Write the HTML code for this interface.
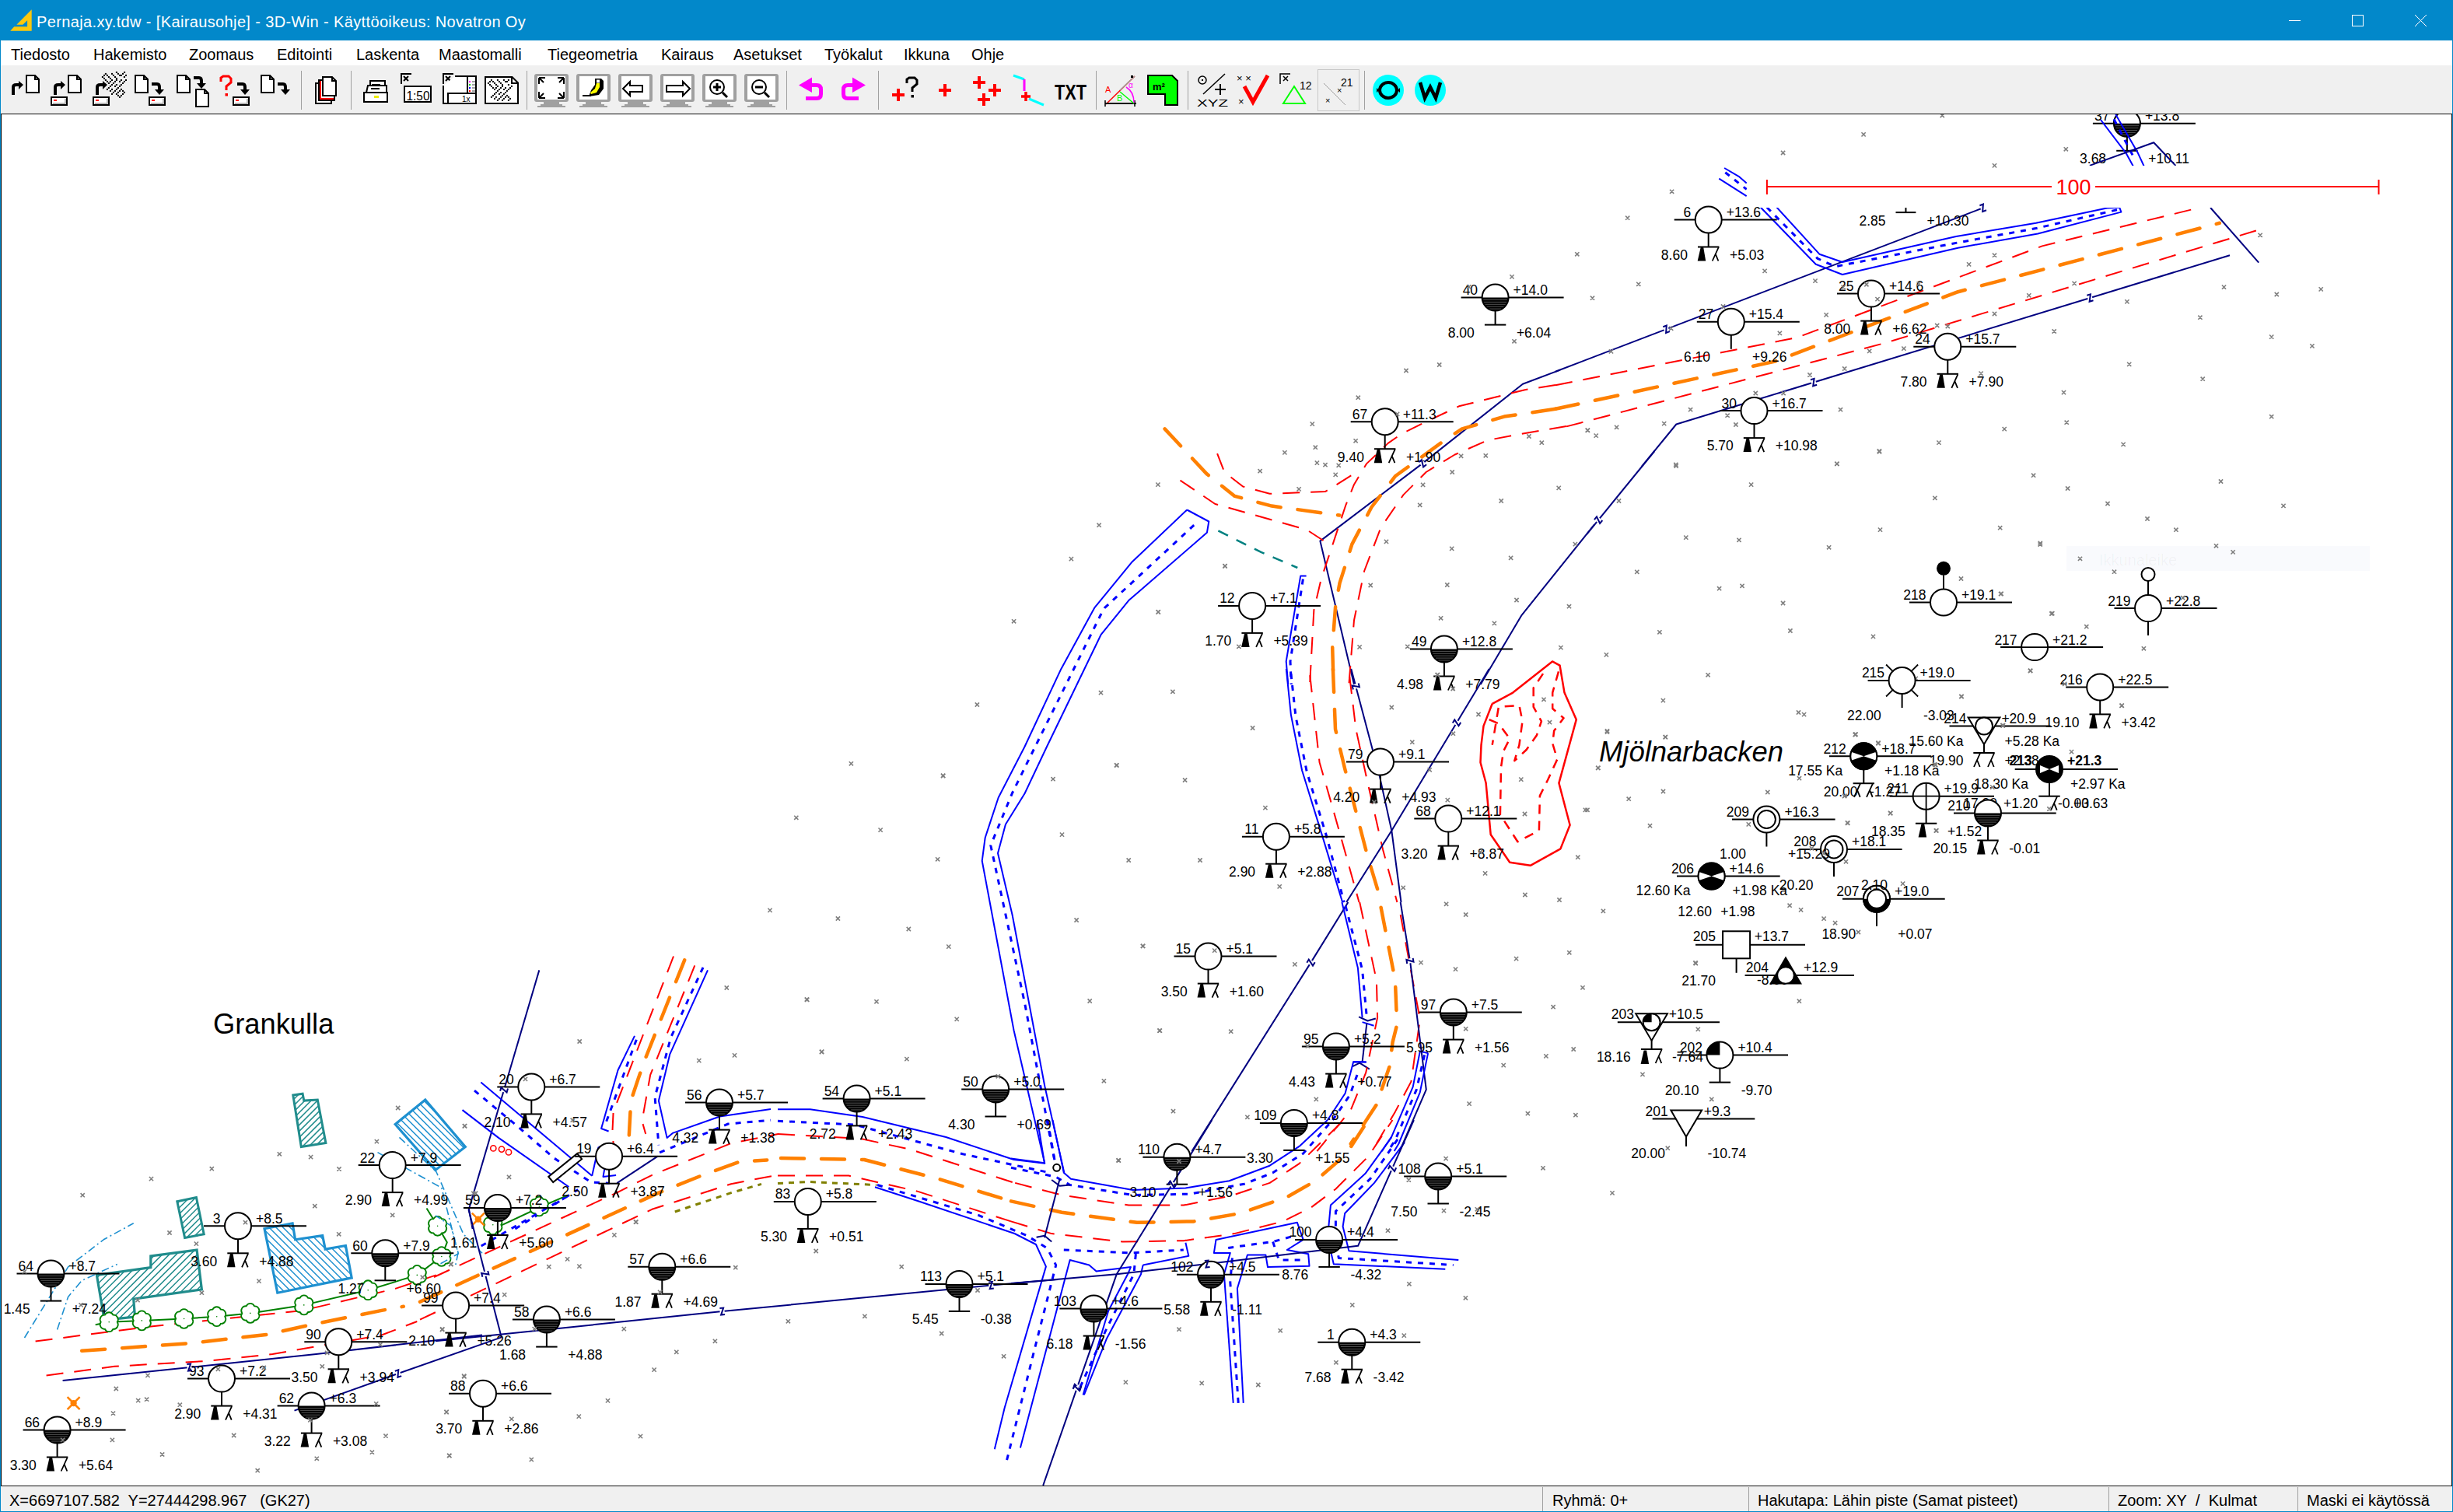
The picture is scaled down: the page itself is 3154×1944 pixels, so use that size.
<!DOCTYPE html><html><head><meta charset="utf-8"><style>
html,body{margin:0;padding:0;width:3154px;height:1944px;overflow:hidden;background:#fff;}
.t{position:absolute;white-space:nowrap;font-family:"Liberation Sans",sans-serif;line-height:1;}
svg text{font-family:"Liberation Sans",sans-serif;}
</style></head><body>
<div style="position:absolute;left:0;top:0;width:3154px;height:52px;background:#0288ca"></div>
<svg style="position:absolute;left:0;top:0" width="60" height="52"><path d="M13.2,39.7 L18.2,34.2 H35.1 V26.3 L29.4,31.8 H21.3 L40.7,12.2 V39.7 Z" fill="#fcc80c"/></svg>
<div class="t" style="left:47px;top:18px;font-size:20px;color:#fff;letter-spacing:0.37px;">Pernaja.xy.tdw - [Kairausohje] - 3D-Win - Käyttöoikeus: Novatron Oy</div>
<svg style="position:absolute;left:2900px;top:0" width="254" height="52"><line x1="43" y1="26.5" x2="58" y2="26.5" stroke="#fff" stroke-width="1"/><rect x="124.5" y="19.5" width="14" height="14" fill="none" stroke="#fff" stroke-width="1"/><line x1="205" y1="19" x2="220" y2="34" stroke="#fff" stroke-width="1"/><line x1="220" y1="19" x2="205" y2="34" stroke="#fff" stroke-width="1"/></svg>
<div style="position:absolute;left:0;top:52px;width:3154px;height:32px;background:#fff"></div>
<div class="t" style="left:14px;top:60px;font-size:20px;color:#000;">Tiedosto</div>
<div class="t" style="left:120px;top:60px;font-size:20px;color:#000;">Hakemisto</div>
<div class="t" style="left:243px;top:60px;font-size:20px;color:#000;">Zoomaus</div>
<div class="t" style="left:356px;top:60px;font-size:20px;color:#000;">Editointi</div>
<div class="t" style="left:458px;top:60px;font-size:20px;color:#000;">Laskenta</div>
<div class="t" style="left:564px;top:60px;font-size:20px;color:#000;">Maastomalli</div>
<div class="t" style="left:704px;top:60px;font-size:20px;color:#000;">Tiegeometria</div>
<div class="t" style="left:850px;top:60px;font-size:20px;color:#000;">Kairaus</div>
<div class="t" style="left:943px;top:60px;font-size:20px;color:#000;">Asetukset</div>
<div class="t" style="left:1060px;top:60px;font-size:20px;color:#000;">Työkalut</div>
<div class="t" style="left:1162px;top:60px;font-size:20px;color:#000;">Ikkuna</div>
<div class="t" style="left:1249px;top:60px;font-size:20px;color:#000;">Ohje</div>
<div style="position:absolute;left:0;top:84px;width:3154px;height:61px;background:#f0f0f0"></div>
<svg style="position:absolute;left:0;top:0" width="1900" height="146"><defs><clipPath id="tbclip"><rect x="0" y="84" width="1900" height="61"/></clipPath></defs><g clip-path="url(#tbclip)"><path d="M17,122 V112 Q17,109 21,109 H24" fill="none" stroke="#000" stroke-width="4"/><path d="M24,104 L30,109 L24,115 Z" fill="#000"/><path d="M34,97 H45 L50,102 V119 H34 Z" fill="#fff" stroke="#000" stroke-width="2"/><path d="M45,97 V102 H50" fill="none" stroke="#000" stroke-width="2"/><path d="M71,122 V112 Q71,109 75,109 H78" fill="none" stroke="#000" stroke-width="4"/><path d="M78,104 L84,109 L78,115 Z" fill="#000"/><path d="M88,97 H99 L104,102 V119 H88 Z" fill="#fff" stroke="#000" stroke-width="2"/><path d="M99,97 V102 H104" fill="none" stroke="#000" stroke-width="2"/><rect x="66" y="125" width="20" height="10" fill="#fff" stroke="#000" stroke-width="2"/><rect x="69" y="128" width="4" height="2" fill="#f00"/><path d="M68,133 H84 V127" fill="none" stroke="#a0a0a0" stroke-width="1.5"/><rect x="148.9" y="92.0" width="2" height="2" fill="#000"/><rect x="159.1" y="92.0" width="2" height="2" fill="#000"/><rect x="134.9" y="93.9" width="2" height="2" fill="#000"/><rect x="143.0" y="93.9" width="2" height="2" fill="#000"/><rect x="150.9" y="93.9" width="2" height="2" fill="#000"/><rect x="157.0" y="93.9" width="2" height="2" fill="#000"/><rect x="133.0" y="95.9" width="2" height="2" fill="#000"/><rect x="136.9" y="95.9" width="2" height="2" fill="#000"/><rect x="144.9" y="95.9" width="2" height="2" fill="#000"/><rect x="153.0" y="95.9" width="2" height="2" fill="#000"/><rect x="154.9" y="95.9" width="2" height="2" fill="#000"/><rect x="161.0" y="95.9" width="2" height="2" fill="#000"/><rect x="130.9" y="98.0" width="2" height="2" fill="#000"/><rect x="138.9" y="98.0" width="2" height="2" fill="#000"/><rect x="147.0" y="98.0" width="2" height="2" fill="#000"/><rect x="158.9" y="98.0" width="2" height="2" fill="#000"/><rect x="133.0" y="99.9" width="2" height="2" fill="#000"/><rect x="140.9" y="99.9" width="2" height="2" fill="#000"/><rect x="148.9" y="99.9" width="2" height="2" fill="#000"/><rect x="134.9" y="102.0" width="2" height="2" fill="#000"/><rect x="143.0" y="102.0" width="2" height="2" fill="#000"/><rect x="148.9" y="102.0" width="2" height="2" fill="#000"/><rect x="154.9" y="102.0" width="2" height="2" fill="#000"/><rect x="161.0" y="102.0" width="2" height="2" fill="#000"/><rect x="136.9" y="103.9" width="2" height="2" fill="#000"/><rect x="140.9" y="103.9" width="2" height="2" fill="#000"/><rect x="147.0" y="103.9" width="2" height="2" fill="#000"/><rect x="153.0" y="103.9" width="2" height="2" fill="#000"/><rect x="158.9" y="103.9" width="2" height="2" fill="#000"/><rect x="138.9" y="106.0" width="2" height="2" fill="#000"/><rect x="144.9" y="106.0" width="2" height="2" fill="#000"/><rect x="157.0" y="106.0" width="2" height="2" fill="#000"/><rect x="143.0" y="108.0" width="2" height="2" fill="#000"/><rect x="148.9" y="108.0" width="2" height="2" fill="#000"/><rect x="154.9" y="108.0" width="2" height="2" fill="#000"/><rect x="140.9" y="109.9" width="2" height="2" fill="#000"/><rect x="147.0" y="109.9" width="2" height="2" fill="#000"/><rect x="153.0" y="109.9" width="2" height="2" fill="#000"/><rect x="138.9" y="112.0" width="2" height="2" fill="#000"/><rect x="150.9" y="112.0" width="2" height="2" fill="#000"/><rect x="136.9" y="113.9" width="2" height="2" fill="#000"/><rect x="143.0" y="113.9" width="2" height="2" fill="#000"/><rect x="148.9" y="113.9" width="2" height="2" fill="#000"/><rect x="154.9" y="113.9" width="2" height="2" fill="#000"/><rect x="140.9" y="115.9" width="2" height="2" fill="#000"/><rect x="147.0" y="115.9" width="2" height="2" fill="#000"/><rect x="153.0" y="115.9" width="2" height="2" fill="#000"/><rect x="157.0" y="115.9" width="2" height="2" fill="#000"/><rect x="144.9" y="117.8" width="2" height="2" fill="#000"/><rect x="150.9" y="117.8" width="2" height="2" fill="#000"/><rect x="158.9" y="117.8" width="2" height="2" fill="#000"/><rect x="143.0" y="119.9" width="2" height="2" fill="#000"/><rect x="148.9" y="119.9" width="2" height="2" fill="#000"/><rect x="157.0" y="119.9" width="2" height="2" fill="#000"/><rect x="150.9" y="121.9" width="2" height="2" fill="#000"/><rect x="154.9" y="121.9" width="2" height="2" fill="#000"/><rect x="153.0" y="123.9" width="2" height="2" fill="#000"/><path d="M125,122 V112 Q125,109 129,109 H132" fill="none" stroke="#000" stroke-width="4"/><path d="M132,104 L138,109 L132,115 Z" fill="#000"/><rect x="120" y="125" width="20" height="10" fill="#fff" stroke="#000" stroke-width="2"/><rect x="123" y="128" width="4" height="2" fill="#f00"/><path d="M122,133 H138 V127" fill="none" stroke="#a0a0a0" stroke-width="1.5"/><path d="M174,97 H185 L190,102 V119 H174 Z" fill="#fff" stroke="#000" stroke-width="2"/><path d="M185,97 V102 H190" fill="none" stroke="#000" stroke-width="2"/><path d="M195,108 H202 Q205,108 205,112 V116" fill="none" stroke="#000" stroke-width="4"/><path d="M199,115 H211 L205,122 Z" fill="#000"/><rect x="192" y="125" width="20" height="10" fill="#fff" stroke="#000" stroke-width="2"/><rect x="195" y="128" width="4" height="2" fill="#f00"/><path d="M194,133 H210 V127" fill="none" stroke="#a0a0a0" stroke-width="1.5"/><path d="M228,97 H239 L244,102 V119 H228 Z" fill="#fff" stroke="#000" stroke-width="2"/><path d="M239,97 V102 H244" fill="none" stroke="#000" stroke-width="2"/><path d="M249,100 H256 Q259,100 259,104 V108" fill="none" stroke="#000" stroke-width="4"/><path d="M253,107 H265 L259,114 Z" fill="#000"/><path d="M252,115 H263 L268,120 V137 H252 Z" fill="#fff" stroke="#000" stroke-width="2"/><path d="M263,115 V120 H268" fill="none" stroke="#000" stroke-width="2"/><path d="M284,105 V100 L287,98 H294 L297,101 V106 L291,111 V116" fill="none" stroke="#f00" stroke-width="3"/><rect x="289.5" y="120" width="3.5" height="3.5" fill="#f00"/><path d="M305,108 H312 Q315,108 315,112 V116" fill="none" stroke="#000" stroke-width="4"/><path d="M309,115 H321 L315,122 Z" fill="#000"/><rect x="300" y="125" width="20" height="10" fill="#fff" stroke="#000" stroke-width="2"/><rect x="303" y="128" width="4" height="2" fill="#f00"/><path d="M302,133 H318 V127" fill="none" stroke="#a0a0a0" stroke-width="1.5"/><path d="M336,97 H347 L352,102 V119 H336 Z" fill="#fff" stroke="#000" stroke-width="2"/><path d="M347,97 V102 H352" fill="none" stroke="#000" stroke-width="2"/><path d="M357,108 H364 Q367,108 367,112 V116" fill="none" stroke="#000" stroke-width="4"/><path d="M361,115 H373 L367,122 Z" fill="#000"/><rect x="387" y="91" width="1" height="50" fill="#a0a0a0"/><rect x="406" y="107" width="20" height="26" fill="#fff" stroke="#000" stroke-width="2"/><rect x="410" y="103" width="20" height="26" fill="#fff" stroke="#000" stroke-width="2"/><path d="M412,104 V127 H429" fill="none" stroke="#f00" stroke-width="2"/><path d="M415,99 H427 L432,104 V123 H415 Z" fill="#fff" stroke="#000" stroke-width="2"/><path d="M427,99 V104 H432" fill="none" stroke="#000" stroke-width="2"/><rect x="451" y="91" width="1" height="50" fill="#a0a0a0"/><path d="M476,104 H495 V110 H476 Z" fill="#fff" stroke="#000" stroke-width="2"/><path d="M468,119 H498 V131 H468 Z" fill="#fff" stroke="#000" stroke-width="2"/><path d="M473,110 H497 V119 H471 Z" fill="#fff" stroke="#000" stroke-width="2"/><rect x="481" y="123" width="6" height="3" fill="#ee0"/><rect x="478" y="108" width="11" height="2" fill="#000"/><rect x="477" y="113" width="11" height="2" fill="#000"/><path d="M516,108 V95 H529" fill="none" stroke="#000" stroke-width="2"/><path d="M519,98 L525,104 M525,98 L519,104" stroke="#000" stroke-width="2"/><rect x="520" y="111" width="34" height="20" fill="#fff" stroke="#000" stroke-width="2"/><text x="522.5" y="128.5" font-size="17" fill="#000" style="font-family:'Liberation Sans'" textLength="30" lengthAdjust="spacingAndGlyphs">1:50</text><path d="M570,108 V95 H583" fill="none" stroke="#000" stroke-width="2"/><path d="M573,98 L579,104 M579,98 L573,104" stroke="#000" stroke-width="2"/><path d="M585,98 H612 V133 H570 V110" fill="#fff" stroke="#000" stroke-width="2"/><path d="M601,98 V120 M576,133 V120 H612" fill="none" stroke="#000" stroke-width="2"/><rect x="603" y="104" width="2" height="2" fill="#f0f"/><rect x="603" y="108" width="2" height="2" fill="#0c0"/><rect x="603" y="112" width="2" height="2" fill="#00f"/><rect x="603" y="116" width="2" height="2" fill="#f00"/><path d="M607,105 H611 M607,109 H611 M607,113 H611 M607,117 H611" stroke="#a0a0a0" stroke-width="2"/><text x="594" y="131" font-size="10" fill="#000" style="font-family:'Liberation Sans'">1x</text><path d="M624,99 H658.5 L666,106.5 V133 H624 Z" fill="#fff" stroke="#000" stroke-width="2"/><path d="M658,99 V107 H666" fill="none" stroke="#000" stroke-width="2"/><rect x="630.9" y="101.9" width="2" height="2" fill="#000"/><rect x="638.9" y="101.9" width="2" height="2" fill="#000"/><rect x="646.9" y="101.9" width="2" height="2" fill="#000"/><rect x="652.9" y="101.9" width="2" height="2" fill="#000"/><rect x="629.0" y="104.0" width="2" height="2" fill="#000"/><rect x="632.9" y="104.0" width="2" height="2" fill="#000"/><rect x="640.9" y="104.0" width="2" height="2" fill="#000"/><rect x="649.0" y="104.0" width="2" height="2" fill="#000"/><rect x="650.9" y="104.0" width="2" height="2" fill="#000"/><rect x="626.9" y="105.9" width="2" height="2" fill="#000"/><rect x="635.0" y="105.9" width="2" height="2" fill="#000"/><rect x="642.9" y="105.9" width="2" height="2" fill="#000"/><rect x="629.0" y="108.0" width="2" height="2" fill="#000"/><rect x="636.9" y="108.0" width="2" height="2" fill="#000"/><rect x="645.0" y="108.0" width="2" height="2" fill="#000"/><rect x="652.9" y="108.0" width="2" height="2" fill="#000"/><rect x="630.9" y="109.9" width="2" height="2" fill="#000"/><rect x="638.9" y="109.9" width="2" height="2" fill="#000"/><rect x="645.0" y="109.9" width="2" height="2" fill="#000"/><rect x="656.9" y="109.9" width="2" height="2" fill="#000"/><rect x="632.9" y="112.0" width="2" height="2" fill="#000"/><rect x="636.9" y="112.0" width="2" height="2" fill="#000"/><rect x="642.9" y="112.0" width="2" height="2" fill="#000"/><rect x="649.0" y="112.0" width="2" height="2" fill="#000"/><rect x="655.0" y="112.0" width="2" height="2" fill="#000"/><rect x="635.0" y="114.0" width="2" height="2" fill="#000"/><rect x="640.9" y="114.0" width="2" height="2" fill="#000"/><rect x="646.9" y="114.0" width="2" height="2" fill="#000"/><rect x="652.9" y="114.0" width="2" height="2" fill="#000"/><rect x="638.9" y="115.9" width="2" height="2" fill="#000"/><rect x="650.9" y="115.9" width="2" height="2" fill="#000"/><rect x="636.9" y="118.0" width="2" height="2" fill="#000"/><rect x="642.9" y="118.0" width="2" height="2" fill="#000"/><rect x="649.0" y="118.0" width="2" height="2" fill="#000"/><rect x="635.0" y="119.9" width="2" height="2" fill="#000"/><rect x="640.9" y="119.9" width="2" height="2" fill="#000"/><rect x="646.9" y="119.9" width="2" height="2" fill="#000"/><rect x="632.9" y="121.9" width="2" height="2" fill="#000"/><rect x="645.0" y="121.9" width="2" height="2" fill="#000"/><rect x="650.9" y="121.9" width="2" height="2" fill="#000"/><rect x="630.9" y="123.8" width="2" height="2" fill="#000"/><rect x="636.9" y="123.8" width="2" height="2" fill="#000"/><rect x="642.9" y="123.8" width="2" height="2" fill="#000"/><rect x="649.0" y="123.8" width="2" height="2" fill="#000"/><rect x="652.9" y="123.8" width="2" height="2" fill="#000"/><rect x="635.0" y="125.9" width="2" height="2" fill="#000"/><rect x="640.9" y="125.9" width="2" height="2" fill="#000"/><rect x="646.9" y="125.9" width="2" height="2" fill="#000"/><rect x="655.0" y="125.9" width="2" height="2" fill="#000"/><rect x="638.9" y="127.9" width="2" height="2" fill="#000"/><rect x="645.0" y="127.9" width="2" height="2" fill="#000"/><rect x="652.9" y="127.9" width="2" height="2" fill="#000"/><rect x="677" y="91" width="1" height="50" fill="#a0a0a0"/><g transform="translate(687,94)"><rect x="0" y="1" width="44" height="36" rx="3" fill="#a0a0a0"/><rect x="4" y="4" width="36" height="30" fill="#fff"/><rect x="12" y="37" width="20" height="3" fill="#a0a0a0"/><rect x="8" y="40" width="28" height="2" fill="#a0a0a0"/><rect x="4" y="42" width="36" height="2" fill="#a0a0a0"/><path d="M6,6 h8 M6,6 v8 M6,6 l6,6 M38,6 h-8 M38,6 v8 M38,6 l-6,6 M6,32 h8 M6,32 v-8 M6,32 l6,-6 M38,32 h-8 M38,32 v-8 M38,32 l-6,-6" stroke="#000" stroke-width="2" fill="none"/></g><g transform="translate(741,94)"><rect x="0" y="1" width="44" height="36" rx="3" fill="#a0a0a0"/><rect x="4" y="4" width="36" height="30" fill="#fff"/><rect x="12" y="37" width="20" height="3" fill="#a0a0a0"/><rect x="8" y="40" width="28" height="2" fill="#a0a0a0"/><rect x="4" y="42" width="36" height="2" fill="#a0a0a0"/><path d="M8,29 H19" stroke="#000" stroke-width="2"/><path d="M16,30 L29,28 L35,20 V10 L32,7 H24 V15 L19,22 Z" fill="#000"/><path d="M19,27 L26,25 L30,18 V13 H26 L24,20 L18,25 Z" fill="#ff0"/><rect x="26" y="8.5" width="4" height="4" fill="#fff"/></g><g transform="translate(795,94)"><rect x="0" y="1" width="44" height="36" rx="3" fill="#a0a0a0"/><rect x="4" y="4" width="36" height="30" fill="#fff"/><rect x="12" y="37" width="20" height="3" fill="#a0a0a0"/><rect x="8" y="40" width="28" height="2" fill="#a0a0a0"/><rect x="4" y="42" width="36" height="2" fill="#a0a0a0"/><path d="M6,20 L15,11 V16 H31 V24 H15 V29 Z" fill="#fff" stroke="#000" stroke-width="2"/></g><g transform="translate(849,94)"><rect x="0" y="1" width="44" height="36" rx="3" fill="#a0a0a0"/><rect x="4" y="4" width="36" height="30" fill="#fff"/><rect x="12" y="37" width="20" height="3" fill="#a0a0a0"/><rect x="8" y="40" width="28" height="2" fill="#a0a0a0"/><rect x="4" y="42" width="36" height="2" fill="#a0a0a0"/><path d="M38,20 L29,11 V16 H8 V24 H29 V29 Z" fill="#fff" stroke="#000" stroke-width="2"/></g><g transform="translate(903,94)"><rect x="0" y="1" width="44" height="36" rx="3" fill="#a0a0a0"/><rect x="4" y="4" width="36" height="30" fill="#fff"/><rect x="12" y="37" width="20" height="3" fill="#a0a0a0"/><rect x="8" y="40" width="28" height="2" fill="#a0a0a0"/><rect x="4" y="42" width="36" height="2" fill="#a0a0a0"/><circle cx="19" cy="18" r="9" fill="#fff" stroke="#000" stroke-width="2"/><path d="M14,18 H24 M19,13 V23" stroke="#000" stroke-width="3"/><path d="M26,25 L32,31" stroke="#000" stroke-width="3"/></g><g transform="translate(957,94)"><rect x="0" y="1" width="44" height="36" rx="3" fill="#a0a0a0"/><rect x="4" y="4" width="36" height="30" fill="#fff"/><rect x="12" y="37" width="20" height="3" fill="#a0a0a0"/><rect x="8" y="40" width="28" height="2" fill="#a0a0a0"/><rect x="4" y="42" width="36" height="2" fill="#a0a0a0"/><circle cx="19" cy="18" r="9" fill="#fff" stroke="#000" stroke-width="2"/><path d="M14,18 H24" stroke="#000" stroke-width="3"/><path d="M26,25 L32,31" stroke="#000" stroke-width="3"/></g><rect x="1011" y="91" width="1" height="50" fill="#a0a0a0"/><path d="M1043,109.5 H1050 Q1055.5,109.5 1055.5,115 V121 Q1055.5,126.5 1050,126.5 H1036" fill="none" stroke="#f0f" stroke-width="5"/><path d="M1027,109.5 L1044,99.5 V119 Z" fill="#f0f"/><path d="M1097,109.5 H1090 Q1084.5,109.5 1084.5,115 V121 Q1084.5,126.5 1090,126.5 H1104" fill="none" stroke="#f0f" stroke-width="5"/><path d="M1113,109.5 L1096,99.5 V119 Z" fill="#f0f"/><rect x="1129" y="91" width="1" height="50" fill="#a0a0a0"/><path d="M1147,122 H1163 M1155,114 V130" stroke="#f00" stroke-width="4" fill="none"/><path d="M1166,107 V102 L1169,100 H1176 L1179,103 V108 L1173,113 V118" fill="none" stroke="#000" stroke-width="3"/><rect x="1171.5" y="122" width="3.5" height="3.5" fill="#000"/><path d="M1207,116 H1223 M1215,108 V124" stroke="#f00" stroke-width="4" fill="none"/><path d="M1251,106 H1267 M1259,98 V114" stroke="#f00" stroke-width="4" fill="none"/><path d="M1271,116 H1287 M1279,108 V124" stroke="#f00" stroke-width="4" fill="none"/><path d="M1257,128 H1273 M1265,120 V136" stroke="#f00" stroke-width="4" fill="none"/><path d="M1303,97 L1317,102" stroke="#0ff" stroke-width="3"/><path d="M1317,102 V117" stroke="#f0f" stroke-width="3"/><path d="M1323,127 L1342,135" stroke="#0ff" stroke-width="3"/><path d="M1313,124 H1325 M1319,118 V130" stroke="#f00" stroke-width="3.5" fill="none"/><text x="1356" y="128" font-size="28" font-weight="bold" fill="#000" style="font-family:'Liberation Sans'" textLength="41" lengthAdjust="spacingAndGlyphs">TXT</text><rect x="1409" y="91" width="1" height="50" fill="#a0a0a0"/><path d="M1422,134 L1459,98" stroke="#f00" stroke-width="1.5"/><path d="M1440,116 L1459,98" stroke="#a0a0a0" stroke-width="1.5"/><path d="M1421,133 H1461" stroke="#000" stroke-width="2"/><path d="M1421,129 V137 M1459,129 V137" stroke="#000" stroke-width="1.5"/><path d="M1440,118 L1458,133" stroke="#0f0" stroke-width="1.5"/><path d="M1448,112 Q1458,118 1458,132" stroke="#f0f" stroke-width="1.5" fill="none"/><rect x="1454" y="97" width="3" height="3" fill="#000"/><text x="1421" y="119" font-size="11" fill="#f00" style="font-family:'Liberation Sans'">A</text><text x="1436" y="130" font-size="11" fill="#0f0" style="font-family:'Liberation Sans'">B</text><text x="1451" y="113" font-size="10" fill="#f0f" style="font-family:'Liberation Sans'">α</text><path d="M1476,97 H1507 L1514,104 V135 H1498 V121 H1476 Z" fill="#0f0" stroke="#000" stroke-width="2"/><text x="1482" y="116" font-size="13" font-weight="bold" fill="#000" style="font-family:'Liberation Sans'">m²</text><rect x="1527" y="91" width="1" height="50" fill="#a0a0a0"/><circle cx="1546" cy="103" r="5" fill="none" stroke="#000" stroke-width="1.5"/><rect x="1545" y="102" width="2" height="2" fill="#000"/><path d="M1547,121 L1575,95" stroke="#000" stroke-width="1.5"/><path d="M1562,115 H1576 M1569,108 V122" stroke="#000" stroke-width="2"/><text x="1539" y="137" font-size="13" fill="#000" style="font-family:'Liberation Sans'" textLength="40" lengthAdjust="spacingAndGlyphs">XYZ</text><text x="1590" y="105" font-size="13" fill="#000" style="font-family:'Liberation Sans'">× ×</text><text x="1592" y="135" font-size="13" fill="#000" style="font-family:'Liberation Sans'">×</text><path d="M1600,111 L1611,131 L1630,97" stroke="#f00" stroke-width="5" fill="none"/><path d="M1646,108 V95 H1659" fill="none" stroke="#000" stroke-width="1.5"/><path d="M1650,98 L1656,104 M1656,98 L1650,104" stroke="#000" stroke-width="1.5"/><path d="M1650,133 L1664,111 L1678,133 Z" fill="none" stroke="#0f0" stroke-width="2"/><text x="1671" y="115" font-size="14" fill="#000" style="font-family:'Liberation Sans'">12</text><rect x="1694.5" y="89.5" width="53" height="53" fill="#f0f0f0" stroke="#c8c8c8" stroke-width="1"/><path d="M1702,107 L1730,135" stroke="#a0a0a0" stroke-width="1"/><text x="1704" y="133" font-size="11" fill="#000" style="font-family:'Liberation Sans'">×</text><text x="1719" y="120" font-size="11" fill="#000" style="font-family:'Liberation Sans'">×</text><text x="1724" y="111" font-size="14" fill="#000" style="font-family:'Liberation Sans'">21</text><rect x="1754" y="91" width="1" height="50" fill="#a0a0a0"/><circle cx="1785" cy="116" r="20" fill="#0ff"/><ellipse cx="1785" cy="116" rx="11" ry="10" fill="none" stroke="#000" stroke-width="4"/><path d="M1773,116 l-3,-3 v6 z M1797,116 l3,-3 v6z" fill="#000"/><circle cx="1839" cy="116" r="20" fill="#0ff"/><path d="M1826,106 L1832,126 L1839,112 L1846,126 L1852,106" fill="none" stroke="#000" stroke-width="4.5"/></g></svg>
<div style="position:absolute;left:1px;top:146px;width:3152px;height:1765px;border:1px solid #000;box-sizing:border-box;background:#fff"></div>
<div style="position:absolute;left:0;top:145px;width:3154px;height:1px;background:#fff"></div>
<svg style="position:absolute;left:0;top:0" width="3154" height="1944"><defs><clipPath id="dc"><rect x="2" y="147" width="3150" height="1763"/></clipPath></defs><g clip-path="url(#dc)">
<polyline points="2000.0,477.8 2550.4,267.0" fill="none" stroke="#000080" stroke-width="2" stroke-linecap="butt" stroke-linejoin="round"/>
<polyline points="2110.6,600.1 2155.3,545.5 2867.0,328.2" fill="none" stroke="#000080" stroke-width="2" stroke-linecap="butt" stroke-linejoin="round"/>
<polyline points="2842.1,267.0 2904.2,337.6" fill="none" stroke="#000080" stroke-width="2" stroke-linecap="butt" stroke-linejoin="round"/>
<polyline points="2263.9,266.7 2334.7,339.7 2368.9,353.0 2517.4,318.7 2620.1,300.5 2727.4,272.6 2725.1,266.7" fill="none" stroke="#0000ff" stroke-width="2" stroke-linecap="butt" stroke-linejoin="round"/>
<polyline points="2284.5,266.7 2339.3,326.7 2368.9,337.0 2515.1,303.9 2617.8,286.8 2709.1,267.4 2725.1,266.7" fill="none" stroke="#0000ff" stroke-width="2" stroke-linecap="butt" stroke-linejoin="round"/>
<polyline points="2271.9,266.7 2337.0,332.4 2359.8,342.7 2517.4,311.9 2617.8,293.6 2722.8,269.6" fill="none" stroke="#0000ff" stroke-width="3" stroke-dasharray="7 8" stroke-linecap="butt" stroke-linejoin="round"/>
<polyline points="2217.1,216.0 2236.5,227.4 2245.7,235.4" fill="none" stroke="#0000ff" stroke-width="2" stroke-linecap="butt" stroke-linejoin="round"/>
<polyline points="2210.3,229.7 2245.7,252.1" fill="none" stroke="#0000ff" stroke-width="2" stroke-linecap="butt" stroke-linejoin="round"/>
<polyline points="2218.3,221.7 2245.7,243.4" fill="none" stroke="#0000ff" stroke-width="3" stroke-dasharray="7 8" stroke-linecap="butt" stroke-linejoin="round"/>
<polyline points="2000.0,495.2 2310.5,434.0 2625.7,316.4 2828.0,267.0" fill="none" stroke="#ff0000" stroke-width="2" stroke-dasharray="22 14" stroke-linecap="butt" stroke-linejoin="round"/>
<polyline points="2000.0,525.8 2282.3,464.6 2517.5,375.2 2853.9,286.8" fill="none" stroke="#ff8000" stroke-width="4.5" stroke-dasharray="30 22" stroke-linecap="round" stroke-linejoin="round"/>
<polyline points="2014.1,548.4 2423.4,441.1 2912.7,292.9" fill="none" stroke="#ff0000" stroke-width="2" stroke-dasharray="22 14" stroke-linecap="butt" stroke-linejoin="round"/>
<line x1="2690.9" y1="158.8" x2="2822.9" y2="158.8" stroke="#000" stroke-width="2"/>
<circle cx="2734.9" cy="158.8" r="17" fill="#fff" stroke="#000" stroke-width="2"/><path d="M2717.9,158.8 A17,17 0 0 0 2751.9,158.8 Z" fill="#000"/><line x1="2719.6" y1="161.7" x2="2750.2" y2="161.7" stroke="#777" stroke-width="0.7"/><line x1="2720.4" y1="164.6" x2="2749.4" y2="164.6" stroke="#777" stroke-width="0.7"/><line x1="2721.8" y1="167.5" x2="2748.0" y2="167.5" stroke="#777" stroke-width="0.7"/><line x1="2724.0" y1="170.4" x2="2745.8" y2="170.4" stroke="#777" stroke-width="0.7"/><line x1="2727.5" y1="173.3" x2="2742.3" y2="173.3" stroke="#777" stroke-width="0.7"/>
<text x="2712.4" y="155.20000000000002" font-size="17.5" fill="#000" text-anchor="end">37</text>
<text x="2757.9" y="155.20000000000002" font-size="17.5" fill="#000" text-anchor="start">+13.8</text>
<line x1="2734.9" y1="175.8" x2="2734.9" y2="193.8" stroke="#000" stroke-width="2"/>
<line x1="2721.2000000000003" y1="193.8" x2="2748.6" y2="193.8" stroke="#000" stroke-width="2"/>
<text x="2708.1" y="210.10000000000002" font-size="17.5" fill="#000" text-anchor="end">3.68</text>
<text x="2762.2000000000003" y="210.10000000000002" font-size="17.5" fill="#000" text-anchor="start">+10.11</text>
<polyline points="2701,154 2733.4,196.6 2743,213.9" fill="none" stroke="#0000ff" stroke-width="2" stroke-linecap="butt" stroke-linejoin="round"/>
<polyline points="2720.2,147.1 2748.8,196.6 2756.8,213.9" fill="none" stroke="#0000ff" stroke-width="2" stroke-linecap="butt" stroke-linejoin="round"/>
<polyline points="2718,153.3 2744.4,204" fill="none" stroke="#0000ff" stroke-width="3" stroke-dasharray="7 8" stroke-linecap="butt" stroke-linejoin="round"/>
<polyline points="2686.9,212.9 2769.2,183.3 2797.4,212.9" fill="none" stroke="#000080" stroke-width="2" stroke-linecap="butt" stroke-linejoin="round"/>
<rect x="2246" y="213" width="908" height="54" fill="#fff"/>
<line x1="2271.9" y1="240" x2="3058.5" y2="240" stroke="#f00" stroke-width="2"/>
<line x1="2271.9" y1="231" x2="2271.9" y2="250" stroke="#f00" stroke-width="2"/><line x1="3058.5" y1="231" x2="3058.5" y2="250" stroke="#f00" stroke-width="2"/>
<rect x="2638" y="226" width="56" height="28" fill="#fff"/>
<text x="2666" y="250" font-size="27" fill="#f00" text-anchor="middle">100</text>
<line x1="2152.7" y1="282.5" x2="2284.7" y2="282.5" stroke="#000" stroke-width="2"/>
<circle cx="2196.7" cy="282.5" r="17" fill="#fff" stroke="#000" stroke-width="2"/>
<text x="2174.2" y="278.9" font-size="17.5" fill="#000" text-anchor="end">6</text>
<text x="2219.7" y="278.9" font-size="17.5" fill="#000" text-anchor="start">+13.6</text>
<line x1="2196.7" y1="299.5" x2="2196.7" y2="317.5" stroke="#000" stroke-width="2"/>
<line x1="2183.0" y1="317.5" x2="2210.3999999999996" y2="317.5" stroke="#000" stroke-width="2"/>
<path d="M2182.7,335.5 H2193.2 L2190.2,318.0 H2186.7 Z" fill="#000"/><path d="M2209.7,318.0 L2201.7,335.5 M2205.8999999999996,327.0 L2209.3999999999996,335.5" stroke="#000" stroke-width="1.8" fill="none"/>
<text x="2169.8999999999996" y="333.8" font-size="17.5" fill="#000" text-anchor="end">8.60</text>
<text x="2224.0" y="333.8" font-size="17.5" fill="#000" text-anchor="start">+5.03</text>
<line x1="2362.0" y1="377.6" x2="2494.0" y2="377.6" stroke="#000" stroke-width="2"/>
<circle cx="2406.0" cy="377.6" r="17" fill="#fff" stroke="#000" stroke-width="2"/>
<text x="2383.5" y="374.0" font-size="17.5" fill="#000" text-anchor="end">25</text>
<text x="2429.0" y="374.0" font-size="17.5" fill="#000" text-anchor="start">+14.6</text>
<line x1="2406.0" y1="394.6" x2="2406.0" y2="412.6" stroke="#000" stroke-width="2"/>
<line x1="2392.3" y1="412.6" x2="2419.7" y2="412.6" stroke="#000" stroke-width="2"/>
<path d="M2392.0,430.6 H2402.5 L2399.5,413.1 H2396.0 Z" fill="#000"/><path d="M2419.0,413.1 L2411.0,430.6 M2415.2,422.1 L2418.7,430.6" stroke="#000" stroke-width="1.8" fill="none"/>
<text x="2379.2" y="428.90000000000003" font-size="17.5" fill="#000" text-anchor="end">8.00</text>
<text x="2433.3" y="428.90000000000003" font-size="17.5" fill="#000" text-anchor="start">+6.62</text>
<line x1="2181.8" y1="413.8" x2="2313.8" y2="413.8" stroke="#000" stroke-width="2"/>
<circle cx="2225.8" cy="413.8" r="17" fill="#fff" stroke="#000" stroke-width="2"/>
<text x="2203.3" y="410.2" font-size="17.5" fill="#000" text-anchor="end">27</text>
<text x="2248.8" y="410.2" font-size="17.5" fill="#000" text-anchor="start">+15.4</text>
<line x1="2225.8" y1="430.8" x2="2225.8" y2="448.8" stroke="#000" stroke-width="2"/>
<text x="2199.0" y="465.1" font-size="17.5" fill="#000" text-anchor="end">6.10</text>
<text x="2253.1000000000004" y="465.1" font-size="17.5" fill="#000" text-anchor="start">+9.26</text>
<line x1="2460.3" y1="445.8" x2="2592.3" y2="445.8" stroke="#000" stroke-width="2"/>
<circle cx="2504.3" cy="445.8" r="17" fill="#fff" stroke="#000" stroke-width="2"/>
<text x="2481.8" y="442.2" font-size="17.5" fill="#000" text-anchor="end">24</text>
<text x="2527.3" y="442.2" font-size="17.5" fill="#000" text-anchor="start">+15.7</text>
<line x1="2504.3" y1="462.8" x2="2504.3" y2="480.8" stroke="#000" stroke-width="2"/>
<line x1="2490.6000000000004" y1="480.8" x2="2518.0" y2="480.8" stroke="#000" stroke-width="2"/>
<path d="M2490.3,498.8 H2500.8 L2497.8,481.3 H2494.3 Z" fill="#000"/><path d="M2517.3,481.3 L2509.3,498.8 M2513.5,490.3 L2517.0,498.8" stroke="#000" stroke-width="1.8" fill="none"/>
<text x="2477.5" y="497.1" font-size="17.5" fill="#000" text-anchor="end">7.80</text>
<text x="2531.6000000000004" y="497.1" font-size="17.5" fill="#000" text-anchor="start">+7.90</text>
<line x1="2211.5" y1="528.1" x2="2343.5" y2="528.1" stroke="#000" stroke-width="2"/>
<circle cx="2255.5" cy="528.1" r="17" fill="#fff" stroke="#000" stroke-width="2"/>
<text x="2233.0" y="524.5" font-size="17.5" fill="#000" text-anchor="end">30</text>
<text x="2278.5" y="524.5" font-size="17.5" fill="#000" text-anchor="start">+16.7</text>
<line x1="2255.5" y1="545.1" x2="2255.5" y2="563.1" stroke="#000" stroke-width="2"/>
<line x1="2241.8" y1="563.1" x2="2269.2" y2="563.1" stroke="#000" stroke-width="2"/>
<path d="M2241.5,581.1 H2252.0 L2249.0,563.6 H2245.5 Z" fill="#000"/><path d="M2268.5,563.6 L2260.5,581.1 M2264.7,572.6 L2268.2,581.1" stroke="#000" stroke-width="1.8" fill="none"/>
<text x="2228.7" y="579.4" font-size="17.5" fill="#000" text-anchor="end">5.70</text>
<text x="2282.8" y="579.4" font-size="17.5" fill="#000" text-anchor="start">+10.98</text>
<text x="2390.5" y="289.6" font-size="17.5" fill="#000" text-anchor="start">2.85</text>
<text x="2477.5" y="289.6" font-size="17.5" fill="#000" text-anchor="start">+10.30</text>
<line x1="2437.5" y1="273.1" x2="2463.4" y2="273.1" stroke="#000" stroke-width="2"/><line x1="2450.45" y1="267.1" x2="2450.45" y2="273.1" stroke="#000" stroke-width="2"/>
<path d="M2494.7000000000003,145.9L2499.9,151.1M2499.9,145.9L2494.7000000000003,151.1M2393.5,170.3L2398.7,175.5M2398.7,170.3L2393.5,175.5M2290.0,193.9L2295.2,199.1M2295.2,193.9L2290.0,199.1M2653.7000000000003,189.20000000000002L2658.9,194.4M2658.9,189.20000000000002L2653.7000000000003,194.4M2147.0,243.70000000000002L2152.2,248.9M2152.2,243.70000000000002L2147.0,248.9M2090.1,277.59999999999997L2095.2999999999997,282.8M2095.2999999999997,277.59999999999997L2090.1,282.8M2025.2,324.2L2030.3999999999999,329.40000000000003M2030.3999999999999,324.2L2025.2,329.40000000000003M2266.5,345.79999999999995L2271.7,351.0M2271.7,345.79999999999995L2266.5,351.0M2331.4,358.5L2336.6,363.70000000000005M2336.6,358.5L2331.4,363.70000000000005M2104.2000000000003,362.7L2109.4,367.90000000000003M2109.4,362.7L2104.2000000000003,367.90000000000003M2044.9,380.59999999999997L2050.1,385.8M2050.1,380.59999999999997L2044.9,385.8M2529.0,337.29999999999995L2534.2,342.5M2534.2,337.29999999999995L2529.0,342.5M2561.9,325.59999999999997L2567.1,330.8M2567.1,325.59999999999997L2561.9,330.8M2664.5,361.79999999999995L2669.7,367.0M2669.7,361.79999999999995L2664.5,367.0M2606.2000000000003,377.29999999999995L2611.4,382.5M2611.4,377.29999999999995L2606.2000000000003,382.5M2561.9,400.9L2567.1,406.1M2567.1,400.9L2561.9,406.1M2732.3,385.29999999999995L2737.5,390.5M2737.5,385.29999999999995L2732.3,390.5M2856.9,366.5L2862.1,371.70000000000005M2862.1,366.5L2856.9,371.70000000000005M2924.7000000000003,375.9L2929.9,381.1M2929.9,375.9L2924.7000000000003,381.1M2981.6,369.29999999999995L2986.7999999999997,374.5M2986.7999999999997,369.29999999999995L2981.6,374.5M2826.3,405.59999999999997L2831.5,410.8M2831.5,405.59999999999997L2826.3,410.8M2638.6,423.4L2643.7999999999997,428.6M2643.7999999999997,423.4L2638.6,428.6M2285.8,425.79999999999995L2291.0,431.0M2291.0,425.79999999999995L2285.8,431.0M2345.5,402.29999999999995L2350.7,407.5M2350.7,402.29999999999995L2345.5,407.5M2488.1,415.9L2493.2999999999997,421.1M2493.2999999999997,415.9L2488.1,421.1M2501.7000000000003,416.9L2506.9,422.1M2506.9,416.9L2501.7000000000003,422.1M2401.1,448.79999999999995L2406.2999999999997,454.0M2406.2999999999997,448.79999999999995L2401.1,454.0M2445.3,445.5L2450.5,450.70000000000005M2450.5,445.5L2445.3,450.70000000000005M2918.1,430.5L2923.2999999999997,435.70000000000005M2923.2999999999997,430.5L2918.1,435.70000000000005M2970.3,442.29999999999995L2975.5,447.5M2975.5,442.29999999999995L2970.3,447.5M2735.1,465.79999999999995L2740.2999999999997,471.0M2740.2999999999997,465.79999999999995L2735.1,471.0M2544.5,477.5L2549.7,482.70000000000005M2549.7,477.5L2544.5,482.70000000000005M2369.1,471.4L2374.2999999999997,476.6M2374.2999999999997,471.4L2369.1,476.6M2324.4,479.4L2329.6,484.6M2329.6,479.4L2324.4,484.6M2829.6,484.59999999999997L2834.7999999999997,489.8M2834.7999999999997,484.59999999999997L2829.6,489.8M2650.9,502.0L2656.1,507.20000000000005M2656.1,502.0L2650.9,507.20000000000005M2254.7000000000003,502.9L2259.9,508.1M2259.9,502.9L2254.7000000000003,508.1M2290.5,502.9L2295.7,508.1M2295.7,502.9L2290.5,508.1M2171.0,524.1L2176.2,529.3000000000001M2176.2,524.1L2171.0,529.3000000000001M2218.5,531.6L2223.7,536.8000000000001M2223.7,531.6L2218.5,536.8000000000001M2229.3,543.4L2234.5,548.6M2234.5,543.4L2229.3,548.6M2137.1,542.0L2142.2999999999997,547.2M2142.2999999999997,542.0L2137.1,547.2M2076.0,546.6999999999999L2081.2,551.9M2081.2,546.6999999999999L2076.0,551.9M2038.8000000000002,550.5L2044.0,555.7M2044.0,550.5L2038.8000000000002,555.7M2049.6,557.5L2054.7999999999997,562.7M2054.7999999999997,557.5L2049.6,562.7M2363.9,524.1L2369.1,529.3000000000001M2369.1,524.1L2363.9,529.3000000000001M2654.6,540.6L2659.7999999999997,545.8000000000001M2659.7999999999997,540.6L2654.6,545.8000000000001M2918.1,533.1L2923.2999999999997,538.3000000000001M2923.2999999999997,533.1L2918.1,538.3000000000001M2574.6,549.0L2579.7999999999997,554.2M2579.7999999999997,549.0L2574.6,554.2M2490.4,566.5L2495.6,571.7M2495.6,566.5L2490.4,571.7M2727.5,568.8L2732.7,574.0M2732.7,568.8L2727.5,574.0M2413.8,577.3L2419.0,582.5M2419.0,577.3L2413.8,582.5M2359.2000000000003,593.6999999999999L2364.4,598.9M2364.4,593.6999999999999L2359.2000000000003,598.9M2152.2000000000003,594.6999999999999L2157.4,599.9M2157.4,594.6999999999999L2152.2000000000003,599.9M2068.9,449.29999999999995L2074.1,454.5M2074.1,449.29999999999995L2068.9,454.5M2146.1,419.7L2151.2999999999997,424.90000000000003M2151.2999999999997,419.7L2146.1,424.90000000000003M2903.5,299.7L2908.7,304.90000000000003M2908.7,299.7L2903.5,304.90000000000003M2212.9,391.4L2218.1,396.6M2218.1,391.4L2212.9,396.6M2411.4,382.0L2416.6,387.20000000000005M2416.6,382.0L2411.4,387.20000000000005M2367.6,366.5L2372.7999999999997,371.70000000000005M2372.7999999999997,366.5L2367.6,371.70000000000005M2397.3,363.2L2402.5,368.40000000000003M2402.5,363.2L2397.3,368.40000000000003M2464.6,362.29999999999995L2469.7999999999997,367.5M2469.7999999999997,362.29999999999995L2464.6,367.5M2561.9,210.3L2567.1,215.5M2567.1,210.3L2561.9,215.5" stroke="#808080" stroke-width="1.6" fill="none"/>
<polyline points="2006,475.6 1957.9,493.8 1828.3,596.4 1697.4,695.6 1741.0,880.0" fill="none" stroke="#000080" stroke-width="2" stroke-linecap="butt" stroke-linejoin="round"/>
<polyline points="2050.0,674.4 1956.6,790.8 1903.7,880.0" fill="none" stroke="#000080" stroke-width="2" stroke-linecap="butt" stroke-linejoin="round"/>
<polyline points="2000,525.8 1934.1,535.6 1879.9,551.4 1858.7,565.2 1793.9,612.3 1763.5,652.0 1738.4,699.6 1722.5,749.8 1717.2,778.9 1713.2,831.9 1714.6,880.0" fill="none" stroke="#ff8000" stroke-width="4.5" stroke-dasharray="30 22" stroke-linecap="round" stroke-linejoin="round"/>
<polyline points="1497.6,551.4 1551.9,609.6 1587.6,637.9 1635.2,650.6 1722.5,662.5" fill="none" stroke="#ff8000" stroke-width="4.5" stroke-dasharray="30 22" stroke-linecap="round" stroke-linejoin="round"/>
<polyline points="2000,495 1960.6,501.2 1875.9,522.3 1831.0,543.5 1801.9,558.0 1784.7,569.9 1756.9,596.4 1741.0,622.9 1730.4,649.3 1714.6,696.9 1698.7,744.6 1689.4,784.2 1684.1,880.0" fill="none" stroke="#ff0000" stroke-width="2" stroke-dasharray="22 14" stroke-linecap="butt" stroke-linejoin="round"/>
<polyline points="1565.1,583.2 1574.3,607.0 1598.1,625.5 1632.5,634.8 1704.0,632.1 1742.3,608.3" fill="none" stroke="#ff0000" stroke-width="2" stroke-dasharray="22 14" stroke-linecap="butt" stroke-linejoin="round"/>
<polyline points="1517.5,617.6 1562.4,648.0 1680.2,681.1 1706.6,698.3" fill="none" stroke="#ff0000" stroke-width="2" stroke-dasharray="22 14" stroke-linecap="butt" stroke-linejoin="round"/>
<polyline points="2014,548 1947.4,559.4 1913.0,566.0 1870.6,584.5 1833.6,607.0 1804.5,636.1 1775.4,678.4 1754.2,734.0 1741.0,797.5 1734.4,880.0" fill="none" stroke="#ff0000" stroke-width="2" stroke-dasharray="22 14" stroke-linecap="butt" stroke-linejoin="round"/>
<polyline points="1566.4,682.4 1622.0,710.2 1668.3,730.0" fill="none" stroke="#008080" stroke-width="2.5" stroke-dasharray="14 12" stroke-linecap="butt" stroke-linejoin="round"/>
<polyline points="1679.6,740.6 1672.2,740.6 1653.7,850.4 1656.3,880.0" fill="none" stroke="#0000ff" stroke-width="2" stroke-linecap="butt" stroke-linejoin="round"/>
<polyline points="1675.4,744.6 1659.0,850.4 1660.3,880.0" fill="none" stroke="#0000ff" stroke-width="3" stroke-dasharray="7 8" stroke-linecap="butt" stroke-linejoin="round"/>
<line x1="1878.6" y1="382.6" x2="2010.6" y2="382.6" stroke="#000" stroke-width="2"/>
<circle cx="1922.6" cy="382.6" r="17" fill="#fff" stroke="#000" stroke-width="2"/><path d="M1905.6,382.6 A17,17 0 0 0 1939.6,382.6 Z" fill="#000"/><line x1="1907.3" y1="385.5" x2="1937.9" y2="385.5" stroke="#777" stroke-width="0.7"/><line x1="1908.1" y1="388.4" x2="1937.1" y2="388.4" stroke="#777" stroke-width="0.7"/><line x1="1909.5" y1="391.3" x2="1935.7" y2="391.3" stroke="#777" stroke-width="0.7"/><line x1="1911.7" y1="394.2" x2="1933.5" y2="394.2" stroke="#777" stroke-width="0.7"/><line x1="1915.2" y1="397.1" x2="1930.0" y2="397.1" stroke="#777" stroke-width="0.7"/>
<text x="1900.1" y="379.0" font-size="17.5" fill="#000" text-anchor="end">40</text>
<text x="1945.6" y="379.0" font-size="17.5" fill="#000" text-anchor="start">+14.0</text>
<line x1="1922.6" y1="399.6" x2="1922.6" y2="417.6" stroke="#000" stroke-width="2"/>
<line x1="1908.8999999999999" y1="417.6" x2="1936.3" y2="417.6" stroke="#000" stroke-width="2"/>
<text x="1895.8" y="433.90000000000003" font-size="17.5" fill="#000" text-anchor="end">8.00</text>
<text x="1949.8999999999999" y="433.90000000000003" font-size="17.5" fill="#000" text-anchor="start">+6.04</text>
<path d="M1941.4,353.29999999999995L1946.6,358.5M1946.6,353.29999999999995L1941.4,358.5M1944.4,436.2L1949.6,441.40000000000003M1949.6,436.2L1944.4,441.40000000000003M1805.4,473.9L1810.6,479.1M1810.6,473.9L1805.4,479.1M1848.1000000000001,466.4L1853.3,471.6M1853.3,466.4L1848.1000000000001,471.6M1886.2,366.29999999999995L1891.3999999999999,371.5M1891.3999999999999,366.29999999999995L1886.2,371.5" stroke="#808080" stroke-width="1.6" fill="none"/>
<line x1="1736.7" y1="542.2" x2="1868.7" y2="542.2" stroke="#000" stroke-width="2"/>
<circle cx="1780.7" cy="542.2" r="17" fill="#fff" stroke="#000" stroke-width="2"/>
<text x="1758.2" y="538.6" font-size="17.5" fill="#000" text-anchor="end">67</text>
<text x="1803.7" y="538.6" font-size="17.5" fill="#000" text-anchor="start">+11.3</text>
<line x1="1780.7" y1="559.2" x2="1780.7" y2="577.2" stroke="#000" stroke-width="2"/>
<line x1="1767.0" y1="577.2" x2="1794.4" y2="577.2" stroke="#000" stroke-width="2"/>
<path d="M1766.7,595.2 H1777.2 L1774.2,577.7 H1770.7 Z" fill="#000"/><path d="M1793.7,577.7 L1785.7,595.2 M1789.9,586.7 L1793.4,595.2" stroke="#000" stroke-width="1.8" fill="none"/>
<text x="1753.9" y="593.5" font-size="17.5" fill="#000" text-anchor="end">9.40</text>
<text x="1808.0" y="593.5" font-size="17.5" fill="#000" text-anchor="start">+1.90</text>
<line x1="1566.1" y1="778.9" x2="1698.1" y2="778.9" stroke="#000" stroke-width="2"/>
<circle cx="1610.1" cy="778.9" r="17" fill="#fff" stroke="#000" stroke-width="2"/>
<text x="1587.6" y="775.3" font-size="17.5" fill="#000" text-anchor="end">12</text>
<text x="1633.1" y="775.3" font-size="17.5" fill="#000" text-anchor="start">+7.1</text>
<line x1="1610.1" y1="795.9" x2="1610.1" y2="813.9" stroke="#000" stroke-width="2"/>
<line x1="1596.3999999999999" y1="813.9" x2="1623.8" y2="813.9" stroke="#000" stroke-width="2"/>
<path d="M1596.1,831.9 H1606.6 L1603.6,814.4 H1600.1 Z" fill="#000"/><path d="M1623.1,814.4 L1615.1,831.9 M1619.3,823.4 L1622.8,831.9" stroke="#000" stroke-width="1.8" fill="none"/>
<text x="1583.3" y="830.1999999999999" font-size="17.5" fill="#000" text-anchor="end">1.70</text>
<text x="1637.3999999999999" y="830.1999999999999" font-size="17.5" fill="#000" text-anchor="start">+5.39</text>
<line x1="1812.9" y1="834.5" x2="1944.9" y2="834.5" stroke="#000" stroke-width="2"/>
<circle cx="1856.9" cy="834.5" r="17" fill="#fff" stroke="#000" stroke-width="2"/><path d="M1839.9,834.5 A17,17 0 0 0 1873.9,834.5 Z" fill="#000"/><line x1="1841.6" y1="837.4" x2="1872.2" y2="837.4" stroke="#777" stroke-width="0.7"/><line x1="1842.4" y1="840.3" x2="1871.4" y2="840.3" stroke="#777" stroke-width="0.7"/><line x1="1843.8" y1="843.2" x2="1870.0" y2="843.2" stroke="#777" stroke-width="0.7"/><line x1="1846.0" y1="846.1" x2="1867.8" y2="846.1" stroke="#777" stroke-width="0.7"/><line x1="1849.5" y1="849.0" x2="1864.3" y2="849.0" stroke="#777" stroke-width="0.7"/>
<text x="1834.4" y="830.9" font-size="17.5" fill="#000" text-anchor="end">49</text>
<text x="1879.9" y="830.9" font-size="17.5" fill="#000" text-anchor="start">+12.8</text>
<line x1="1856.9" y1="851.5" x2="1856.9" y2="869.5" stroke="#000" stroke-width="2"/>
<line x1="1843.2" y1="869.5" x2="1870.6000000000001" y2="869.5" stroke="#000" stroke-width="2"/>
<path d="M1842.9,887.5 H1853.4 L1850.4,870.0 H1846.9 Z" fill="#000"/><path d="M1869.9,870.0 L1861.9,887.5 M1866.1000000000001,879.0 L1869.6000000000001,887.5" stroke="#000" stroke-width="1.8" fill="none"/>
<text x="1830.1000000000001" y="885.8" font-size="17.5" fill="#000" text-anchor="end">4.98</text>
<text x="1884.2" y="885.8" font-size="17.5" fill="#000" text-anchor="start">+7.79</text>
<path d="M1743.7,508.59999999999997L1748.8999999999999,513.8M1748.8999999999999,508.59999999999997L1743.7,513.8M1684.7,542.5L1689.8999999999999,547.7M1689.8999999999999,542.5L1684.7,547.7M1794.0,529.8L1799.1999999999998,535.0M1799.1999999999998,529.8L1794.0,535.0M1740.5,564.1999999999999L1745.6999999999998,569.4M1745.6999999999998,564.1999999999999L1740.5,569.4M1688.7,572.6L1693.8999999999999,577.8000000000001M1693.8999999999999,572.6L1688.7,577.8000000000001M1649.3000000000002,579.3L1654.5,584.5M1654.5,579.3L1649.3000000000002,584.5M1690.8000000000002,592.5L1696.0,597.7M1696.0,592.5L1690.8000000000002,597.7M1701.4,595.1L1706.6,600.3000000000001M1706.6,595.1L1701.4,600.3000000000001M1718.6000000000001,595.6999999999999L1723.8,600.9M1723.8,595.6999999999999L1718.6000000000001,600.9M1714.6000000000001,607.8L1719.8,613.0M1719.8,607.8L1714.6000000000001,613.0M1617.5,603.1L1622.6999999999998,608.3000000000001M1622.6999999999998,603.1L1617.5,608.3000000000001M1486.3000000000002,620.5L1491.5,625.7M1491.5,620.5L1486.3000000000002,625.7M1667.5,626.3L1672.6999999999998,631.5M1672.6999999999998,626.3L1667.5,631.5M1963.3000000000002,558.4L1968.5,563.6M1968.5,558.4L1963.3000000000002,563.6M1979.7,566.6L1984.8999999999999,571.8000000000001M1984.8999999999999,566.6L1979.7,571.8000000000001M2038.7,550.6999999999999L2043.8999999999999,555.9M2043.8999999999999,550.6999999999999L2038.7,555.9M1876.0,583.6999999999999L1881.1999999999998,588.9M1881.1999999999998,583.6999999999999L1876.0,588.9M1907.7,583.1999999999999L1912.8999999999999,588.4M1912.8999999999999,583.1999999999999L1907.7,588.4M1864.6000000000001,604.4L1869.8,609.6M1869.8,604.4L1864.6000000000001,609.6M1827.0,620.8L1832.1999999999998,626.0M1832.1999999999998,620.8L1827.0,626.0M2001.6000000000001,624.8L2006.8,630.0M2006.8,624.8L2001.6000000000001,630.0M1927.6000000000001,641.4L1932.8,646.6M1932.8,641.4L1927.6000000000001,646.6M1823.1000000000001,646.6999999999999L1828.3,651.9M1828.3,646.6999999999999L1823.1000000000001,651.9M1779.9,693.8L1785.1,699.0M1785.1,693.8L1779.9,699.0M1864.1000000000001,702.8L1869.3,708.0M1869.3,702.8L1864.1000000000001,708.0M2022.8000000000002,697.0L2028.0,702.2M2028.0,697.0L2022.8000000000002,702.2M1940.0,714.6999999999999L1945.1999999999998,719.9M1945.1999999999998,714.6999999999999L1940.0,719.9M1572.5,725.3L1577.6999999999998,730.5M1577.6999999999998,725.3L1572.5,730.5M1759.6000000000001,749.9L1764.8,755.1M1764.8,749.9L1759.6000000000001,755.1M1858.2,749.4L1863.3999999999999,754.6M1863.3999999999999,749.4L1858.2,754.6M1947.4,768.9L1952.6,774.1M1952.6,768.9L1947.4,774.1M2014.9,777.1L2020.1,782.3000000000001M2020.1,777.1L2014.9,782.3000000000001M1486.6000000000001,784.3L1491.8,789.5M1491.8,784.3L1486.6000000000001,789.5M1850.0,792.1999999999999L1855.1999999999998,797.4M1855.1999999999998,792.1999999999999L1850.0,797.4M1918.8000000000002,798.8L1924.0,804.0M1924.0,798.8L1918.8000000000002,804.0M1745.5,829.3L1750.6999999999998,834.5M1750.6999999999998,829.3L1745.5,834.5M1807.2,828.6999999999999L1812.3999999999999,833.9M1812.3999999999999,828.6999999999999L1807.2,833.9M1590.3000000000002,828.6999999999999L1595.5,833.9M1595.5,828.6999999999999L1590.3000000000002,833.9M2004.3000000000002,830.0L2009.5,835.2M2009.5,830.0L2004.3000000000002,835.2M1845.5,865.0L1850.6999999999998,870.2M1850.6999999999998,865.0L1845.5,870.2" stroke="#808080" stroke-width="1.6" fill="none"/>
<polyline points="2127.3,580.0 2040.0,687.1" fill="none" stroke="#000080" stroke-width="2" stroke-linecap="butt" stroke-linejoin="round"/>
<path d="M2152.5,596.4L2157.7,601.6M2157.7,596.4L2152.5,601.6M2359.4,593.8L2364.6,599.0M2364.6,593.8L2359.4,599.0M2413.9,578.1999999999999L2419.1,583.4M2419.1,578.1999999999999L2413.9,583.4M2612.0,608.6L2617.2,613.8000000000001M2617.2,608.6L2612.0,613.8000000000001M2249.0,620.5L2254.2,625.7M2254.2,620.5L2249.0,625.7M2485.3,637.6999999999999L2490.5,642.9M2490.5,637.6999999999999L2485.3,642.9M2078.9,641.4L2084.1,646.6M2084.1,641.4L2078.9,646.6M2414.9,678.5L2420.1,683.7M2420.1,678.5L2414.9,683.7M2569.1,676.1L2574.2999999999997,681.3000000000001M2574.2999999999997,676.1L2569.1,681.3000000000001M2620.7000000000003,695.9L2625.9,701.1M2625.9,695.9L2620.7000000000003,701.1M2165.2000000000003,688.5L2170.4,693.7M2170.4,688.5L2165.2000000000003,693.7M2233.4,691.6999999999999L2238.6,696.9M2238.6,691.6999999999999L2233.4,696.9M2349.0,701.1999999999999L2354.2,706.4M2354.2,701.1999999999999L2349.0,706.4M2102.2000000000003,732.6999999999999L2107.4,737.9M2107.4,732.6999999999999L2102.2000000000003,737.9M2208.0,754.1L2213.2,759.3000000000001M2213.2,754.1L2208.0,759.3000000000001M2237.4,750.6999999999999L2242.6,755.9M2242.6,750.6999999999999L2237.4,755.9M2518.9,741.4L2524.1,746.6M2524.1,741.4L2518.9,746.6M2569.9,761.0L2575.1,766.2M2575.1,761.0L2569.9,766.2M2290.0,772.9L2295.2,778.1M2295.2,772.9L2290.0,778.1M2635.3,786.4L2640.5,791.6M2640.5,786.4L2635.3,791.6M2131.3,810.1999999999999L2136.5,815.4M2136.5,810.1999999999999L2131.3,815.4M2299.3,808.4L2304.5,813.6M2304.5,808.4L2299.3,813.6M2405.9,815.8L2411.1,821.0M2411.1,815.8L2405.9,821.0M2062.8,839.3L2068.0,844.5M2068.0,839.3L2062.8,844.5M2193.5,865.1999999999999L2198.7,870.4M2198.7,865.1999999999999L2193.5,870.4M2608.0,859.9L2613.2,865.1M2613.2,859.9L2608.0,865.1M2460.7000000000003,869.6999999999999L2465.9,874.9M2465.9,869.6999999999999L2460.7000000000003,874.9M2519.4,892.6999999999999L2524.6,897.9M2524.6,892.6999999999999L2519.4,897.9M2135.8,898.0L2141.0,903.2M2141.0,898.0L2135.8,903.2M2309.9,913.4L2315.1,918.6M2315.1,913.4L2309.9,918.6M2317.0,916.0L2322.2,921.2M2322.2,916.0L2317.0,921.2M2382.6,942.0L2387.7999999999997,947.2M2387.7999999999997,942.0L2382.6,947.2M2412.3,953.1L2417.5,958.3000000000001M2417.5,953.1L2412.3,958.3000000000001M2063.9,937.1999999999999L2069.1,942.4M2069.1,937.1999999999999L2063.9,942.4M2138.7000000000003,945.1L2143.9,950.3000000000001M2143.9,945.1L2138.7000000000003,950.3000000000001M2572.3,930.0L2577.5,935.2M2577.5,930.0L2572.3,935.2" stroke="#808080" stroke-width="1.6" fill="none"/>
<text x="2056" y="978.7" font-size="36.5" fill="#000" text-anchor="start" font-style="italic" textLength="237" lengthAdjust="spacingAndGlyphs">Mjölnarbacken</text>
<rect x="2657" y="702" width="390" height="32" fill="#f9fafd"/>
<text x="2699" y="727" font-size="20" fill="#000" text-anchor="start" fill-opacity="0.04">Ikkunaleike</text>
<line x1="2455" y1="774.4" x2="2587" y2="774.4" stroke="#000" stroke-width="2"/>
<circle cx="2499" cy="774.4" r="17" fill="#fff" stroke="#000" stroke-width="2"/><line x1="2499" y1="757.4" x2="2499" y2="739.4" stroke="#000" stroke-width="2"/><circle cx="2499" cy="730.8" r="9" fill="#000"/>
<text x="2476.5" y="770.8" font-size="17.5" fill="#000" text-anchor="end">218</text>
<text x="2522" y="770.8" font-size="17.5" fill="#000" text-anchor="start">+19.1</text>
<line x1="2718.5" y1="782.1" x2="2850.5" y2="782.1" stroke="#000" stroke-width="2"/>
<circle cx="2762" cy="782.1" r="17" fill="#fff" stroke="#000" stroke-width="2"/><line x1="2762" y1="765.1" x2="2762" y2="747.1" stroke="#000" stroke-width="2"/><circle cx="2762" cy="738.5" r="8.5" fill="#fff" stroke="#000" stroke-width="2"/>
<text x="2739.5" y="778.5" font-size="17.5" fill="#000" text-anchor="end">219</text>
<text x="2785" y="778.5" font-size="17.5" fill="#000" text-anchor="start">+22.8</text>
<line x1="2762" y1="799.1" x2="2762" y2="817.1" stroke="#000" stroke-width="2"/>
<line x1="2572.1" y1="832.1" x2="2704.1" y2="832.1" stroke="#000" stroke-width="2"/>
<circle cx="2616.1" cy="832.1" r="17" fill="#fff" stroke="#000" stroke-width="2"/><path d="M2599.1,832.1 H2633.1" stroke="#000" stroke-width="1.8"/>
<text x="2593.6" y="828.5" font-size="17.5" fill="#000" text-anchor="end">217</text>
<text x="2639.1" y="828.5" font-size="17.5" fill="#000" text-anchor="start">+21.2</text>
<line x1="2656.2" y1="883.4" x2="2788.2" y2="883.4" stroke="#000" stroke-width="2"/>
<circle cx="2700.2" cy="883.4" r="17" fill="#fff" stroke="#000" stroke-width="2"/>
<text x="2677.7" y="879.8" font-size="17.5" fill="#000" text-anchor="end">216</text>
<text x="2723.2" y="879.8" font-size="17.5" fill="#000" text-anchor="start">+22.5</text>
<line x1="2700.2" y1="900.4" x2="2700.2" y2="918.4" stroke="#000" stroke-width="2"/>
<line x1="2686.5" y1="918.4" x2="2713.8999999999996" y2="918.4" stroke="#000" stroke-width="2"/>
<path d="M2686.2,936.4 H2696.7 L2693.7,918.9 H2690.2 Z" fill="#000"/><path d="M2713.2,918.9 L2705.2,936.4 M2709.3999999999996,927.9 L2712.8999999999996,936.4" stroke="#000" stroke-width="1.8" fill="none"/>
<text x="2673.3999999999996" y="934.6999999999999" font-size="17.5" fill="#000" text-anchor="end">19.10</text>
<text x="2727.5" y="934.6999999999999" font-size="17.5" fill="#000" text-anchor="start">+3.42</text>
<line x1="2401.6" y1="875" x2="2533.6" y2="875" stroke="#000" stroke-width="2"/>
<circle cx="2445.6" cy="875" r="17" fill="#fff" stroke="#000" stroke-width="2"/><line x1="2456.9137084989848" y1="886.3137084989847" x2="2466.1060966544096" y2="895.5060966544099" stroke="#000" stroke-width="1.8"/><line x1="2434.286291501015" y1="886.3137084989847" x2="2425.09390334559" y2="895.5060966544099" stroke="#000" stroke-width="1.8"/><line x1="2434.286291501015" y1="863.6862915010153" x2="2425.09390334559" y2="854.4939033455901" stroke="#000" stroke-width="1.8"/><line x1="2456.9137084989848" y1="863.6862915010153" x2="2466.1060966544096" y2="854.4939033455901" stroke="#000" stroke-width="1.8"/>
<text x="2423.1" y="871.4" font-size="17.5" fill="#000" text-anchor="end">215</text>
<text x="2468.6" y="871.4" font-size="17.5" fill="#000" text-anchor="start">+19.0</text>
<line x1="2445.6" y1="892" x2="2445.6" y2="910" stroke="#000" stroke-width="2"/>
<text x="2418.7999999999997" y="926.3" font-size="17.5" fill="#000" text-anchor="end">22.00</text>
<text x="2472.9" y="926.3" font-size="17.5" fill="#000" text-anchor="start">-3.03</text>
<line x1="2506.5" y1="933.4" x2="2636.6" y2="933.4" stroke="#000" stroke-width="2"/>
<path d="M2530.6,922.4 H2571.4 L2551,957.0 Z" fill="#fff" stroke="#000" stroke-width="2"/><circle cx="2551" cy="933.4" r="11" fill="#fff" stroke="#000" stroke-width="2"/>
<text x="2528.5" y="930" font-size="17.5" fill="#000" text-anchor="end">214</text>
<text x="2573.4" y="930" font-size="17.5" fill="#000" text-anchor="start">+20.9</text>
<line x1="2551" y1="957" x2="2551" y2="968" stroke="#000" stroke-width="2"/>
<line x1="2537.3" y1="968" x2="2564.7" y2="968" stroke="#000" stroke-width="2"/>
<path d="M2546,968.5 L2538,986 M2542.2,977.5 L2545.7,986" stroke="#000" stroke-width="1.8" fill="none"/>
<path d="M2564,968.5 L2556,986 M2560.2,977.5 L2563.7,986" stroke="#000" stroke-width="1.8" fill="none"/>
<text x="2524.5" y="958.5" font-size="17.5" fill="#000" text-anchor="end">15.60 Ka</text>
<text x="2577.5" y="958.5" font-size="17.5" fill="#000" text-anchor="start">+5.28 Ka</text>
<text x="2524.5" y="984" font-size="17.5" fill="#000" text-anchor="end">19.90</text>
<line x1="2351.9" y1="972.2" x2="2483.3" y2="972.2" stroke="#000" stroke-width="2"/>
<circle cx="2396.3" cy="972.2" r="17" fill="#fff" stroke="#000" stroke-width="2"/><circle cx="2396.3" cy="972.2" r="17" fill="#000"/><path d="M2396.3,972.2 L2380.2,966.7 A17,17 0 0 0 2380.2,977.7 Z M2396.3,972.2 L2412.4,966.7 A17,17 0 0 1 2412.4,977.7 Z" fill="#fff"/><circle cx="2396.3" cy="972.2" r="17" fill="none" stroke="#000" stroke-width="2"/>
<text x="2373.8" y="968.6" font-size="17.5" fill="#000" text-anchor="end">212</text>
<text x="2419.3" y="968.6" font-size="17.5" fill="#000" text-anchor="start">+18.7</text>
<line x1="2396.3" y1="989.2" x2="2396.3" y2="1007.2" stroke="#000" stroke-width="2"/>
<line x1="2382.6000000000004" y1="1007.2" x2="2410.0" y2="1007.2" stroke="#000" stroke-width="2"/>
<text x="2369.2" y="997" font-size="17.5" fill="#000" text-anchor="end">17.55 Ka</text>
<text x="2423" y="997" font-size="17.5" fill="#000" text-anchor="start">+1.18 Ka</text>
<path d="M2392,1007.3 L2384,1024.8 M2388.2,1016.3 L2391.7,1024.8" stroke="#000" stroke-width="1.8" fill="none"/>
<path d="M2408,1007.3 L2400,1024.8 M2404.2,1016.3 L2407.7,1024.8" stroke="#000" stroke-width="1.8" fill="none"/>
<text x="2388.6" y="1023.6" font-size="17.5" fill="#000" text-anchor="end">20.00</text>
<text x="2404" y="1023.6" font-size="17.5" fill="#000" text-anchor="start">-1.27</text>
<line x1="2429.6" y1="1023.7" x2="2564.0" y2="1023.7" stroke="#000" stroke-width="2"/>
<circle cx="2476.6" cy="1023.7" r="17" fill="#fff" stroke="#000" stroke-width="2"/><path d="M2459.6,1023.7 H2493.6 M2476.6,1006.7 V1040.7" stroke="#000" stroke-width="1.8"/>
<text x="2454.1" y="1020.1" font-size="17.5" fill="#000" text-anchor="end">211</text>
<text x="2499.6" y="1020.1" font-size="17.5" fill="#000" text-anchor="start">+19.9</text>
<line x1="2476.6" y1="1040.7" x2="2476.6" y2="1058.7" stroke="#000" stroke-width="2"/>
<line x1="2462.9" y1="1058.7" x2="2490.2999999999997" y2="1058.7" stroke="#000" stroke-width="2"/>
<text x="2449.7999999999997" y="1075.0" font-size="17.5" fill="#000" text-anchor="end">18.35</text>
<text x="2503.9" y="1075.0" font-size="17.5" fill="#000" text-anchor="start">+1.52</text>
<path d="M2466.6,1076.4 H2477.1 L2474.1,1058.9 H2470.6 Z" fill="#000"/>
<line x1="2590.7" y1="989" x2="2723" y2="989" stroke="#000" stroke-width="2"/>
<circle cx="2635" cy="989" r="17" fill="#000" stroke="#000" stroke-width="2"/>
<path d="M2623,984 L2635,989 L2623,994 Z M2647,984 L2635,989 L2647,994 Z" fill="#fff"/>
<text x="2583.6" y="984" font-size="17.5" fill="#000" text-anchor="start" font-weight="bold">213</text>
<text x="2577.5" y="984" font-size="17.5" fill="#000" text-anchor="start">+2.38</text>
<text x="2658" y="984" font-size="17.5" fill="#000" text-anchor="start" font-weight="bold">+21.3</text>
<line x1="2635" y1="1006" x2="2635" y2="1023.7" stroke="#000" stroke-width="2"/>
<line x1="2621.3" y1="1023.7" x2="2648.7" y2="1023.7" stroke="#000" stroke-width="2"/>
<path d="M2645,1024.2 L2637,1041.7 M2641.2,1033.2 L2644.7,1041.7" stroke="#000" stroke-width="1.8" fill="none"/>
<text x="2608" y="1013.5" font-size="17.5" fill="#000" text-anchor="end">18.30 Ka</text>
<text x="2662" y="1013.5" font-size="17.5" fill="#000" text-anchor="start">+2.97 Ka</text>
<text x="2568" y="1039" font-size="17.5" fill="#000" text-anchor="end">17.30</text>
<text x="2576" y="1039" font-size="17.5" fill="#000" text-anchor="start">+1.20</text>
<text x="2646" y="1039" font-size="17.5" fill="#000" text-anchor="start">-0.03</text>
<text x="2666" y="1039" font-size="17.5" fill="#000" text-anchor="start">+0.63</text>
<line x1="2512" y1="1045.5" x2="2643.7" y2="1045.5" stroke="#000" stroke-width="2"/>
<circle cx="2556" cy="1045.5" r="17" fill="#fff" stroke="#000" stroke-width="2"/><path d="M2539,1045.5 A17,17 0 0 0 2573,1045.5 Z" fill="#000"/><line x1="2540.7" y1="1048.4" x2="2571.3" y2="1048.4" stroke="#777" stroke-width="0.7"/><line x1="2541.5" y1="1051.3" x2="2570.5" y2="1051.3" stroke="#777" stroke-width="0.7"/><line x1="2542.9" y1="1054.2" x2="2569.1" y2="1054.2" stroke="#777" stroke-width="0.7"/><line x1="2545.1" y1="1057.1" x2="2566.9" y2="1057.1" stroke="#777" stroke-width="0.7"/><line x1="2548.6" y1="1060.0" x2="2563.4" y2="1060.0" stroke="#777" stroke-width="0.7"/>
<text x="2533.5" y="1041.9" font-size="17.5" fill="#000" text-anchor="end">210</text>
<line x1="2556" y1="1062.5" x2="2556" y2="1080.5" stroke="#000" stroke-width="2"/>
<line x1="2542.3" y1="1080.5" x2="2569.7" y2="1080.5" stroke="#000" stroke-width="2"/>
<path d="M2542,1098.5 H2552.5 L2549.5,1081.0 H2546 Z" fill="#000"/><path d="M2569,1081.0 L2561,1098.5 M2565.2,1090.0 L2568.7,1098.5" stroke="#000" stroke-width="1.8" fill="none"/>
<text x="2529.2" y="1096.8" font-size="17.5" fill="#000" text-anchor="end">20.15</text>
<text x="2583.3" y="1096.8" font-size="17.5" fill="#000" text-anchor="start">-0.01</text>
<line x1="2227.0" y1="1053.5" x2="2359.6" y2="1053.5" stroke="#000" stroke-width="2"/>
<circle cx="2271.4" cy="1053.5" r="17" fill="#fff" stroke="#000" stroke-width="2"/><circle cx="2271.4" cy="1053.5" r="11.5" fill="#fff" stroke="#000" stroke-width="2"/>
<text x="2248.9" y="1049.9" font-size="17.5" fill="#000" text-anchor="end">209</text>
<text x="2294.4" y="1049.9" font-size="17.5" fill="#000" text-anchor="start">+16.3</text>
<line x1="2271.4" y1="1070.5" x2="2271.4" y2="1088.5" stroke="#000" stroke-width="2"/>
<text x="2245" y="1104" font-size="17.5" fill="#000" text-anchor="end">1.00</text>
<line x1="2313" y1="1091.9" x2="2445.6" y2="1091.9" stroke="#000" stroke-width="2"/>
<circle cx="2358" cy="1091.9" r="17" fill="#fff" stroke="#000" stroke-width="2"/><circle cx="2358" cy="1091.9" r="11.5" fill="#fff" stroke="#000" stroke-width="2"/>
<text x="2335.5" y="1088.3000000000002" font-size="17.5" fill="#000" text-anchor="end">208</text>
<text x="2381" y="1088.3000000000002" font-size="17.5" fill="#000" text-anchor="start">+18.1</text>
<line x1="2358" y1="1108.9" x2="2358" y2="1126.9" stroke="#000" stroke-width="2"/>
<text x="2298.9" y="1104" font-size="17.5" fill="#000" text-anchor="start">+15.29</text>
<text x="2331.5" y="1143.8" font-size="17.5" fill="#000" text-anchor="end">20.20</text>
<line x1="2156.0" y1="1126.5" x2="2288.7" y2="1126.5" stroke="#000" stroke-width="2"/>
<circle cx="2200.6" cy="1126.5" r="17" fill="#fff" stroke="#000" stroke-width="2"/><circle cx="2200.6" cy="1126.5" r="17" fill="#000"/><path d="M2200.6,1126.5 L2184.5,1121.0 A17,17 0 0 0 2184.5,1132.0 Z M2200.6,1126.5 L2216.7,1121.0 A17,17 0 0 1 2216.7,1132.0 Z" fill="#fff"/><circle cx="2200.6" cy="1126.5" r="17" fill="none" stroke="#000" stroke-width="2"/>
<text x="2178.1" y="1122.9" font-size="17.5" fill="#000" text-anchor="end">206</text>
<text x="2223.6" y="1122.9" font-size="17.5" fill="#000" text-anchor="start">+14.6</text>
<text x="2173.5" y="1151" font-size="17.5" fill="#000" text-anchor="end">12.60 Ka</text>
<text x="2227.5" y="1151" font-size="17.5" fill="#000" text-anchor="start">+1.98 Ka</text>
<text x="2201" y="1177.5" font-size="17.5" fill="#000" text-anchor="end">12.60</text>
<text x="2212.2" y="1177.5" font-size="17.5" fill="#000" text-anchor="start">+1.98</text>
<line x1="2369" y1="1155.7" x2="2500.7" y2="1155.7" stroke="#000" stroke-width="2"/>
<circle cx="2413" cy="1155.7" r="17" fill="#000" stroke="#000" stroke-width="2"/><path d="M2396,1155.7 A17,17 0 0 1 2430,1155.7 Z" fill="#fff"/><circle cx="2413" cy="1155.7" r="17" fill="none" stroke="#000" stroke-width="2"/><circle cx="2413" cy="1155.7" r="12" fill="#fff" stroke="#000" stroke-width="2"/>
<text x="2390.5" y="1152.1000000000001" font-size="17.5" fill="#000" text-anchor="end">207</text>
<text x="2436" y="1152.1000000000001" font-size="17.5" fill="#000" text-anchor="start">+19.0</text>
<line x1="2413" y1="1172.7" x2="2413" y2="1190.7" stroke="#000" stroke-width="2"/>
<text x="2386.2" y="1207.0" font-size="17.5" fill="#000" text-anchor="end">18.90</text>
<text x="2440.3" y="1207.0" font-size="17.5" fill="#000" text-anchor="start">+0.07</text>
<text x="2410" y="1143.8" font-size="17.5" fill="#000" text-anchor="middle">2.10</text>
<line x1="2180" y1="1214.8" x2="2321" y2="1214.8" stroke="#000" stroke-width="2"/>
<rect x="2215.1" y="1197.3" width="35.0" height="35.0" fill="#fff" stroke="#000" stroke-width="2"/>
<text x="2206" y="1210" font-size="17.5" fill="#000" text-anchor="end">205</text>
<text x="2255.7" y="1210" font-size="17.5" fill="#000" text-anchor="start">+13.7</text>
<line x1="2232.6" y1="1232.3" x2="2232.6" y2="1250.8" stroke="#000" stroke-width="2"/>
<text x="2206" y="1266.7" font-size="17.5" fill="#000" text-anchor="end">21.70</text>
<line x1="2243.6" y1="1254" x2="2384" y2="1254" stroke="#000" stroke-width="2"/>
<text x="2259" y="1265.6" font-size="17.5" fill="#000" text-anchor="start">-8.00</text>
<path d="M2275,1265.6 L2296,1229.6 L2317,1265.6 Z" fill="#000"/><circle cx="2296" cy="1254" r="10.6" fill="#fff" stroke="#000" stroke-width="1.5"/>
<text x="2273.9" y="1249.7" font-size="17.5" fill="#000" text-anchor="end">204</text>
<text x="2319" y="1249.7" font-size="17.5" fill="#000" text-anchor="start">+12.9</text>
<line x1="2079.8" y1="1314.3" x2="2211" y2="1314.3" stroke="#000" stroke-width="2"/>
<path d="M2103.2,1303.3 H2144.0 L2123.6,1337.8999999999999 Z" fill="#fff" stroke="#000" stroke-width="2"/><circle cx="2123.6" cy="1314.3" r="11" fill="#fff" stroke="#000" stroke-width="2"/><path d="M2123.6,1314.3 L2123.6,1303.3 A11,11 0 0 0 2112.6,1314.3 Z" fill="#000"/>
<text x="2101" y="1309.6" font-size="17.5" fill="#000" text-anchor="end">203</text>
<text x="2145.8" y="1309.6" font-size="17.5" fill="#000" text-anchor="start">+10.5</text>
<line x1="2123.6" y1="1336.5" x2="2123.6" y2="1349" stroke="#000" stroke-width="2"/>
<line x1="2109.9" y1="1349" x2="2137.2999999999997" y2="1349" stroke="#000" stroke-width="2"/>
<path d="M2109.6,1368 H2120.1 L2117.1,1350.5 H2113.6 Z" fill="#000"/>
<path d="M2136.6,1349.5 L2128.6,1367 M2132.7999999999997,1358.5 L2136.2999999999997,1367" stroke="#000" stroke-width="1.8" fill="none"/>
<text x="2096.7" y="1364.7" font-size="17.5" fill="#000" text-anchor="end">18.16</text>
<text x="2150" y="1364.7" font-size="17.5" fill="#000" text-anchor="start">-7.64</text>
<line x1="2156.4" y1="1356.6" x2="2299.0" y2="1356.6" stroke="#000" stroke-width="2"/>
<circle cx="2211.4" cy="1356.6" r="17" fill="#fff" stroke="#000" stroke-width="2"/><path d="M2211.4,1356.6 L2211.4,1339.6 A17,17 0 0 0 2194.4,1356.6 Z" fill="#000"/>
<text x="2188.9" y="1353.0" font-size="17.5" fill="#000" text-anchor="end">202</text>
<text x="2234.4" y="1353.0" font-size="17.5" fill="#000" text-anchor="start">+10.4</text>
<line x1="2211.4" y1="1373.6" x2="2211.4" y2="1391.6" stroke="#000" stroke-width="2"/>
<line x1="2197.7000000000003" y1="1391.6" x2="2225.1" y2="1391.6" stroke="#000" stroke-width="2"/>
<text x="2184.6" y="1407.8999999999999" font-size="17.5" fill="#000" text-anchor="end">20.10</text>
<text x="2238.7000000000003" y="1407.8999999999999" font-size="17.5" fill="#000" text-anchor="start">-9.70</text>
<line x1="2124.7" y1="1438.5" x2="2256.3" y2="1438.5" stroke="#000" stroke-width="2"/>
<path d="M2148.4,1427.5 H2188.1 L2168,1461.4 Z" fill="#fff" stroke="#000" stroke-width="2"/>
<text x="2144.8" y="1434.5" font-size="17.5" fill="#000" text-anchor="end">201</text>
<text x="2190.7" y="1434.5" font-size="17.5" fill="#000" text-anchor="start">+9.3</text>
<line x1="2168" y1="1461.4" x2="2168" y2="1474" stroke="#000" stroke-width="2"/>
<text x="2141" y="1489" font-size="17.5" fill="#000" text-anchor="end">20.00</text>
<text x="2195.6" y="1489" font-size="17.5" fill="#000" text-anchor="start">-10.74</text>
<path d="M2063.9,938.4L2069.1,943.6M2069.1,938.4L2063.9,943.6M2138.7000000000003,945.1L2143.9,950.3000000000001M2143.9,945.1L2138.7000000000003,950.3000000000001M2052.3,984.6999999999999L2057.5,989.9M2057.5,984.6999999999999L2052.3,989.9M2135.9,1014.9L2141.1,1020.1M2141.1,1014.9L2135.9,1020.1M2091.6,1024.6000000000001L2096.7999999999997,1029.8M2096.7999999999997,1024.6000000000001L2091.6,1029.8M2270.2000000000003,1015.9L2275.4,1021.1M2275.4,1015.9L2270.2000000000003,1021.1M2118.9,1059.1000000000001L2124.1,1064.3M2124.1,1059.1000000000001L2118.9,1064.3M2245.7000000000003,1057.3000000000002L2250.9,1062.5M2250.9,1057.3000000000002L2245.7000000000003,1062.5M2310.9,998.1L2316.1,1003.3000000000001M2316.1,998.1L2310.9,1003.3000000000001M2383.3,941.5L2388.5,946.7M2388.5,941.5L2383.3,946.7M2412.5,952.6999999999999L2417.7,957.9M2417.7,952.6999999999999L2412.5,957.9M2369.2000000000003,1020.6L2374.4,1025.8M2374.4,1020.6L2369.2000000000003,1025.8M2428.1,1043.0L2433.2999999999997,1048.1999999999998M2433.2999999999997,1043.0L2428.1,1048.1999999999998M2372.9,1055.2L2378.1,1060.3999999999999M2378.1,1055.2L2372.9,1060.3999999999999M2326.8,1088.2L2332.0,1093.3999999999999M2332.0,1088.2L2326.8,1093.3999999999999M2342.5,1094.4L2347.7,1099.6M2347.7,1094.4L2342.5,1099.6M2370.9,1105.2L2376.1,1110.3999999999999M2376.1,1105.2L2370.9,1110.3999999999999M2444.0,1133.5L2449.2,1138.6999999999998M2449.2,1133.5L2444.0,1138.6999999999998M2298.5,1161.6000000000001L2303.7,1166.8M2303.7,1161.6000000000001L2298.5,1166.8M2313.0,1167.3000000000002L2318.2,1172.5M2318.2,1167.3000000000002L2313.0,1172.5M2342.5,1178.5L2347.7,1183.6999999999998M2347.7,1178.5L2342.5,1183.6999999999998M2357.0,1184.0L2362.2,1189.1999999999998M2362.2,1184.0L2357.0,1189.1999999999998M2386.8,1195.9L2392.0,1201.1M2392.0,1195.9L2386.8,1201.1M2058.8,1168.7L2064.0,1173.8999999999999M2064.0,1168.7L2058.8,1173.8999999999999M2486.8,1065.4L2492.0,1070.6M2492.0,1065.4L2486.8,1070.6M2484.8,980.1999999999999L2490.0,985.4M2490.0,980.1999999999999L2484.8,985.4M2038.4,1038.7L2043.6,1043.8999999999999M2043.6,1038.7L2038.4,1043.8999999999999M2177.4,1235.4L2182.6,1240.6M2182.6,1235.4L2177.4,1240.6" stroke="#808080" stroke-width="1.6" fill="none"/>
<path d="M2177.7000000000003,1236.1000000000001L2182.9,1241.3M2182.9,1236.1000000000001L2177.7000000000003,1241.3M2310.8,1284.6000000000001L2316.0,1289.8M2316.0,1284.6000000000001L2310.8,1289.8M2180.7000000000003,1320.8000000000002L2185.9,1326.0M2185.9,1320.8000000000002L2180.7000000000003,1326.0M2109.4,1378.8000000000002L2114.6,1384.0M2114.6,1378.8000000000002L2109.4,1384.0M2198.2000000000003,1410.7L2203.4,1415.8999999999999M2203.4,1410.7L2198.2000000000003,1415.8999999999999M2141.7000000000003,1473.6000000000001L2146.9,1478.8M2146.9,1473.6000000000001L2141.7000000000003,1478.8" stroke="#808080" stroke-width="1.6" fill="none"/>
<path d="M2620.6,697.4L2625.7999999999997,702.6M2625.7999999999997,697.4L2620.6,702.6M2846.9,699.1999999999999L2852.1,704.4M2852.1,699.1999999999999L2846.9,704.4M2868.5,707.3L2873.7,712.5M2873.7,707.3L2868.5,712.5M2671.9,715.6999999999999L2677.1,720.9M2677.1,715.6999999999999L2671.9,720.9M2715.9,732.6L2721.1,737.8000000000001M2721.1,732.6L2715.9,737.8000000000001M2570.6,760.8L2575.7999999999997,766.0M2575.7999999999997,760.8L2570.6,766.0M2636.2000000000003,786.1L2641.4,791.3000000000001M2641.4,786.1L2636.2000000000003,791.3000000000001M2680.2000000000003,803.1L2685.4,808.3000000000001M2685.4,803.1L2680.2000000000003,808.3000000000001M2753.8,831.1999999999999L2759.0,836.4M2759.0,831.1999999999999L2753.8,836.4M2608.0,859.6L2613.2,864.8000000000001M2613.2,859.6L2608.0,864.8000000000001M2652.1,876.8L2657.2999999999997,882.0M2657.2999999999997,876.8L2652.1,882.0M2725.4,904.8L2730.6,910.0M2730.6,904.8L2725.4,910.0M2572.8,930.3L2578.0,935.5M2578.0,930.3L2572.8,935.5M2804.0,766.1L2809.2,771.3000000000001M2809.2,766.1L2804.0,771.3000000000001" stroke="#808080" stroke-width="1.6" fill="none"/>
<path d="M2015.2,1222.2L2020.3999999999999,1227.3999999999999M2020.3999999999999,1222.2L2015.2,1227.3999999999999M2032.4,1267.2L2037.6,1272.3999999999999M2037.6,1267.2L2032.4,1272.3999999999999M2020.6000000000001,1346.4L2025.8,1351.6M2025.8,1346.4L2020.6000000000001,1351.6M2023.3000000000002,1431.1000000000001L2028.5,1436.3M2028.5,1431.1000000000001L2023.3000000000002,1436.3M1981.4,1499.2L1986.6,1504.3999999999999M1986.6,1499.2L1981.4,1504.3999999999999M2070.4,1531.3000000000002L2075.6,1536.5M2075.6,1531.3000000000002L2070.4,1536.5M2852.9,616.4L2858.1,621.6M2858.1,616.4L2852.9,621.6M2656.0,625.4L2661.2,630.6M2661.2,625.4L2656.0,630.6M2707.4,644.9L2712.6,650.1M2712.6,644.9L2707.4,650.1M2758.4,664.4L2763.6,669.6M2763.6,664.4L2758.4,669.6M2795.3,678.6L2800.5,683.8000000000001M2800.5,678.6L2795.3,683.8000000000001M2933.4,647.8L2938.6,653.0M2938.6,647.8L2933.4,653.0" stroke="#808080" stroke-width="1.6" fill="none"/>
<path d="M2519.4,893.1L2524.6,898.3000000000001M2524.6,893.1L2519.4,898.3000000000001M2725.7000000000003,904.5L2730.9,909.7M2730.9,904.5L2725.7000000000003,909.7M2383.3,941.6L2388.5,946.8000000000001M2388.5,941.6L2383.3,946.8000000000001M2412.4,952.8L2417.6,958.0M2417.6,952.8L2412.4,958.0M2572.8,930.0L2578.0,935.2M2578.0,930.0L2572.8,935.2M2660.9,964.0L2666.1,969.2M2666.1,964.0L2660.9,969.2M2486.2000000000003,980.9L2491.4,986.1M2491.4,980.9L2486.2000000000003,986.1M2559.2000000000003,1009.5L2564.4,1014.7M2564.4,1009.5L2559.2000000000003,1014.7M2369.0,1021.1L2374.2,1026.3M2374.2,1021.1L2369.0,1026.3M2428.1,1042.9L2433.2999999999997,1048.1M2433.2999999999997,1042.9L2428.1,1048.1M2373.1,1055.8000000000002L2378.2999999999997,1061.0M2378.2999999999997,1055.8000000000002L2373.1,1061.0M2487.2000000000003,1065.3000000000002L2492.4,1070.5M2492.4,1065.3000000000002L2487.2000000000003,1070.5M2632.3,1037.4L2637.5,1042.6M2637.5,1037.4L2632.3,1042.6" stroke="#808080" stroke-width="1.6" fill="none"/>
<polyline points="1653.8,860.0 1659.9,919.1 1674.1,990.5 1700.6,1076.1 1726.1,1160.0" fill="none" stroke="#0000ff" stroke-width="2" stroke-linecap="butt" stroke-linejoin="round"/>
<polyline points="1659.9,866.1 1666.0,921.1 1680.3,992.5 1704.7,1072.0 1728.2,1160.0" fill="none" stroke="#0000ff" stroke-width="3" stroke-dasharray="7 8" stroke-linecap="butt" stroke-linejoin="round"/>
<polyline points="1684.3,868.2 1696.6,980.3 1710.8,1029.2 1729.2,1094.4 1747.5,1160.0" fill="none" stroke="#ff0000" stroke-width="2" stroke-dasharray="22 14" stroke-linecap="butt" stroke-linejoin="round"/>
<polyline points="1713.9,860.0 1717.0,937.5 1729.2,988.4 1757.7,1098.5 1773.0,1149.4" fill="none" stroke="#ff8000" stroke-width="4.5" stroke-dasharray="30 22" stroke-linecap="round" stroke-linejoin="round"/>
<polyline points="1735.3,870.2 1743.4,937.5 1757.7,1002.7 1778.1,1092.4 1796.4,1160.0" fill="none" stroke="#ff0000" stroke-width="2" stroke-dasharray="22 14" stroke-linecap="butt" stroke-linejoin="round"/>
<polyline points="1737.3,860.0 1774.0,998.6 1789.3,1067.9 1801.5,1160.0" fill="none" stroke="#000080" stroke-width="2" stroke-linecap="butt" stroke-linejoin="round"/>
<polyline points="1914.7,860.0 1789.3,1067.9 1731.2,1160.0" fill="none" stroke="#000080" stroke-width="2" stroke-linecap="butt" stroke-linejoin="round"/>
<polyline points="1918.7,904.8 1945.2,890.6 1996,850.4 2005.6,855.7 2011.5,890.6 2026.8,925.2 2004.4,1006.8 2018.6,1060.8 2006.4,1091.4 1967.7,1112.8 1941.2,1108.7 1916.7,1073 1910.6,1006.8 1903.5,980.3 1904.5,957.8 1907.5,933.4 1918.7,904.8" fill="none" stroke="#ff0000" stroke-width="2.5" stroke-linecap="butt" stroke-linejoin="round"/>
<polyline points="1914.7,925.2 1926.9,930.3 1935.1,941.5 1941.2,949.7 1933.0,966.0 1930.0,986.4 1928.9,1047.5 1951.4,1082.2 1978.9,1067.9 1979.9,1023.1 1990.1,1002.7 2002.3,976.2 1996.2,955.8 1998.2,939.5 2010.5,923.2 1996.2,911.0 1996.2,890.6 2004.4,862.0" fill="none" stroke="#ff0000" stroke-width="2.5" stroke-dasharray="12 9" stroke-linecap="butt" stroke-linejoin="round"/>
<polyline points="1984.0,866.1 1971.7,884.5 1971.7,908.9 1981.9,927.3 1975.8,945.6 1962.6,964.0 1947.3,978.2 1953.4,957.8 1957.5,927.3 1953.4,906.9 1926.9,908.9 1918.7,957.8" fill="none" stroke="#ff0000" stroke-width="2.5" stroke-dasharray="12 9" stroke-linecap="butt" stroke-linejoin="round"/>
<line x1="1731.0" y1="979.6" x2="1863.0" y2="979.6" stroke="#000" stroke-width="2"/>
<circle cx="1775.0" cy="979.6" r="17" fill="#fff" stroke="#000" stroke-width="2"/>
<text x="1752.5" y="976.0" font-size="17.5" fill="#000" text-anchor="end">79</text>
<text x="1798.0" y="976.0" font-size="17.5" fill="#000" text-anchor="start">+9.1</text>
<line x1="1775.0" y1="996.6" x2="1775.0" y2="1014.6" stroke="#000" stroke-width="2"/>
<line x1="1761.3" y1="1014.6" x2="1788.7" y2="1014.6" stroke="#000" stroke-width="2"/>
<path d="M1761.0,1032.6 H1771.5 L1768.5,1015.1 H1765.0 Z" fill="#000"/><path d="M1788.0,1015.1 L1780.0,1032.6 M1784.2,1024.1 L1787.7,1032.6" stroke="#000" stroke-width="1.8" fill="none"/>
<text x="1748.2" y="1030.9" font-size="17.5" fill="#000" text-anchor="end">4.20</text>
<text x="1802.3" y="1030.9" font-size="17.5" fill="#000" text-anchor="start">+4.93</text>
<line x1="1818.3" y1="1052.6" x2="1950.3" y2="1052.6" stroke="#000" stroke-width="2"/>
<circle cx="1862.3" cy="1052.6" r="17" fill="#fff" stroke="#000" stroke-width="2"/>
<text x="1839.8" y="1049.0" font-size="17.5" fill="#000" text-anchor="end">68</text>
<text x="1885.3" y="1049.0" font-size="17.5" fill="#000" text-anchor="start">+12.1</text>
<line x1="1862.3" y1="1069.6" x2="1862.3" y2="1087.6" stroke="#000" stroke-width="2"/>
<line x1="1848.6" y1="1087.6" x2="1876.0" y2="1087.6" stroke="#000" stroke-width="2"/>
<path d="M1848.3,1105.6 H1858.8 L1855.8,1088.1 H1852.3 Z" fill="#000"/><path d="M1875.3,1088.1 L1867.3,1105.6 M1871.5,1097.1 L1875.0,1105.6" stroke="#000" stroke-width="1.8" fill="none"/>
<text x="1835.5" y="1103.8999999999999" font-size="17.5" fill="#000" text-anchor="end">3.20</text>
<text x="1889.6" y="1103.8999999999999" font-size="17.5" fill="#000" text-anchor="start">+8.87</text>
<line x1="1596.9" y1="1075.7" x2="1728.9" y2="1075.7" stroke="#000" stroke-width="2"/>
<circle cx="1640.9" cy="1075.7" r="17" fill="#fff" stroke="#000" stroke-width="2"/>
<text x="1618.4" y="1072.1000000000001" font-size="17.5" fill="#000" text-anchor="end">11</text>
<text x="1663.9" y="1072.1000000000001" font-size="17.5" fill="#000" text-anchor="start">+5.8</text>
<line x1="1640.9" y1="1092.7" x2="1640.9" y2="1110.7" stroke="#000" stroke-width="2"/>
<line x1="1627.2" y1="1110.7" x2="1654.6000000000001" y2="1110.7" stroke="#000" stroke-width="2"/>
<path d="M1626.9,1128.7 H1637.4 L1634.4,1111.2 H1630.9 Z" fill="#000"/><path d="M1653.9,1111.2 L1645.9,1128.7 M1650.1000000000001,1120.2 L1653.6000000000001,1128.7" stroke="#000" stroke-width="1.8" fill="none"/>
<text x="1614.1000000000001" y="1127.0" font-size="17.5" fill="#000" text-anchor="end">2.90</text>
<text x="1668.2" y="1127.0" font-size="17.5" fill="#000" text-anchor="start">+2.88</text>
<path d="M1786.7,906.9L1791.8999999999999,912.1M1791.8999999999999,906.9L1786.7,912.1M1608.0,933.4L1613.1999999999998,938.6M1613.1999999999998,933.4L1608.0,938.6M1898.4,915.9L1903.6,921.1M1903.6,915.9L1898.4,921.1M1865.8000000000002,940.6L1871.0,945.8000000000001M1871.0,940.6L1865.8000000000002,945.8000000000001M1813.2,951.6L1818.3999999999999,956.8000000000001M1818.3999999999999,951.6L1813.2,956.8000000000001M1982.4,896.6999999999999L1987.6,901.9M1987.6,896.6999999999999L1982.4,901.9M1989.9,926.1L1995.1,931.3000000000001M1995.1,926.1L1989.9,931.3000000000001M1835.6000000000001,987.1999999999999L1840.8,992.4M1840.8,987.1999999999999L1835.6000000000001,992.4M1953.2,999.5L1958.3999999999999,1004.7M1958.3999999999999,999.5L1953.2,1004.7M2052.1,984.8L2057.2999999999997,990.0M2057.2999999999997,984.8L2052.1,990.0M1858.7,1026.0L1863.8999999999999,1031.1999999999998M1863.8999999999999,1026.0L1858.7,1031.1999999999998M1624.3000000000002,1036.0L1629.5,1041.1999999999998M1629.5,1036.0L1624.3000000000002,1041.1999999999998M1957.9,1043.9L1963.1,1049.1M1963.1,1043.9L1957.9,1049.1M2035.8000000000002,1038.8000000000002L2041.0,1044.0M2041.0,1038.8000000000002L2035.8000000000002,1044.0M1907.0,1120.3000000000002L1912.1999999999998,1125.5M1912.1999999999998,1120.3000000000002L1907.0,1125.5M2026.2,1099.6000000000001L2031.3999999999999,1104.8M2031.3999999999999,1099.6000000000001L2026.2,1104.8M1642.6000000000001,1137.3000000000002L1647.8,1142.5M1647.8,1137.3000000000002L1642.6000000000001,1142.5M1801.6000000000001,1138.7L1806.8,1143.8999999999999M1806.8,1138.7L1801.6000000000001,1143.8999999999999M1958.3000000000002,1147.9L1963.5,1153.1M1963.5,1147.9L1958.3000000000002,1153.1M2002.4,1154.4L2007.6,1159.6M2007.6,1154.4L2002.4,1159.6M1845.8000000000002,865.1L1851.0,870.3000000000001M1851.0,865.1L1845.8000000000002,870.3000000000001M1865.6000000000001,882.9L1870.8,888.1M1870.8,882.9L1865.6000000000001,888.1M1764.3000000000002,1028.6000000000001L1769.5,1033.8M1769.5,1028.6000000000001L1764.3000000000002,1033.8M1900.9,1092.8000000000002L1906.1,1098.0M1906.1,1092.8000000000002L1900.9,1098.0" stroke="#808080" stroke-width="1.6" fill="none"/>
<polyline points="1733.4,1160.0 1685.4,1237.6 1532.5,1480.1" fill="none" stroke="#000080" stroke-width="2" stroke-linecap="butt" stroke-linejoin="round"/>
<polyline points="1725.4,1160.0 1745.9,1244.5 1751.6,1308.4" fill="none" stroke="#0000ff" stroke-width="2" stroke-linecap="butt" stroke-linejoin="round"/>
<polyline points="1747.1,1307.3 1758.5,1312.5 1768.8,1309.5" fill="none" stroke="#000080" stroke-width="2" stroke-linecap="butt" stroke-linejoin="round"/>
<polyline points="1751.6,1314.1 1766.5,1318.7" fill="none" stroke="#0000ff" stroke-width="2" stroke-linecap="butt" stroke-linejoin="round"/>
<polyline points="1757.4,1315.3 1751.6,1365.5" fill="none" stroke="#000080" stroke-width="2" stroke-linecap="butt" stroke-linejoin="round"/>
<polyline points="1740.2,1365.5 1756.2,1365.5" fill="none" stroke="#0000ff" stroke-width="2" stroke-linecap="butt" stroke-linejoin="round"/>
<polyline points="1739.1,1371.2 1748.2,1366.6 1760.8,1374.6" fill="none" stroke="#000080" stroke-width="2" stroke-linecap="butt" stroke-linejoin="round"/>
<polyline points="1757,1365.5 1740.2,1365 1729.6,1405.7 1707,1440" fill="none" stroke="#0000ff" stroke-width="2" stroke-linecap="butt" stroke-linejoin="round"/>
<polyline points="1745,1382 1735.4,1408.4 1713.5,1440" fill="none" stroke="#0000ff" stroke-width="3" stroke-dasharray="7 8" stroke-linecap="butt" stroke-linejoin="round"/>
<polyline points="1730.0,1164.6 1751.6,1246.8 1757.4,1308.4" fill="none" stroke="#0000ff" stroke-width="3" stroke-dasharray="7 8" stroke-linecap="butt" stroke-linejoin="round"/>
<polyline points="1748.2,1160.0 1769.9,1260.5 1771.1,1308.4 1756.2,1379.2 1736.8,1427.1 1693.4,1480.1" fill="none" stroke="#ff0000" stroke-width="2" stroke-dasharray="22 14" stroke-linecap="butt" stroke-linejoin="round"/>
<polyline points="1775.6,1166.8 1793.9,1260.5 1796.2,1317.5 1790.5,1340.4 1787.0,1370.0 1769.9,1420.3 1736.8,1470.5" fill="none" stroke="#ff8000" stroke-width="4.5" stroke-dasharray="30 22" stroke-linecap="round" stroke-linejoin="round"/>
<polyline points="1800.7,1176.0 1825.8,1310.7 1814.4,1390.6 1793.9,1429.4 1769.9,1470.5" fill="none" stroke="#ff0000" stroke-width="2" stroke-dasharray="22 14" stroke-linecap="butt" stroke-linejoin="round"/>
<polyline points="1800.7,1160.0 1813.3,1237.6 1833.8,1400.9 1799.6,1480.1" fill="none" stroke="#000080" stroke-width="2" stroke-linecap="butt" stroke-linejoin="round"/>
<polyline points="1825.8,1351.8 1836.1,1354.1" fill="none" stroke="#0000ff" stroke-width="2" stroke-linecap="butt" stroke-linejoin="round"/>
<polyline points="1825.8,1351.8 1816.7,1397.4 1789.3,1461.4 1776.8,1480.1" fill="none" stroke="#0000ff" stroke-width="2" stroke-linecap="butt" stroke-linejoin="round"/>
<polyline points="1836.1,1354.1 1825.8,1404.3 1798.4,1470.5 1792.7,1480.1" fill="none" stroke="#0000ff" stroke-width="2" stroke-linecap="butt" stroke-linejoin="round"/>
<polyline points="1831.6,1356.3 1821.3,1400.9 1793.9,1465.9 1784.7,1480.1" fill="none" stroke="#0000ff" stroke-width="3" stroke-dasharray="7 8" stroke-linecap="butt" stroke-linejoin="round"/>
<line x1="1509.5" y1="1229.6" x2="1641.5" y2="1229.6" stroke="#000" stroke-width="2"/>
<circle cx="1553.5" cy="1229.6" r="17" fill="#fff" stroke="#000" stroke-width="2"/>
<text x="1531.0" y="1226.0" font-size="17.5" fill="#000" text-anchor="end">15</text>
<text x="1576.5" y="1226.0" font-size="17.5" fill="#000" text-anchor="start">+5.1</text>
<line x1="1553.5" y1="1246.6" x2="1553.5" y2="1264.6" stroke="#000" stroke-width="2"/>
<line x1="1539.8" y1="1264.6" x2="1567.2" y2="1264.6" stroke="#000" stroke-width="2"/>
<path d="M1539.5,1282.6 H1550.0 L1547.0,1265.1 H1543.5 Z" fill="#000"/><path d="M1566.5,1265.1 L1558.5,1282.6 M1562.7,1274.1 L1566.2,1282.6" stroke="#000" stroke-width="1.8" fill="none"/>
<text x="1526.7" y="1280.8999999999999" font-size="17.5" fill="#000" text-anchor="end">3.50</text>
<text x="1580.8" y="1280.8999999999999" font-size="17.5" fill="#000" text-anchor="start">+1.60</text>
<line x1="1824.8" y1="1301.6" x2="1956.8" y2="1301.6" stroke="#000" stroke-width="2"/>
<circle cx="1868.8" cy="1301.6" r="17" fill="#fff" stroke="#000" stroke-width="2"/><path d="M1851.8,1301.6 A17,17 0 0 0 1885.8,1301.6 Z" fill="#000"/><line x1="1853.5" y1="1304.5" x2="1884.1" y2="1304.5" stroke="#777" stroke-width="0.7"/><line x1="1854.3" y1="1307.4" x2="1883.3" y2="1307.4" stroke="#777" stroke-width="0.7"/><line x1="1855.7" y1="1310.3" x2="1881.9" y2="1310.3" stroke="#777" stroke-width="0.7"/><line x1="1857.9" y1="1313.2" x2="1879.7" y2="1313.2" stroke="#777" stroke-width="0.7"/><line x1="1861.4" y1="1316.1" x2="1876.2" y2="1316.1" stroke="#777" stroke-width="0.7"/>
<text x="1846.3" y="1298.0" font-size="17.5" fill="#000" text-anchor="end">97</text>
<text x="1891.8" y="1298.0" font-size="17.5" fill="#000" text-anchor="start">+7.5</text>
<line x1="1868.8" y1="1318.6" x2="1868.8" y2="1336.6" stroke="#000" stroke-width="2"/>
<line x1="1855.1" y1="1336.6" x2="1882.5" y2="1336.6" stroke="#000" stroke-width="2"/>
<path d="M1854.8,1354.6 H1865.3 L1862.3,1337.1 H1858.8 Z" fill="#000"/><path d="M1881.8,1337.1 L1873.8,1354.6 M1878.0,1346.1 L1881.5,1354.6" stroke="#000" stroke-width="1.8" fill="none"/>
<text x="1842.0" y="1352.8999999999999" font-size="17.5" fill="#000" text-anchor="end">5.95</text>
<text x="1896.1" y="1352.8999999999999" font-size="17.5" fill="#000" text-anchor="start">+1.56</text>
<line x1="1673.9" y1="1345.6" x2="1805.9" y2="1345.6" stroke="#000" stroke-width="2"/>
<circle cx="1717.9" cy="1345.6" r="17" fill="#fff" stroke="#000" stroke-width="2"/><path d="M1700.9,1345.6 A17,17 0 0 0 1734.9,1345.6 Z" fill="#000"/><line x1="1702.6" y1="1348.5" x2="1733.2" y2="1348.5" stroke="#777" stroke-width="0.7"/><line x1="1703.4" y1="1351.4" x2="1732.4" y2="1351.4" stroke="#777" stroke-width="0.7"/><line x1="1704.8" y1="1354.3" x2="1731.0" y2="1354.3" stroke="#777" stroke-width="0.7"/><line x1="1707.0" y1="1357.2" x2="1728.8" y2="1357.2" stroke="#777" stroke-width="0.7"/><line x1="1710.5" y1="1360.1" x2="1725.3" y2="1360.1" stroke="#777" stroke-width="0.7"/>
<text x="1695.4" y="1342.0" font-size="17.5" fill="#000" text-anchor="end">95</text>
<text x="1740.9" y="1342.0" font-size="17.5" fill="#000" text-anchor="start">+5.2</text>
<line x1="1717.9" y1="1362.6" x2="1717.9" y2="1380.6" stroke="#000" stroke-width="2"/>
<line x1="1704.2" y1="1380.6" x2="1731.6000000000001" y2="1380.6" stroke="#000" stroke-width="2"/>
<path d="M1703.9,1398.6 H1714.4 L1711.4,1381.1 H1707.9 Z" fill="#000"/><path d="M1730.9,1381.1 L1722.9,1398.6 M1727.1000000000001,1390.1 L1730.6000000000001,1398.6" stroke="#000" stroke-width="1.8" fill="none"/>
<text x="1691.1000000000001" y="1396.8999999999999" font-size="17.5" fill="#000" text-anchor="end">4.43</text>
<text x="1745.2" y="1396.8999999999999" font-size="17.5" fill="#000" text-anchor="start">+0.77</text>
<path d="M1857.0,1159.7L1862.1999999999998,1164.8999999999999M1862.1999999999998,1159.7L1857.0,1164.8999999999999M1882.1000000000001,1173.4L1887.3,1178.6M1887.3,1173.4L1882.1000000000001,1178.6M1467.1000000000001,1213.8000000000002L1472.3,1219.0M1472.3,1213.8000000000002L1467.1000000000001,1219.0M1559.1000000000001,1219.5L1564.3,1224.6999999999998M1564.3,1219.5L1559.1000000000001,1224.6999999999998M1662.3000000000002,1237.3000000000002L1667.5,1242.5M1667.5,1237.3000000000002L1662.3000000000002,1242.5M1824.4,1235.0L1829.6,1240.1999999999998M1829.6,1235.0L1824.4,1240.1999999999998M1868.9,1243.5L1874.1,1248.6999999999998M1874.1,1243.5L1868.9,1248.6999999999998M1947.0,1230.0L1952.1999999999998,1235.1999999999998M1952.1999999999998,1230.0L1947.0,1235.1999999999998M1488.8000000000002,1322.5L1494.0,1327.6999999999998M1494.0,1322.5L1488.8000000000002,1327.6999999999998M1580.1000000000001,1323.6000000000001L1585.3,1328.8M1585.3,1323.6000000000001L1580.1000000000001,1328.8M1882.1000000000001,1320.2L1887.3,1325.3999999999999M1887.3,1320.2L1882.1000000000001,1325.3999999999999M1994.5,1292.1000000000001L1999.6999999999998,1297.3M1999.6999999999998,1292.1000000000001L1994.5,1297.3M1678.7,1342.3000000000002L1683.8999999999999,1347.5M1683.8999999999999,1342.3000000000002L1678.7,1347.5M1985.3000000000002,1355.3000000000002L1990.5,1360.5M1990.5,1355.3000000000002L1985.3000000000002,1360.5M1930.6000000000001,1367.0L1935.8,1372.1999999999998M1935.8,1367.0L1930.6000000000001,1372.1999999999998M1689.7,1410.8000000000002L1694.8999999999999,1416.0M1694.8999999999999,1410.8000000000002L1689.7,1416.0M1886.5,1416.5L1891.6999999999998,1421.6999999999998M1891.6999999999998,1416.5L1886.5,1421.6999999999998M1961.8000000000002,1429.1000000000001L1967.0,1434.3M1967.0,1429.1000000000001L1961.8000000000002,1434.3M1505.9,1426.1000000000001L1511.1,1431.3M1511.1,1426.1000000000001L1505.9,1431.3M1601.3000000000002,1433.7L1606.5,1438.8999999999999M1606.5,1433.7L1601.3000000000002,1438.8999999999999" stroke="#808080" stroke-width="1.6" fill="none"/>
<polyline points="1333.9,1440.0 1343.0,1495.3 1300.0,1489.6" fill="none" stroke="#0000ff" stroke-width="2" stroke-linecap="butt" stroke-linejoin="round"/>
<polyline points="1353.5,1440.0 1367.8,1507.8 1377.0,1515.7 1456.5,1530.0 1524.4,1527.4 1580.5,1518.3 1632.6,1498.7 1670.5,1473.9 1707.0,1440.0" fill="none" stroke="#0000ff" stroke-width="2" stroke-linecap="butt" stroke-linejoin="round"/>
<polyline points="1347.0,1440.0 1356.1,1492.2" fill="none" stroke="#0000ff" stroke-width="3" stroke-dasharray="7 8" stroke-linecap="butt" stroke-linejoin="round"/>
<polyline points="1300.0,1501.3 1357.4,1513.0 1375.7,1523.5 1456.5,1536.5 1529.6,1535.2 1600.0,1522.2 1636.6,1507.8 1675.7,1483.0 1713.5,1440.0" fill="none" stroke="#0000ff" stroke-width="3" stroke-dasharray="7 8" stroke-linecap="butt" stroke-linejoin="round"/>
<polyline points="1305.2,1520.9 1365.2,1536.5 1451.3,1549.6 1521.8,1549.6 1581.8,1537.8 1632.6,1520.9 1670.5,1496.1 1727.9,1440.0" fill="none" stroke="#ff0000" stroke-width="2" stroke-dasharray="22 14" stroke-linecap="butt" stroke-linejoin="round"/>
<polyline points="1300.0,1544.4 1365.2,1558.7 1461.8,1571.8 1534.8,1570.4 1594.8,1560.0 1654.8,1539.1 1691.3,1518.3 1730.5,1484.4 1759.2,1440.0" fill="none" stroke="#ff8000" stroke-width="4.5" stroke-dasharray="30 22" stroke-linecap="round" stroke-linejoin="round"/>
<polyline points="1300.0,1570.4 1352.2,1586.1 1443.5,1596.5 1521.8,1595.2 1587.0,1586.1 1649.6,1570.4 1686.1,1552.2 1717.4,1528.7 1759.2,1487.0 1790.5,1440.0" fill="none" stroke="#ff0000" stroke-width="2" stroke-dasharray="22 14" stroke-linecap="butt" stroke-linejoin="round"/>
<polyline points="1367.8,1607.0 1453.9,1610.9 1521.8,1607.0" fill="none" stroke="#0000ff" stroke-width="3" stroke-dasharray="7 8" stroke-linecap="butt" stroke-linejoin="round"/>
<polyline points="1125,1526.3 1179.8,1544 1304.5,1586 1332,1600 1344.9,1628.4 1291.7,1810 1278.8,1863.2" fill="none" stroke="#0000ff" stroke-width="2" stroke-linecap="butt" stroke-linejoin="round"/>
<polyline points="1311.9,1861.4 1375.7,1620.0 1400.4,1626.5 1409.6,1634.4 1453.9,1629.1 1450.0,1638.3 1425.2,1685.2 1392.6,1793.5" fill="none" stroke="#0000ff" stroke-width="2" stroke-linecap="butt" stroke-linejoin="round"/>
<polyline points="1128,1523.5 1258.6,1562.6 1320.5,1588.7 1346.6,1605 1357.7,1626.6 1330.2,1734.8 1293.5,1881.6" fill="none" stroke="#0000ff" stroke-width="3" stroke-dasharray="7 8" stroke-linecap="butt" stroke-linejoin="round"/>
<polyline points="1469.6,1626.5 1528.3,1614.8 1524.4,1597.8" fill="none" stroke="#0000ff" stroke-width="2" stroke-linecap="butt" stroke-linejoin="round"/>
<polyline points="1469.6,1626.5 1467.0,1638.3 1422.6,1721.8 1393.9,1793.5" fill="none" stroke="#0000ff" stroke-width="2" stroke-linecap="butt" stroke-linejoin="round"/>
<polyline points="1460.4,1612.2 1457.8,1638.3 1422.6,1708.7 1386.1,1789.6" fill="none" stroke="#0000ff" stroke-width="3" stroke-dasharray="7 8" stroke-linecap="butt" stroke-linejoin="round"/>
<polyline points="1558.3,1440.0 1435.7,1638.3 1341.2,1909.8" fill="none" stroke="#000080" stroke-width="2" stroke-linecap="butt" stroke-linejoin="round"/>
<polyline points="1573.9,1638.3 1581.8,1610.9 1560.9,1610.9 1563.5,1593.9 1667.9,1571.8 1675.7,1593.9 1654.8,1607.0 1682.2,1612.2 1683.5,1627.8 1630.0,1629.1 1627.4,1613.5 1603.9,1613.5 1590.9,1656.5 1598.7,1803.9" fill="none" stroke="#0000ff" stroke-width="2" stroke-linecap="butt" stroke-linejoin="round"/>
<polyline points="1573.9,1638.3 1585.7,1803.9" fill="none" stroke="#0000ff" stroke-width="2" stroke-linecap="butt" stroke-linejoin="round"/>
<polyline points="1579.2,1604.4 1636.6,1596.5 1665.2,1588.7" fill="none" stroke="#0000ff" stroke-width="3" stroke-dasharray="7 8" stroke-linecap="butt" stroke-linejoin="round"/>
<polyline points="1636.6,1596.5 1644.4,1620.0 1675.7,1620.0" fill="none" stroke="#0000ff" stroke-width="3" stroke-dasharray="7 8" stroke-linecap="butt" stroke-linejoin="round"/>
<polyline points="1584.4,1617.4 1581.8,1648.7 1592.2,1803.9" fill="none" stroke="#0000ff" stroke-width="3" stroke-dasharray="7 8" stroke-linecap="butt" stroke-linejoin="round"/>
<polyline points="1789.2,1462.2 1755.3,1509.1 1710.9,1549.6 1707.0,1591.3 1714.8,1625.2 1858.3,1631.8" fill="none" stroke="#0000ff" stroke-width="2" stroke-linecap="butt" stroke-linejoin="round"/>
<polyline points="1806.1,1468.7 1767.0,1520.9 1729.2,1560.0 1726.6,1577.0 1734.4,1608.3 1875.3,1620.0" fill="none" stroke="#0000ff" stroke-width="2" stroke-linecap="butt" stroke-linejoin="round"/>
<polyline points="1797.0,1464.8 1761.8,1515.7 1717.4,1557.4 1717.4,1596.5 1721.3,1617.4 1868.7,1626.5" fill="none" stroke="#0000ff" stroke-width="3" stroke-dasharray="7 8" stroke-linecap="butt" stroke-linejoin="round"/>
<polyline points="1300.0,1650.0 1435.7,1638.3 1573.9,1622.6 1746.1,1601.8 1790.5,1501.3 1817.9,1440.0" fill="none" stroke="#000080" stroke-width="2" stroke-linecap="butt" stroke-linejoin="round"/>
<polyline points="1362.6,1515.7 1343.0,1591.3" fill="none" stroke="#000080" stroke-width="2" stroke-linecap="butt" stroke-linejoin="round"/>
<polyline points="1352.2,1517.0 1362.6,1524.8 1375.7,1523.5" fill="none" stroke="#000080" stroke-width="2" stroke-linecap="butt" stroke-linejoin="round"/>
<polyline points="1332.6,1590.8 1343.0,1588.7 1352.2,1596.5" fill="none" stroke="#000080" stroke-width="2" stroke-linecap="butt" stroke-linejoin="round"/>
<circle cx="1358.7" cy="1501.3" r="4.5" fill="none" stroke="#000" stroke-width="2"/>
<line x1="1469.4" y1="1487.7" x2="1601.4" y2="1487.7" stroke="#000" stroke-width="2"/>
<circle cx="1513.4" cy="1487.7" r="17" fill="#fff" stroke="#000" stroke-width="2"/><path d="M1496.4,1487.7 A17,17 0 0 0 1530.4,1487.7 Z" fill="#000"/><line x1="1498.1" y1="1490.6" x2="1528.7" y2="1490.6" stroke="#777" stroke-width="0.7"/><line x1="1498.9" y1="1493.5" x2="1527.9" y2="1493.5" stroke="#777" stroke-width="0.7"/><line x1="1500.3" y1="1496.4" x2="1526.5" y2="1496.4" stroke="#777" stroke-width="0.7"/><line x1="1502.5" y1="1499.3" x2="1524.3" y2="1499.3" stroke="#777" stroke-width="0.7"/><line x1="1506.0" y1="1502.2" x2="1520.8" y2="1502.2" stroke="#777" stroke-width="0.7"/>
<text x="1490.9" y="1484.1000000000001" font-size="17.5" fill="#000" text-anchor="end">110</text>
<text x="1536.4" y="1484.1000000000001" font-size="17.5" fill="#000" text-anchor="start">+4.7</text>
<line x1="1513.4" y1="1504.7" x2="1513.4" y2="1522.7" stroke="#000" stroke-width="2"/>
<line x1="1499.7" y1="1522.7" x2="1527.1000000000001" y2="1522.7" stroke="#000" stroke-width="2"/>
<text x="1486.6000000000001" y="1539.0" font-size="17.5" fill="#000" text-anchor="end">3.10</text>
<text x="1540.7" y="1539.0" font-size="17.5" fill="#000" text-anchor="start">+1.56</text>
<line x1="1619.9" y1="1443.9" x2="1751.9" y2="1443.9" stroke="#000" stroke-width="2"/>
<circle cx="1663.9" cy="1443.9" r="17" fill="#fff" stroke="#000" stroke-width="2"/><path d="M1646.9,1443.9 A17,17 0 0 0 1680.9,1443.9 Z" fill="#000"/><line x1="1648.6" y1="1446.8" x2="1679.2" y2="1446.8" stroke="#777" stroke-width="0.7"/><line x1="1649.4" y1="1449.7" x2="1678.4" y2="1449.7" stroke="#777" stroke-width="0.7"/><line x1="1650.8" y1="1452.6" x2="1677.0" y2="1452.6" stroke="#777" stroke-width="0.7"/><line x1="1653.0" y1="1455.5" x2="1674.8" y2="1455.5" stroke="#777" stroke-width="0.7"/><line x1="1656.5" y1="1458.4" x2="1671.3" y2="1458.4" stroke="#777" stroke-width="0.7"/>
<text x="1641.4" y="1440.3000000000002" font-size="17.5" fill="#000" text-anchor="end">109</text>
<text x="1686.9" y="1440.3000000000002" font-size="17.5" fill="#000" text-anchor="start">+4.8</text>
<line x1="1663.9" y1="1460.9" x2="1663.9" y2="1478.9" stroke="#000" stroke-width="2"/>
<line x1="1650.2" y1="1478.9" x2="1677.6000000000001" y2="1478.9" stroke="#000" stroke-width="2"/>
<text x="1637.1000000000001" y="1495.2" font-size="17.5" fill="#000" text-anchor="end">3.30</text>
<text x="1691.2" y="1495.2" font-size="17.5" fill="#000" text-anchor="start">+1.55</text>
<line x1="1805.2" y1="1512.5" x2="1937.2" y2="1512.5" stroke="#000" stroke-width="2"/>
<circle cx="1849.2" cy="1512.5" r="17" fill="#fff" stroke="#000" stroke-width="2"/><path d="M1832.2,1512.5 A17,17 0 0 0 1866.2,1512.5 Z" fill="#000"/><line x1="1833.9" y1="1515.4" x2="1864.5" y2="1515.4" stroke="#777" stroke-width="0.7"/><line x1="1834.7" y1="1518.3" x2="1863.7" y2="1518.3" stroke="#777" stroke-width="0.7"/><line x1="1836.1" y1="1521.2" x2="1862.3" y2="1521.2" stroke="#777" stroke-width="0.7"/><line x1="1838.3" y1="1524.1" x2="1860.1" y2="1524.1" stroke="#777" stroke-width="0.7"/><line x1="1841.8" y1="1527.0" x2="1856.6" y2="1527.0" stroke="#777" stroke-width="0.7"/>
<text x="1826.7" y="1508.9" font-size="17.5" fill="#000" text-anchor="end">108</text>
<text x="1872.2" y="1508.9" font-size="17.5" fill="#000" text-anchor="start">+5.1</text>
<line x1="1849.2" y1="1529.5" x2="1849.2" y2="1547.5" stroke="#000" stroke-width="2"/>
<line x1="1835.5" y1="1547.5" x2="1862.9" y2="1547.5" stroke="#000" stroke-width="2"/>
<text x="1822.4" y="1563.8" font-size="17.5" fill="#000" text-anchor="end">7.50</text>
<text x="1876.5" y="1563.8" font-size="17.5" fill="#000" text-anchor="start">-2.45</text>
<line x1="1665.1" y1="1593.9" x2="1797.1" y2="1593.9" stroke="#000" stroke-width="2"/>
<circle cx="1709.1" cy="1593.9" r="17" fill="#fff" stroke="#000" stroke-width="2"/><path d="M1692.1,1593.9 A17,17 0 0 0 1726.1,1593.9 Z" fill="#000"/><line x1="1693.8" y1="1596.8" x2="1724.4" y2="1596.8" stroke="#777" stroke-width="0.7"/><line x1="1694.6" y1="1599.7" x2="1723.6" y2="1599.7" stroke="#777" stroke-width="0.7"/><line x1="1696.0" y1="1602.6" x2="1722.2" y2="1602.6" stroke="#777" stroke-width="0.7"/><line x1="1698.2" y1="1605.5" x2="1720.0" y2="1605.5" stroke="#777" stroke-width="0.7"/><line x1="1701.7" y1="1608.4" x2="1716.5" y2="1608.4" stroke="#777" stroke-width="0.7"/>
<text x="1686.6" y="1590.3000000000002" font-size="17.5" fill="#000" text-anchor="end">100</text>
<text x="1732.1" y="1590.3000000000002" font-size="17.5" fill="#000" text-anchor="start">+4.4</text>
<line x1="1709.1" y1="1610.9" x2="1709.1" y2="1628.9" stroke="#000" stroke-width="2"/>
<line x1="1695.3999999999999" y1="1628.9" x2="1722.8" y2="1628.9" stroke="#000" stroke-width="2"/>
<text x="1682.3" y="1645.2" font-size="17.5" fill="#000" text-anchor="end">8.76</text>
<text x="1736.3999999999999" y="1645.2" font-size="17.5" fill="#000" text-anchor="start">-4.32</text>
<line x1="1513.0" y1="1638.8" x2="1645.0" y2="1638.8" stroke="#000" stroke-width="2"/>
<circle cx="1557.0" cy="1638.8" r="17" fill="#fff" stroke="#000" stroke-width="2"/><path d="M1540.0,1638.8 A17,17 0 0 0 1574.0,1638.8 Z" fill="#000"/><line x1="1541.7" y1="1641.7" x2="1572.3" y2="1641.7" stroke="#777" stroke-width="0.7"/><line x1="1542.5" y1="1644.6" x2="1571.5" y2="1644.6" stroke="#777" stroke-width="0.7"/><line x1="1543.9" y1="1647.5" x2="1570.1" y2="1647.5" stroke="#777" stroke-width="0.7"/><line x1="1546.1" y1="1650.4" x2="1567.9" y2="1650.4" stroke="#777" stroke-width="0.7"/><line x1="1549.6" y1="1653.3" x2="1564.4" y2="1653.3" stroke="#777" stroke-width="0.7"/>
<text x="1534.5" y="1635.2" font-size="17.5" fill="#000" text-anchor="end">102</text>
<text x="1580.0" y="1635.2" font-size="17.5" fill="#000" text-anchor="start">+4.5</text>
<line x1="1557.0" y1="1655.8" x2="1557.0" y2="1673.8" stroke="#000" stroke-width="2"/>
<line x1="1543.3" y1="1673.8" x2="1570.7" y2="1673.8" stroke="#000" stroke-width="2"/>
<path d="M1543.0,1691.8 H1553.5 L1550.5,1674.3 H1547.0 Z" fill="#000"/><path d="M1570.0,1674.3 L1562.0,1691.8 M1566.2,1683.3 L1569.7,1691.8" stroke="#000" stroke-width="1.8" fill="none"/>
<text x="1530.2" y="1690.1" font-size="17.5" fill="#000" text-anchor="end">5.58</text>
<text x="1584.3" y="1690.1" font-size="17.5" fill="#000" text-anchor="start">-1.11</text>
<line x1="1362.4" y1="1682.6" x2="1494.4" y2="1682.6" stroke="#000" stroke-width="2"/>
<circle cx="1406.4" cy="1682.6" r="17" fill="#fff" stroke="#000" stroke-width="2"/><path d="M1389.4,1682.6 A17,17 0 0 0 1423.4,1682.6 Z" fill="#000"/><line x1="1391.1" y1="1685.5" x2="1421.7" y2="1685.5" stroke="#777" stroke-width="0.7"/><line x1="1391.9" y1="1688.4" x2="1420.9" y2="1688.4" stroke="#777" stroke-width="0.7"/><line x1="1393.3" y1="1691.3" x2="1419.5" y2="1691.3" stroke="#777" stroke-width="0.7"/><line x1="1395.5" y1="1694.2" x2="1417.3" y2="1694.2" stroke="#777" stroke-width="0.7"/><line x1="1399.0" y1="1697.1" x2="1413.8" y2="1697.1" stroke="#777" stroke-width="0.7"/>
<text x="1383.9" y="1679.0" font-size="17.5" fill="#000" text-anchor="end">103</text>
<text x="1429.4" y="1679.0" font-size="17.5" fill="#000" text-anchor="start">+4.6</text>
<line x1="1406.4" y1="1699.6" x2="1406.4" y2="1717.6" stroke="#000" stroke-width="2"/>
<line x1="1392.7" y1="1717.6" x2="1420.1000000000001" y2="1717.6" stroke="#000" stroke-width="2"/>
<path d="M1392.4,1735.6 H1402.9 L1399.9,1718.1 H1396.4 Z" fill="#000"/><path d="M1419.4,1718.1 L1411.4,1735.6 M1415.6000000000001,1727.1 L1419.1000000000001,1735.6" stroke="#000" stroke-width="1.8" fill="none"/>
<text x="1379.6000000000001" y="1733.8999999999999" font-size="17.5" fill="#000" text-anchor="end">6.18</text>
<text x="1433.7" y="1733.8999999999999" font-size="17.5" fill="#000" text-anchor="start">-1.56</text>
<line x1="1694.3" y1="1725.7" x2="1826.3" y2="1725.7" stroke="#000" stroke-width="2"/>
<circle cx="1738.3" cy="1725.7" r="17" fill="#fff" stroke="#000" stroke-width="2"/><path d="M1721.3,1725.7 A17,17 0 0 0 1755.3,1725.7 Z" fill="#000"/><line x1="1723.0" y1="1728.6" x2="1753.6" y2="1728.6" stroke="#777" stroke-width="0.7"/><line x1="1723.8" y1="1731.5" x2="1752.8" y2="1731.5" stroke="#777" stroke-width="0.7"/><line x1="1725.2" y1="1734.4" x2="1751.4" y2="1734.4" stroke="#777" stroke-width="0.7"/><line x1="1727.4" y1="1737.3" x2="1749.2" y2="1737.3" stroke="#777" stroke-width="0.7"/><line x1="1730.9" y1="1740.2" x2="1745.7" y2="1740.2" stroke="#777" stroke-width="0.7"/>
<text x="1715.8" y="1722.1000000000001" font-size="17.5" fill="#000" text-anchor="end">1</text>
<text x="1761.3" y="1722.1000000000001" font-size="17.5" fill="#000" text-anchor="start">+4.3</text>
<line x1="1738.3" y1="1742.7" x2="1738.3" y2="1760.7" stroke="#000" stroke-width="2"/>
<line x1="1724.6" y1="1760.7" x2="1752.0" y2="1760.7" stroke="#000" stroke-width="2"/>
<path d="M1724.3,1778.7 H1734.8 L1731.8,1761.2 H1728.3 Z" fill="#000"/><path d="M1751.3,1761.2 L1743.3,1778.7 M1747.5,1770.2 L1751.0,1778.7" stroke="#000" stroke-width="1.8" fill="none"/>
<text x="1711.5" y="1777.0" font-size="17.5" fill="#000" text-anchor="end">7.68</text>
<text x="1765.6" y="1777.0" font-size="17.5" fill="#000" text-anchor="start">-3.42</text>
<path d="M1435.7,1489.6000000000001L1440.8999999999999,1494.8M1440.8999999999999,1489.6000000000001L1435.7,1494.8M1513.4,1490.4L1518.6,1495.6M1518.6,1490.4L1513.4,1495.6M1856.5,1487.0L1861.6999999999998,1492.1999999999998M1861.6999999999998,1487.0L1856.5,1492.1999999999998M1808.7,1514.4L1813.8999999999999,1519.6M1813.8999999999999,1514.4L1808.7,1519.6M1853.9,1554.0L1859.1,1559.1999999999998M1859.1,1554.0L1853.9,1559.1999999999998M1896.7,1552.2L1901.8999999999999,1557.3999999999999M1901.8999999999999,1552.2L1896.7,1557.3999999999999M1781.9,1579.6000000000001L1787.1,1584.8M1787.1,1579.6000000000001L1781.9,1584.8M1809.3000000000002,1648.2L1814.5,1653.3999999999999M1814.5,1648.2L1809.3000000000002,1653.3999999999999M1881.8000000000002,1666.2L1887.0,1671.3999999999999M1887.0,1666.2L1881.8000000000002,1671.3999999999999M1736.2,1675.3000000000002L1741.3999999999999,1680.5M1741.3999999999999,1675.3000000000002L1736.2,1680.5M1513.4,1706.6000000000001L1518.6,1711.8M1518.6,1706.6000000000001L1513.4,1711.8M1643.6000000000001,1708.2L1648.8,1713.3999999999999M1648.8,1708.2L1643.6000000000001,1713.3999999999999M1802.7,1714.5L1807.8999999999999,1719.6999999999998M1807.8999999999999,1714.5L1802.7,1719.6999999999998M1715.3000000000002,1749.2L1720.5,1754.3999999999999M1720.5,1749.2L1715.3000000000002,1754.3999999999999M1444.8000000000002,1774.5L1450.0,1779.6999999999998M1450.0,1774.5L1444.8000000000002,1779.6999999999998M1542.6000000000001,1775.8000000000002L1547.8,1781.0M1547.8,1775.8000000000002L1542.6000000000001,1781.0M1615.2,1777.9L1620.3999999999999,1783.1M1620.3999999999999,1777.9L1615.2,1783.1" stroke="#808080" stroke-width="1.6" fill="none"/>
<polyline points="1526.2,655.5 1454.8,723.3 1407.1,781.7 1364.3,860.2 1317.5,960 1283.7,1025.5 1266.7,1077 1262.7,1106.8 1303.6,1325 1343.3,1495.7 1303.6,1491 1216.3,1462 1109,1436 1041.7,1426.3 1000,1426.3" fill="none" stroke="#0000ff" stroke-width="2" stroke-linecap="butt" stroke-linejoin="round"/>
<polyline points="1526.2,655.5 1554.3,670.5 1551.9,684.8 1451.2,772.1 1415.5,816.2 1346,960 1317.5,1020.3 1292.9,1060 1283,1097 1301.6,1176.3 1343.3,1396.5 1368.3,1507.6" fill="none" stroke="#0000ff" stroke-width="2" stroke-linecap="butt" stroke-linejoin="round"/>
<polyline points="1535.2,675.2 1420.2,781.7 1415.5,790 1331,960 1301.6,1019.5 1273.8,1087 1317.5,1289.4 1357,1497.7" fill="none" stroke="#0000ff" stroke-width="3" stroke-dasharray="7 8" stroke-linecap="butt" stroke-linejoin="round"/>
<polyline points="1000,1441.3 1099,1446 1238,1483.8 1349,1507.6" fill="none" stroke="#0000ff" stroke-width="3" stroke-dasharray="7 8" stroke-linecap="butt" stroke-linejoin="round"/>
<polyline points="1000.0,1458.0 1107.1,1464.0 1170.6,1477.9 1305,1521" fill="none" stroke="#ff0000" stroke-width="2" stroke-dasharray="22 14" stroke-linecap="butt" stroke-linejoin="round"/>
<polyline points="1004.0,1489.0 1111.1,1491.0 1206.3,1515.6 1300,1544.4" fill="none" stroke="#ff8000" stroke-width="4.5" stroke-dasharray="30 22" stroke-linecap="round" stroke-linejoin="round"/>
<polyline points="1000.0,1511.6 1091.3,1511.6 1178.6,1531.4 1300,1570.4" fill="none" stroke="#ff0000" stroke-width="2" stroke-dasharray="22 14" stroke-linecap="butt" stroke-linejoin="round"/>
<polyline points="1000.0,1521.5 1039.7,1519.5 1127.0,1523.5" fill="none" stroke="#808000" stroke-width="3" stroke-dasharray="7 7" stroke-linecap="butt" stroke-linejoin="round"/>
<line x1="1057.6" y1="1412.4" x2="1189.6" y2="1412.4" stroke="#000" stroke-width="2"/>
<circle cx="1101.6" cy="1412.4" r="17" fill="#fff" stroke="#000" stroke-width="2"/><path d="M1084.6,1412.4 A17,17 0 0 0 1118.6,1412.4 Z" fill="#000"/><line x1="1086.3" y1="1415.3" x2="1116.9" y2="1415.3" stroke="#777" stroke-width="0.7"/><line x1="1087.1" y1="1418.2" x2="1116.1" y2="1418.2" stroke="#777" stroke-width="0.7"/><line x1="1088.5" y1="1421.1" x2="1114.7" y2="1421.1" stroke="#777" stroke-width="0.7"/><line x1="1090.7" y1="1424.0" x2="1112.5" y2="1424.0" stroke="#777" stroke-width="0.7"/><line x1="1094.2" y1="1426.9" x2="1109.0" y2="1426.9" stroke="#777" stroke-width="0.7"/>
<text x="1079.1" y="1408.8000000000002" font-size="17.5" fill="#000" text-anchor="end">54</text>
<text x="1124.6" y="1408.8000000000002" font-size="17.5" fill="#000" text-anchor="start">+5.1</text>
<line x1="1101.6" y1="1429.4" x2="1101.6" y2="1447.4" stroke="#000" stroke-width="2"/>
<line x1="1087.8999999999999" y1="1447.4" x2="1115.3" y2="1447.4" stroke="#000" stroke-width="2"/>
<path d="M1087.6,1465.4 H1098.1 L1095.1,1447.9 H1091.6 Z" fill="#000"/><path d="M1114.6,1447.9 L1106.6,1465.4 M1110.8,1456.9 L1114.3,1465.4" stroke="#000" stroke-width="1.8" fill="none"/>
<text x="1074.8" y="1463.7" font-size="17.5" fill="#000" text-anchor="end">2.72</text>
<text x="1128.8999999999999" y="1463.7" font-size="17.5" fill="#000" text-anchor="start">+2.43</text>
<line x1="1236.2" y1="1400.5" x2="1368.2" y2="1400.5" stroke="#000" stroke-width="2"/>
<circle cx="1280.2" cy="1400.5" r="17" fill="#fff" stroke="#000" stroke-width="2"/><path d="M1263.2,1400.5 A17,17 0 0 0 1297.2,1400.5 Z" fill="#000"/><line x1="1264.9" y1="1403.4" x2="1295.5" y2="1403.4" stroke="#777" stroke-width="0.7"/><line x1="1265.7" y1="1406.3" x2="1294.7" y2="1406.3" stroke="#777" stroke-width="0.7"/><line x1="1267.1" y1="1409.2" x2="1293.3" y2="1409.2" stroke="#777" stroke-width="0.7"/><line x1="1269.3" y1="1412.1" x2="1291.1" y2="1412.1" stroke="#777" stroke-width="0.7"/><line x1="1272.8" y1="1415.0" x2="1287.6" y2="1415.0" stroke="#777" stroke-width="0.7"/>
<text x="1257.7" y="1396.9" font-size="17.5" fill="#000" text-anchor="end">50</text>
<text x="1303.2" y="1396.9" font-size="17.5" fill="#000" text-anchor="start">+5.0</text>
<line x1="1280.2" y1="1417.5" x2="1280.2" y2="1435.5" stroke="#000" stroke-width="2"/>
<line x1="1266.5" y1="1435.5" x2="1293.9" y2="1435.5" stroke="#000" stroke-width="2"/>
<text x="1253.4" y="1451.8" font-size="17.5" fill="#000" text-anchor="end">4.30</text>
<text x="1307.5" y="1451.8" font-size="17.5" fill="#000" text-anchor="start">+0.69</text>
<path d="M1091.8000000000002,979.1999999999999L1097.0,984.4M1097.0,979.1999999999999L1091.8000000000002,984.4M1210.1000000000001,995.1L1215.3,1000.3000000000001M1215.3,995.1L1210.1000000000001,1000.3000000000001M1433.1000000000001,981.1999999999999L1438.3,986.4M1438.3,981.1999999999999L1433.1000000000001,986.4M1351.4,999.1L1356.6,1004.3000000000001M1356.6,999.1L1351.4,1004.3000000000001M1021.1999999999999,1048.7L1026.3999999999999,1053.8999999999999M1026.3999999999999,1048.7L1021.1999999999999,1053.8999999999999M1129.5,1064.5L1134.6999999999998,1069.6999999999998M1134.6999999999998,1064.5L1129.5,1069.6999999999998M1362.9,1070.5L1368.1,1075.6999999999998M1368.1,1070.5L1362.9,1075.6999999999998M1203.0,1102.2L1208.1999999999998,1107.3999999999999M1208.1999999999998,1102.2L1203.0,1107.3999999999999M1448.6000000000001,1103.4L1453.8,1108.6M1453.8,1103.4L1448.6000000000001,1108.6M1074.8000000000002,1178.4L1080.0,1183.6M1080.0,1178.4L1074.8000000000002,1183.6M1165.7,1191.9L1170.8999999999999,1197.1M1170.8999999999999,1191.9L1165.7,1197.1M1217.2,1214.5L1222.3999999999999,1219.6999999999998M1222.3999999999999,1214.5L1217.2,1219.6999999999998M1381.5,1180.4L1386.6999999999998,1185.6M1386.6999999999998,1180.4L1381.5,1185.6M1466.8000000000002,1213.7L1472.0,1218.8999999999999M1472.0,1213.7L1466.8000000000002,1218.8999999999999M1035.1000000000001,1282.8000000000002L1040.3,1288.0M1040.3,1282.8000000000002L1035.1000000000001,1288.0M1124.4,1285.2L1129.6,1290.3999999999999M1129.6,1285.2L1124.4,1290.3999999999999M1227.6000000000001,1307.8000000000002L1232.8,1313.0M1232.8,1307.8000000000002L1227.6000000000001,1313.0M1398.6000000000001,1284.4L1403.8,1289.6M1403.8,1284.4L1398.6000000000001,1289.6M1488.3000000000002,1322.5L1493.5,1327.6999999999998M1493.5,1322.5L1488.3000000000002,1327.6999999999998M1054.1000000000001,1349.5L1059.3,1354.6999999999998M1059.3,1349.5L1054.1000000000001,1354.6999999999998M1163.3000000000002,1359.0L1168.5,1364.1999999999998M1168.5,1359.0L1163.3000000000002,1364.1999999999998M1416.8000000000002,1387.2L1422.0,1392.3999999999999M1422.0,1387.2L1416.8000000000002,1392.3999999999999M1280.7,1381.2L1285.8999999999999,1386.3999999999999M1285.8999999999999,1381.2L1280.7,1386.3999999999999M1435.5,1489.1000000000001L1440.6999999999998,1494.3M1440.6999999999998,1489.1000000000001L1435.5,1494.3" stroke="#808080" stroke-width="1.6" fill="none"/>
<path d="M1410.5,672.6L1415.6999999999998,677.8000000000001M1415.6999999999998,672.6L1410.5,677.8000000000001M1374.8000000000002,716.0L1380.0,721.2M1380.0,716.0L1374.8000000000002,721.2M1572.4,725.0L1577.6,730.2M1577.6,725.0L1572.4,730.2M1301.0,796.1999999999999L1306.1999999999998,801.4M1306.1999999999998,796.1999999999999L1301.0,801.4M1486.7,784.3L1491.8999999999999,789.5M1491.8999999999999,784.3L1486.7,789.5M1253.8000000000002,903.4L1259.0,908.6M1259.0,903.4L1253.8000000000002,908.6M1412.9,888.1L1418.1,893.3000000000001M1418.1,888.1L1412.9,893.3000000000001M1505.3000000000002,886.6999999999999L1510.5,891.9M1510.5,886.6999999999999L1505.3000000000002,891.9M1433.1000000000001,981.4L1438.3,986.6M1438.3,981.4L1433.1000000000001,986.6M1210.0,994.5L1215.1999999999998,999.7M1215.1999999999998,994.5L1210.0,999.7" stroke="#808080" stroke-width="1.6" fill="none"/>
<polyline points="693.3,1247.4 602.9,1554.5 607.6,1580.0" fill="none" stroke="#000080" stroke-width="2" stroke-linecap="butt" stroke-linejoin="round"/>
<polyline points="618.3,1391.4 761.2,1511.7" fill="none" stroke="#0000ff" stroke-width="2" stroke-linecap="butt" stroke-linejoin="round"/>
<polyline points="594.5,1427.1 641.0,1462.9 731.4,1526.0" fill="none" stroke="#0000ff" stroke-width="2" stroke-linecap="butt" stroke-linejoin="round"/>
<polyline points="610.0,1402.1 638.6,1426.0 666.0,1448.6 712.4,1489.0 760.0,1520.0 783.8,1521.2" fill="none" stroke="#0000ff" stroke-width="3" stroke-dasharray="7 8" stroke-linecap="butt" stroke-linejoin="round"/>
<path d="M705.2,1512.9 L711.2,1520.0 L748.1,1490.2 L742.1,1483.1 Z" fill="#fff" stroke="#000" stroke-width="2"/>
<circle cx="634.3" cy="1476.4" r="3.6" fill="none" stroke="#f00" stroke-width="1.6"/>
<circle cx="645.0" cy="1477.6" r="3.6" fill="none" stroke="#f00" stroke-width="1.6"/>
<circle cx="654.0" cy="1481.4" r="3.6" fill="none" stroke="#f00" stroke-width="1.6"/>
<polyline points="816.0,1331.9 794.5,1376.0 773.1,1451.0 782.6,1454.5" fill="none" stroke="#0000ff" stroke-width="2" stroke-linecap="butt" stroke-linejoin="round"/>
<polyline points="818.3,1336.7 779.0,1443.8" fill="none" stroke="#0000ff" stroke-width="3" stroke-dasharray="7 8" stroke-linecap="butt" stroke-linejoin="round"/>
<polyline points="866.0,1229.5 788.6,1429.5 787.4,1455.7 789.8,1483.1" fill="none" stroke="#ff0000" stroke-width="2" stroke-dasharray="22 14" stroke-linecap="butt" stroke-linejoin="round"/>
<polyline points="880.2,1234.3 829.0,1362.9 820.7,1386.7 811.2,1415.2 808.8,1460.5" fill="none" stroke="#ff8000" stroke-width="4.5" stroke-dasharray="30 22" stroke-linecap="round" stroke-linejoin="round"/>
<polyline points="893.3,1241.4 836.2,1381.9 825.5,1441.4 830.2,1458.1" fill="none" stroke="#ff0000" stroke-width="2" stroke-dasharray="22 14" stroke-linecap="butt" stroke-linejoin="round"/>
<polyline points="904.0,1243.8 862.4,1334.3 842.1,1410.5 846.9,1472.4" fill="none" stroke="#0000ff" stroke-width="3" stroke-dasharray="7 8" stroke-linecap="butt" stroke-linejoin="round"/>
<polyline points="910.0,1247.4 861.2,1355.7 846.9,1415.2 857.6,1462.9 864.8,1456.9 925.5,1435.5 991.0,1426.0" fill="none" stroke="#0000ff" stroke-width="2" stroke-linecap="butt" stroke-linejoin="round"/>
<polyline points="848.1,1481.9 936.2,1445.0 991.0,1440.2" fill="none" stroke="#0000ff" stroke-width="3" stroke-dasharray="7 8" stroke-linecap="butt" stroke-linejoin="round"/>
<polyline points="558,1642 794.4,1532.8 838.4,1510.8 940,1470 1000.5,1458.1" fill="none" stroke="#ff0000" stroke-width="2" stroke-dasharray="22 14" stroke-linecap="butt" stroke-linejoin="round"/>
<polyline points="540,1673.8 845,1534.4 903.6,1510.8 940,1497.7 950.5,1493.8 986.2,1491.4" fill="none" stroke="#ff8000" stroke-width="4.5" stroke-dasharray="30 22" stroke-linecap="round" stroke-linejoin="round"/>
<polyline points="540,1696.7 838.4,1554.8 940,1522.2 1000.5,1510.5" fill="none" stroke="#ff0000" stroke-width="2" stroke-dasharray="22 14" stroke-linecap="butt" stroke-linejoin="round"/>
<polyline points="867.8,1558 940,1533.6 979.0,1522.4" fill="none" stroke="#808000" stroke-width="3" stroke-dasharray="7 7" stroke-linecap="butt" stroke-linejoin="round"/>
<polyline points="845.7,1486.7 793.3,1521.2" fill="none" stroke="#000080" stroke-width="2" stroke-linecap="butt" stroke-linejoin="round"/>
<polyline points="769.5,1474.8 782.6,1473.6 775.5,1512.9 792.1,1511.0" fill="none" stroke="#0000ff" stroke-width="2" stroke-linecap="butt" stroke-linejoin="round"/>
<polyline points="761.2,1511.7 769.5,1474.8" fill="none" stroke="#0000ff" stroke-width="2" stroke-linecap="butt" stroke-linejoin="round"/>
<polyline points="662.4,1580.0 743.3,1529.5" fill="none" stroke="#0000ff" stroke-width="3" stroke-dasharray="7 8" stroke-linecap="butt" stroke-linejoin="round"/>
<polyline points="641.0,1577.1 696.9,1551.0 730.2,1536.7" fill="none" stroke="#008000" stroke-width="2" stroke-linecap="butt" stroke-linejoin="round"/>
<path d="M703.8,1551.0 A5.8,5.8 0 0 1 698.5,1560.1 A5.8,5.8 0 0 1 688.0,1560.1 A5.8,5.8 0 0 1 682.8,1551.0 A5.8,5.8 0 0 1 688.0,1541.9 A5.8,5.8 0 0 1 698.5,1541.9 A5.8,5.8 0 0 1 703.8,1551.0 Z" fill="#fff" stroke="#008000" stroke-width="1.8"/><circle cx="693.3" cy="1551.0" r="0.8" fill="#008000"/>
<path d="M644.3,1574.8 A5.8,5.8 0 0 1 639.0,1583.9 A5.8,5.8 0 0 1 628.5,1583.9 A5.8,5.8 0 0 1 623.3,1574.8 A5.8,5.8 0 0 1 628.5,1565.7 A5.8,5.8 0 0 1 639.0,1565.7 A5.8,5.8 0 0 1 644.3,1574.8 Z" fill="#fff" stroke="#008000" stroke-width="1.8"/><circle cx="633.8" cy="1574.8" r="0.8" fill="#008000"/>
<path d="M606.8,1559.6 L622.8,1575.6 M622.8,1559.6 L606.8,1575.6" stroke="#ff8000" stroke-width="2.5"/><circle cx="614.8" cy="1567.6" r="4.2" fill="#ff8000"/>
<line x1="639.3" y1="1397.4" x2="771.3" y2="1397.4" stroke="#000" stroke-width="2"/>
<circle cx="683.3" cy="1397.4" r="17" fill="#fff" stroke="#000" stroke-width="2"/>
<text x="660.8" y="1393.8000000000002" font-size="17.5" fill="#000" text-anchor="end">20</text>
<text x="706.3" y="1393.8000000000002" font-size="17.5" fill="#000" text-anchor="start">+6.7</text>
<line x1="683.3" y1="1414.4" x2="683.3" y2="1432.4" stroke="#000" stroke-width="2"/>
<line x1="669.5999999999999" y1="1432.4" x2="697.0" y2="1432.4" stroke="#000" stroke-width="2"/>
<path d="M669.3,1450.4 H679.8 L676.8,1432.9 H673.3 Z" fill="#000"/><path d="M696.3,1432.9 L688.3,1450.4 M692.5,1441.9 L696.0,1450.4" stroke="#000" stroke-width="1.8" fill="none"/>
<text x="656.5" y="1448.7" font-size="17.5" fill="#000" text-anchor="end">2.10</text>
<text x="710.5999999999999" y="1448.7" font-size="17.5" fill="#000" text-anchor="start">+4.57</text>
<line x1="739.1" y1="1486.7" x2="871.1" y2="1486.7" stroke="#000" stroke-width="2"/>
<circle cx="783.1" cy="1486.7" r="17" fill="#fff" stroke="#000" stroke-width="2"/>
<text x="760.6" y="1483.1000000000001" font-size="17.5" fill="#000" text-anchor="end">19</text>
<text x="806.1" y="1483.1000000000001" font-size="17.5" fill="#000" text-anchor="start">+6.4</text>
<line x1="783.1" y1="1503.7" x2="783.1" y2="1521.7" stroke="#000" stroke-width="2"/>
<line x1="769.4" y1="1521.7" x2="796.8000000000001" y2="1521.7" stroke="#000" stroke-width="2"/>
<path d="M769.1,1539.7 H779.6 L776.6,1522.2 H773.1 Z" fill="#000"/><path d="M796.1,1522.2 L788.1,1539.7 M792.3000000000001,1531.2 L795.8000000000001,1539.7" stroke="#000" stroke-width="1.8" fill="none"/>
<text x="756.3000000000001" y="1538.0" font-size="17.5" fill="#000" text-anchor="end">2.50</text>
<text x="810.4" y="1538.0" font-size="17.5" fill="#000" text-anchor="start">+3.87</text>
<line x1="881.0" y1="1417.6" x2="1013.0" y2="1417.6" stroke="#000" stroke-width="2"/>
<circle cx="925.0" cy="1417.6" r="17" fill="#fff" stroke="#000" stroke-width="2"/><path d="M908.0,1417.6 A17,17 0 0 0 942.0,1417.6 Z" fill="#000"/><line x1="909.7" y1="1420.5" x2="940.3" y2="1420.5" stroke="#777" stroke-width="0.7"/><line x1="910.5" y1="1423.4" x2="939.5" y2="1423.4" stroke="#777" stroke-width="0.7"/><line x1="911.9" y1="1426.3" x2="938.1" y2="1426.3" stroke="#777" stroke-width="0.7"/><line x1="914.1" y1="1429.2" x2="935.9" y2="1429.2" stroke="#777" stroke-width="0.7"/><line x1="917.6" y1="1432.1" x2="932.4" y2="1432.1" stroke="#777" stroke-width="0.7"/>
<text x="902.5" y="1414.0" font-size="17.5" fill="#000" text-anchor="end">56</text>
<text x="948.0" y="1414.0" font-size="17.5" fill="#000" text-anchor="start">+5.7</text>
<line x1="925.0" y1="1434.6" x2="925.0" y2="1452.6" stroke="#000" stroke-width="2"/>
<line x1="911.3" y1="1452.6" x2="938.7" y2="1452.6" stroke="#000" stroke-width="2"/>
<path d="M911.0,1470.6 H921.5 L918.5,1453.1 H915.0 Z" fill="#000"/><path d="M938.0,1453.1 L930.0,1470.6 M934.2,1462.1 L937.7,1470.6" stroke="#000" stroke-width="1.8" fill="none"/>
<text x="898.2" y="1468.8999999999999" font-size="17.5" fill="#000" text-anchor="end">4.32</text>
<text x="952.3" y="1468.8999999999999" font-size="17.5" fill="#000" text-anchor="start">+1.38</text>
<path d="M931.6999999999999,1267.4L936.9,1272.6M936.9,1267.4L931.6999999999999,1272.6M1034.8000000000002,1282.4L1040.0,1287.6M1040.0,1282.4L1034.8000000000002,1287.6M742.6,1336.4L747.8000000000001,1341.6M747.8000000000001,1336.4L742.6,1341.6M941.9,1354.3000000000002L947.1,1359.5M947.1,1354.3000000000002L941.9,1359.5M896.1999999999999,1361.0L901.4,1366.1999999999998M901.4,1361.0L896.1999999999999,1366.1999999999998M1053.8000000000002,1350.0L1059.0,1355.1999999999998M1059.0,1350.0L1053.8000000000002,1355.1999999999998M672.9,1384.8000000000002L678.1,1390.0M678.1,1384.8000000000002L672.9,1390.0M733.6,1437.6000000000001L738.8000000000001,1442.8M738.8000000000001,1437.6000000000001L733.6,1442.8M594.8,1445.3000000000002L600.0,1450.5M600.0,1445.3000000000002L594.8,1450.5M651.9,1510.7L657.1,1515.8999999999999M657.1,1510.7L651.9,1515.8999999999999M606.1999999999999,1531.7L611.4,1536.8999999999999M611.4,1531.7L606.1999999999999,1536.8999999999999M815.0,1568.6000000000001L820.2,1573.8M820.2,1568.6000000000001L815.0,1573.8" stroke="#808080" stroke-width="1.6" fill="none"/>
<clipPath id="hb1"><path d="M376.8,1408.0 L389.1,1406.3 L390.8,1415.1 L408.3,1414.0 L418.9,1469.4 L387.3,1474.6 Z"/></clipPath><path d="M376.8,1406.3 L308.50000000000006,1474.6 M384.8,1406.3 L316.50000000000006,1474.6 M392.8,1406.3 L324.50000000000006,1474.6 M400.8,1406.3 L332.50000000000006,1474.6 M408.8,1406.3 L340.50000000000006,1474.6 M416.8,1406.3 L348.50000000000006,1474.6 M424.8,1406.3 L356.50000000000006,1474.6 M432.8,1406.3 L364.50000000000006,1474.6 M440.8,1406.3 L372.50000000000006,1474.6 M448.8,1406.3 L380.50000000000006,1474.6 M456.8,1406.3 L388.50000000000006,1474.6 M464.8,1406.3 L396.50000000000006,1474.6 M472.8,1406.3 L404.50000000000006,1474.6 M480.8,1406.3 L412.50000000000006,1474.6 M488.8,1406.3 L420.50000000000006,1474.6" stroke="#208c8c" stroke-width="1.5" clip-path="url(#hb1)"/>
<path d="M376.8,1408.0 L389.1,1406.3 L390.8,1415.1 L408.3,1414.0 L418.9,1469.4 L387.3,1474.6 Z" fill="none" stroke="#208c8c" stroke-width="3"/>
<clipPath id="hb2"><path d="M227.8,1544.7 L252.4,1539.5 L262.2,1586.8 L237.6,1591.4 Z"/></clipPath><path d="M227.8,1539.5 L175.89999999999992,1591.4 M235.8,1539.5 L183.89999999999992,1591.4 M243.8,1539.5 L191.89999999999992,1591.4 M251.8,1539.5 L199.89999999999992,1591.4 M259.8,1539.5 L207.89999999999992,1591.4 M267.8,1539.5 L215.89999999999992,1591.4 M275.8,1539.5 L223.89999999999992,1591.4 M283.8,1539.5 L231.89999999999992,1591.4 M291.8,1539.5 L239.89999999999992,1591.4 M299.8,1539.5 L247.89999999999992,1591.4 M307.8,1539.5 L255.89999999999992,1591.4 M315.8,1539.5 L263.8999999999999,1591.4" stroke="#208c8c" stroke-width="1.5" clip-path="url(#hb2)"/>
<path d="M227.8,1544.7 L252.4,1539.5 L262.2,1586.8 L237.6,1591.4 Z" fill="none" stroke="#208c8c" stroke-width="3"/>
<clipPath id="hb3"><path d="M124.4,1639.4 L193.8,1629.6 L193.8,1614.8 L253.1,1607.1 L259.4,1658.0 L171.7,1670.2 L173.5,1693.0 L134.2,1697.2 Z"/></clipPath><path d="M124.4,1607.1 L34.29999999999987,1697.2 M133.4,1607.1 L43.29999999999987,1697.2 M142.4,1607.1 L52.29999999999987,1697.2 M151.4,1607.1 L61.29999999999987,1697.2 M160.4,1607.1 L70.29999999999987,1697.2 M169.4,1607.1 L79.29999999999987,1697.2 M178.4,1607.1 L88.29999999999987,1697.2 M187.4,1607.1 L97.29999999999987,1697.2 M196.4,1607.1 L106.29999999999987,1697.2 M205.4,1607.1 L115.29999999999987,1697.2 M214.4,1607.1 L124.29999999999987,1697.2 M223.4,1607.1 L133.29999999999987,1697.2 M232.4,1607.1 L142.29999999999987,1697.2 M241.4,1607.1 L151.29999999999987,1697.2 M250.4,1607.1 L160.29999999999987,1697.2 M259.4,1607.1 L169.29999999999984,1697.2 M268.4,1607.1 L178.29999999999984,1697.2 M277.4,1607.1 L187.29999999999984,1697.2 M286.4,1607.1 L196.29999999999984,1697.2 M295.4,1607.1 L205.29999999999984,1697.2 M304.4,1607.1 L214.29999999999984,1697.2 M313.4,1607.1 L223.29999999999984,1697.2 M322.4,1607.1 L232.29999999999984,1697.2 M331.4,1607.1 L241.29999999999984,1697.2 M340.4,1607.1 L250.29999999999984,1697.2 M349.4,1607.1 L259.29999999999984,1697.2 M358.4,1607.1 L268.29999999999984,1697.2" stroke="#208c8c" stroke-width="1.5" clip-path="url(#hb3)"/>
<path d="M124.4,1639.4 L193.8,1629.6 L193.8,1614.8 L253.1,1607.1 L259.4,1658.0 L171.7,1670.2 L173.5,1693.0 L134.2,1697.2 Z" fill="none" stroke="#208c8c" stroke-width="3.2"/>
<clipPath id="hb4"><path d="M508.2,1445.5 L546.8,1414.0 L598.3,1474.6 L559.8,1504.4 Z"/></clipPath><path d="M417.7999999999999,1414.0 L508.2,1504.4 M426.79999999999995,1414.0 L517.2,1504.4 M435.79999999999995,1414.0 L526.2,1504.4 M444.79999999999995,1414.0 L535.2,1504.4 M453.79999999999995,1414.0 L544.2,1504.4 M462.79999999999995,1414.0 L553.2,1504.4 M471.79999999999995,1414.0 L562.2,1504.4 M480.79999999999995,1414.0 L571.2,1504.4 M489.79999999999995,1414.0 L580.2,1504.4 M498.79999999999995,1414.0 L589.2,1504.4 M507.79999999999995,1414.0 L598.2,1504.4 M516.8,1414.0 L607.2,1504.4 M525.8,1414.0 L616.2,1504.4 M534.8,1414.0 L625.2,1504.4 M543.8,1414.0 L634.2,1504.4 M552.8,1414.0 L643.2,1504.4 M561.8,1414.0 L652.2,1504.4 M570.8,1414.0 L661.2,1504.4 M579.8,1414.0 L670.2,1504.4 M588.8,1414.0 L679.2,1504.4 M597.8,1414.0 L688.2,1504.4 M606.8,1414.0 L697.2,1504.4" stroke="#1e90d0" stroke-width="1.5" clip-path="url(#hb4)"/>
<path d="M508.2,1445.5 L546.8,1414.0 L598.3,1474.6 L559.8,1504.4 Z" fill="none" stroke="#1e90d0" stroke-width="3.2"/>
<clipPath id="hb5"><path d="M340.0,1579.8 L376.1,1572.8 L379.6,1593.8 L414.7,1588.6 L418.2,1606.1 L444.4,1601.5 L452.2,1642.9 L356.8,1662.2 Z"/></clipPath><path d="M250.5999999999999,1572.8 L340.0,1662.2 M259.5999999999999,1572.8 L349.0,1662.2 M268.5999999999999,1572.8 L358.0,1662.2 M277.5999999999999,1572.8 L367.0,1662.2 M286.5999999999999,1572.8 L376.0,1662.2 M295.5999999999999,1572.8 L385.0,1662.2 M304.5999999999999,1572.8 L394.0,1662.2 M313.5999999999999,1572.8 L403.0,1662.2 M322.5999999999999,1572.8 L412.0,1662.2 M331.5999999999999,1572.8 L421.0,1662.2 M340.5999999999999,1572.8 L430.0,1662.2 M349.5999999999999,1572.8 L439.0,1662.2 M358.5999999999999,1572.8 L448.0,1662.2 M367.5999999999999,1572.8 L457.0,1662.2 M376.5999999999999,1572.8 L466.0,1662.2 M385.5999999999999,1572.8 L475.0,1662.2 M394.5999999999999,1572.8 L484.0,1662.2 M403.5999999999999,1572.8 L493.0,1662.2 M412.5999999999999,1572.8 L502.0,1662.2 M421.5999999999999,1572.8 L511.0,1662.2 M430.5999999999999,1572.8 L520.0,1662.2 M439.5999999999999,1572.8 L529.0,1662.2 M448.5999999999999,1572.8 L538.0,1662.2 M457.5999999999999,1572.8 L547.0,1662.2" stroke="#1e90d0" stroke-width="1.5" clip-path="url(#hb5)"/>
<path d="M340.0,1579.8 L376.1,1572.8 L379.6,1593.8 L414.7,1588.6 L418.2,1606.1 L444.4,1601.5 L452.2,1642.9 L356.8,1662.2 Z" fill="none" stroke="#1e90d0" stroke-width="3.2"/>
<polyline points="31.5,1720.0 87.6,1628.9 133.2,1593.8 171.7,1572.8" fill="none" stroke="#1e90d0" stroke-width="1.6" stroke-dasharray="10 4 2 4" stroke-linecap="butt" stroke-linejoin="round"/>
<polyline points="73.6,1709.5 87.6,1667.4 105.2,1646.4 150.7,1625.4" fill="none" stroke="#1e90d0" stroke-width="1.6" stroke-dasharray="10 4 2 4" stroke-linecap="butt" stroke-linejoin="round"/>
<polyline points="485.5,1481.6 567.8,1527.2 588.9,1611.3 585.3,1628.9" fill="none" stroke="#1e90d0" stroke-width="1.6" stroke-dasharray="10 4 2 4" stroke-linecap="butt" stroke-linejoin="round"/>
<polyline points="513.5,1462.4 560.8,1506.2 595.9,1586.8 620.0,1611.3" fill="none" stroke="#1e90d0" stroke-width="1.6" stroke-dasharray="10 4 2 4" stroke-linecap="butt" stroke-linejoin="round"/>
<polyline points="45.6,1724.5 189.3,1706.0 389.1,1684.9 508.2,1656.9 560.8,1639.4" fill="none" stroke="#ff0000" stroke-width="2" stroke-dasharray="22 14" stroke-linecap="butt" stroke-linejoin="round"/>
<polyline points="105.2,1736.8 245.4,1727.0 343.5,1715.8 403.1,1702.5 490.7,1684.9 518.8,1679.7" fill="none" stroke="#ff8000" stroke-width="4.5" stroke-dasharray="30 22" stroke-linecap="round" stroke-linejoin="round"/>
<polyline points="59.6,1768.4 147.2,1756.8 266.4,1749.8 350.5,1741.0 490.7,1716.5 536.3,1699.0" fill="none" stroke="#ff0000" stroke-width="2" stroke-dasharray="22 14" stroke-linecap="butt" stroke-linejoin="round"/>
<polyline points="80.6,1775.0 406.6,1741.0 620.0,1716.5" fill="none" stroke="#000080" stroke-width="2" stroke-linecap="butt" stroke-linejoin="round"/>
<polyline points="378.5,1813.6 508.2,1767.3 644.8,1719.4" fill="none" stroke="#000080" stroke-width="2" stroke-linecap="butt" stroke-linejoin="round"/>
<polyline points="122.7,1703.2 140.2,1699.7 182.3,1697.9 236.6,1695.5 278.7,1692.7 321.8,1688.4 390.8,1677.9 473.2,1658.7 536.3,1639.4 567.8,1615.5 574.8,1597.3 562.6,1576.3 548.5,1553.5" fill="none" stroke="#008000" stroke-width="2" stroke-linecap="butt" stroke-linejoin="round"/>
<path d="M150.7,1699.7 A5.8,5.8 0 0 1 145.4,1708.8 A5.8,5.8 0 0 1 134.9,1708.8 A5.8,5.8 0 0 1 129.7,1699.7 A5.8,5.8 0 0 1 134.9,1690.6 A5.8,5.8 0 0 1 145.4,1690.6 A5.8,5.8 0 0 1 150.7,1699.7 Z" fill="#fff" stroke="#008000" stroke-width="1.8"/><circle cx="140.2" cy="1699.7" r="0.8" fill="#008000"/>
<path d="M192.8,1697.9 A5.8,5.8 0 0 1 187.6,1707.0 A5.8,5.8 0 0 1 177.1,1707.0 A5.8,5.8 0 0 1 171.8,1697.9 A5.8,5.8 0 0 1 177.1,1688.8 A5.8,5.8 0 0 1 187.6,1688.8 A5.8,5.8 0 0 1 192.8,1697.9 Z" fill="#fff" stroke="#008000" stroke-width="1.8"/><circle cx="182.3" cy="1697.9" r="0.8" fill="#008000"/>
<path d="M247.1,1695.5 A5.8,5.8 0 0 1 241.8,1704.6 A5.8,5.8 0 0 1 231.3,1704.6 A5.8,5.8 0 0 1 226.1,1695.5 A5.8,5.8 0 0 1 231.3,1686.4 A5.8,5.8 0 0 1 241.8,1686.4 A5.8,5.8 0 0 1 247.1,1695.5 Z" fill="#fff" stroke="#008000" stroke-width="1.8"/><circle cx="236.6" cy="1695.5" r="0.8" fill="#008000"/>
<path d="M289.2,1692.7 A5.8,5.8 0 0 1 283.9,1701.8 A5.8,5.8 0 0 1 273.4,1701.8 A5.8,5.8 0 0 1 268.2,1692.7 A5.8,5.8 0 0 1 273.4,1683.6 A5.8,5.8 0 0 1 283.9,1683.6 A5.8,5.8 0 0 1 289.2,1692.7 Z" fill="#fff" stroke="#008000" stroke-width="1.8"/><circle cx="278.7" cy="1692.7" r="0.8" fill="#008000"/>
<path d="M332.3,1688.4 A5.8,5.8 0 0 1 327.1,1697.5 A5.8,5.8 0 0 1 316.6,1697.5 A5.8,5.8 0 0 1 311.3,1688.4 A5.8,5.8 0 0 1 316.6,1679.3 A5.8,5.8 0 0 1 327.1,1679.3 A5.8,5.8 0 0 1 332.3,1688.4 Z" fill="#fff" stroke="#008000" stroke-width="1.8"/><circle cx="321.8" cy="1688.4" r="0.8" fill="#008000"/>
<path d="M401.3,1677.9 A5.8,5.8 0 0 1 396.1,1687.0 A5.8,5.8 0 0 1 385.6,1687.0 A5.8,5.8 0 0 1 380.3,1677.9 A5.8,5.8 0 0 1 385.6,1668.8 A5.8,5.8 0 0 1 396.1,1668.8 A5.8,5.8 0 0 1 401.3,1677.9 Z" fill="#fff" stroke="#008000" stroke-width="1.8"/><circle cx="390.8" cy="1677.9" r="0.8" fill="#008000"/>
<path d="M483.7,1658.7 A5.8,5.8 0 0 1 478.4,1667.8 A5.8,5.8 0 0 1 467.9,1667.8 A5.8,5.8 0 0 1 462.7,1658.7 A5.8,5.8 0 0 1 467.9,1649.6 A5.8,5.8 0 0 1 478.4,1649.6 A5.8,5.8 0 0 1 483.7,1658.7 Z" fill="#fff" stroke="#008000" stroke-width="1.8"/><circle cx="473.2" cy="1658.7" r="0.8" fill="#008000"/>
<path d="M546.8,1639.4 A5.8,5.8 0 0 1 541.5,1648.5 A5.8,5.8 0 0 1 531.0,1648.5 A5.8,5.8 0 0 1 525.8,1639.4 A5.8,5.8 0 0 1 531.0,1630.3 A5.8,5.8 0 0 1 541.5,1630.3 A5.8,5.8 0 0 1 546.8,1639.4 Z" fill="#fff" stroke="#008000" stroke-width="1.8"/><circle cx="536.3" cy="1639.4" r="0.8" fill="#008000"/>
<path d="M578.3,1615.5 A5.8,5.8 0 0 1 573.0,1624.6 A5.8,5.8 0 0 1 562.5,1624.6 A5.8,5.8 0 0 1 557.3,1615.5 A5.8,5.8 0 0 1 562.5,1606.4 A5.8,5.8 0 0 1 573.0,1606.4 A5.8,5.8 0 0 1 578.3,1615.5 Z" fill="#fff" stroke="#008000" stroke-width="1.8"/><circle cx="567.8" cy="1615.5" r="0.8" fill="#008000"/>
<path d="M573.1,1576.3 A5.8,5.8 0 0 1 567.9,1585.4 A5.8,5.8 0 0 1 557.4,1585.4 A5.8,5.8 0 0 1 552.1,1576.3 A5.8,5.8 0 0 1 557.4,1567.2 A5.8,5.8 0 0 1 567.9,1567.2 A5.8,5.8 0 0 1 573.1,1576.3 Z" fill="#fff" stroke="#008000" stroke-width="1.8"/><circle cx="562.6" cy="1576.3" r="0.8" fill="#008000"/>
<path d="M86.6,1796.1 L102.6,1812.1 M102.6,1796.1 L86.6,1812.1" stroke="#ff8000" stroke-width="2.5"/><circle cx="94.6" cy="1804.1" r="4.2" fill="#ff8000"/>
<line x1="21.5" y1="1637.6" x2="153.5" y2="1637.6" stroke="#000" stroke-width="2"/>
<circle cx="65.5" cy="1637.6" r="17" fill="#fff" stroke="#000" stroke-width="2"/><path d="M48.5,1637.6 A17,17 0 0 0 82.5,1637.6 Z" fill="#000"/><line x1="50.2" y1="1640.5" x2="80.8" y2="1640.5" stroke="#777" stroke-width="0.7"/><line x1="51.0" y1="1643.4" x2="80.0" y2="1643.4" stroke="#777" stroke-width="0.7"/><line x1="52.4" y1="1646.3" x2="78.6" y2="1646.3" stroke="#777" stroke-width="0.7"/><line x1="54.6" y1="1649.2" x2="76.4" y2="1649.2" stroke="#777" stroke-width="0.7"/><line x1="58.1" y1="1652.1" x2="72.9" y2="1652.1" stroke="#777" stroke-width="0.7"/>
<text x="43.0" y="1634.0" font-size="17.5" fill="#000" text-anchor="end">64</text>
<text x="88.5" y="1634.0" font-size="17.5" fill="#000" text-anchor="start">+8.7</text>
<line x1="65.5" y1="1654.6" x2="65.5" y2="1672.6" stroke="#000" stroke-width="2"/>
<line x1="51.8" y1="1672.6" x2="79.2" y2="1672.6" stroke="#000" stroke-width="2"/>
<text x="38.7" y="1688.8999999999999" font-size="17.5" fill="#000" text-anchor="end">1.45</text>
<text x="92.8" y="1688.8999999999999" font-size="17.5" fill="#000" text-anchor="start">+7.24</text>
<line x1="262.0" y1="1576.3" x2="394.0" y2="1576.3" stroke="#000" stroke-width="2"/>
<circle cx="306.0" cy="1576.3" r="17" fill="#fff" stroke="#000" stroke-width="2"/>
<text x="283.5" y="1572.7" font-size="17.5" fill="#000" text-anchor="end">3</text>
<text x="329.0" y="1572.7" font-size="17.5" fill="#000" text-anchor="start">+8.5</text>
<line x1="306.0" y1="1593.3" x2="306.0" y2="1611.3" stroke="#000" stroke-width="2"/>
<line x1="292.3" y1="1611.3" x2="319.7" y2="1611.3" stroke="#000" stroke-width="2"/>
<path d="M292.0,1629.3 H302.5 L299.5,1611.8 H296.0 Z" fill="#000"/><path d="M319.0,1611.8 L311.0,1629.3 M315.2,1620.8 L318.7,1629.3" stroke="#000" stroke-width="1.8" fill="none"/>
<text x="279.2" y="1627.6" font-size="17.5" fill="#000" text-anchor="end">3.60</text>
<text x="333.3" y="1627.6" font-size="17.5" fill="#000" text-anchor="start">+4.88</text>
<line x1="460.7" y1="1498.1" x2="592.7" y2="1498.1" stroke="#000" stroke-width="2"/>
<circle cx="504.7" cy="1498.1" r="17" fill="#fff" stroke="#000" stroke-width="2"/>
<text x="482.2" y="1494.5" font-size="17.5" fill="#000" text-anchor="end">22</text>
<text x="527.7" y="1494.5" font-size="17.5" fill="#000" text-anchor="start">+7.9</text>
<line x1="504.7" y1="1515.1" x2="504.7" y2="1533.1" stroke="#000" stroke-width="2"/>
<line x1="491.0" y1="1533.1" x2="518.4" y2="1533.1" stroke="#000" stroke-width="2"/>
<path d="M490.7,1551.1 H501.2 L498.2,1533.6 H494.7 Z" fill="#000"/><path d="M517.7,1533.6 L509.7,1551.1 M513.9,1542.6 L517.4,1551.1" stroke="#000" stroke-width="1.8" fill="none"/>
<text x="477.9" y="1549.3999999999999" font-size="17.5" fill="#000" text-anchor="end">2.90</text>
<text x="532.0" y="1549.3999999999999" font-size="17.5" fill="#000" text-anchor="start">+4.99</text>
<line x1="451.3" y1="1611.3" x2="583.3" y2="1611.3" stroke="#000" stroke-width="2"/>
<circle cx="495.3" cy="1611.3" r="17" fill="#fff" stroke="#000" stroke-width="2"/><path d="M478.3,1611.3 A17,17 0 0 0 512.3,1611.3 Z" fill="#000"/><line x1="480.0" y1="1614.2" x2="510.6" y2="1614.2" stroke="#777" stroke-width="0.7"/><line x1="480.8" y1="1617.1" x2="509.8" y2="1617.1" stroke="#777" stroke-width="0.7"/><line x1="482.2" y1="1620.0" x2="508.4" y2="1620.0" stroke="#777" stroke-width="0.7"/><line x1="484.4" y1="1622.9" x2="506.2" y2="1622.9" stroke="#777" stroke-width="0.7"/><line x1="487.9" y1="1625.8" x2="502.7" y2="1625.8" stroke="#777" stroke-width="0.7"/>
<text x="472.8" y="1607.7" font-size="17.5" fill="#000" text-anchor="end">60</text>
<text x="518.3" y="1607.7" font-size="17.5" fill="#000" text-anchor="start">+7.9</text>
<line x1="495.3" y1="1628.3" x2="495.3" y2="1646.3" stroke="#000" stroke-width="2"/>
<line x1="481.6" y1="1646.3" x2="509.0" y2="1646.3" stroke="#000" stroke-width="2"/>
<text x="468.5" y="1662.6" font-size="17.5" fill="#000" text-anchor="end">1.27</text>
<text x="522.6" y="1662.6" font-size="17.5" fill="#000" text-anchor="start">+6.60</text>
<line x1="391.3" y1="1725.3" x2="523.3" y2="1725.3" stroke="#000" stroke-width="2"/>
<circle cx="435.3" cy="1725.3" r="17" fill="#fff" stroke="#000" stroke-width="2"/>
<text x="412.8" y="1721.7" font-size="17.5" fill="#000" text-anchor="end">90</text>
<text x="458.3" y="1721.7" font-size="17.5" fill="#000" text-anchor="start">+7.4</text>
<line x1="435.3" y1="1742.3" x2="435.3" y2="1760.3" stroke="#000" stroke-width="2"/>
<line x1="421.6" y1="1760.3" x2="449.0" y2="1760.3" stroke="#000" stroke-width="2"/>
<path d="M421.3,1778.3 H431.8 L428.8,1760.8 H425.3 Z" fill="#000"/><path d="M448.3,1760.8 L440.3,1778.3 M444.5,1769.8 L448.0,1778.3" stroke="#000" stroke-width="1.8" fill="none"/>
<text x="408.5" y="1776.6" font-size="17.5" fill="#000" text-anchor="end">3.50</text>
<text x="462.6" y="1776.6" font-size="17.5" fill="#000" text-anchor="start">+3.94</text>
<line x1="241.0" y1="1772.6" x2="373.0" y2="1772.6" stroke="#000" stroke-width="2"/>
<circle cx="285.0" cy="1772.6" r="17" fill="#fff" stroke="#000" stroke-width="2"/>
<text x="262.5" y="1769.0" font-size="17.5" fill="#000" text-anchor="end">93</text>
<text x="308.0" y="1769.0" font-size="17.5" fill="#000" text-anchor="start">+7.2</text>
<line x1="285.0" y1="1789.6" x2="285.0" y2="1807.6" stroke="#000" stroke-width="2"/>
<line x1="271.3" y1="1807.6" x2="298.7" y2="1807.6" stroke="#000" stroke-width="2"/>
<path d="M271.0,1825.6 H281.5 L278.5,1808.1 H275.0 Z" fill="#000"/><path d="M298.0,1808.1 L290.0,1825.6 M294.2,1817.1 L297.7,1825.6" stroke="#000" stroke-width="1.8" fill="none"/>
<text x="258.2" y="1823.8999999999999" font-size="17.5" fill="#000" text-anchor="end">2.90</text>
<text x="312.3" y="1823.8999999999999" font-size="17.5" fill="#000" text-anchor="start">+4.31</text>
<line x1="356.6" y1="1807.6" x2="488.6" y2="1807.6" stroke="#000" stroke-width="2"/>
<circle cx="400.6" cy="1807.6" r="17" fill="#fff" stroke="#000" stroke-width="2"/><path d="M383.6,1807.6 A17,17 0 0 0 417.6,1807.6 Z" fill="#000"/><line x1="385.3" y1="1810.5" x2="415.9" y2="1810.5" stroke="#777" stroke-width="0.7"/><line x1="386.1" y1="1813.4" x2="415.1" y2="1813.4" stroke="#777" stroke-width="0.7"/><line x1="387.5" y1="1816.3" x2="413.7" y2="1816.3" stroke="#777" stroke-width="0.7"/><line x1="389.7" y1="1819.2" x2="411.5" y2="1819.2" stroke="#777" stroke-width="0.7"/><line x1="393.2" y1="1822.1" x2="408.0" y2="1822.1" stroke="#777" stroke-width="0.7"/>
<text x="378.1" y="1804.0" font-size="17.5" fill="#000" text-anchor="end">62</text>
<text x="423.6" y="1804.0" font-size="17.5" fill="#000" text-anchor="start">+6.3</text>
<line x1="400.6" y1="1824.6" x2="400.6" y2="1842.6" stroke="#000" stroke-width="2"/>
<line x1="386.90000000000003" y1="1842.6" x2="414.3" y2="1842.6" stroke="#000" stroke-width="2"/>
<path d="M386.6,1860.6 H397.1 L394.1,1843.1 H390.6 Z" fill="#000"/><path d="M413.6,1843.1 L405.6,1860.6 M409.8,1852.1 L413.3,1860.6" stroke="#000" stroke-width="1.8" fill="none"/>
<text x="373.8" y="1858.8999999999999" font-size="17.5" fill="#000" text-anchor="end">3.22</text>
<text x="427.90000000000003" y="1858.8999999999999" font-size="17.5" fill="#000" text-anchor="start">+3.08</text>
<line x1="29.599999999999994" y1="1838.5" x2="161.6" y2="1838.5" stroke="#000" stroke-width="2"/>
<circle cx="73.6" cy="1838.5" r="17" fill="#fff" stroke="#000" stroke-width="2"/><path d="M56.599999999999994,1838.5 A17,17 0 0 0 90.6,1838.5 Z" fill="#000"/><line x1="58.3" y1="1841.4" x2="88.9" y2="1841.4" stroke="#777" stroke-width="0.7"/><line x1="59.1" y1="1844.3" x2="88.1" y2="1844.3" stroke="#777" stroke-width="0.7"/><line x1="60.5" y1="1847.2" x2="86.7" y2="1847.2" stroke="#777" stroke-width="0.7"/><line x1="62.7" y1="1850.1" x2="84.5" y2="1850.1" stroke="#777" stroke-width="0.7"/><line x1="66.2" y1="1853.0" x2="81.0" y2="1853.0" stroke="#777" stroke-width="0.7"/>
<text x="51.099999999999994" y="1834.9" font-size="17.5" fill="#000" text-anchor="end">66</text>
<text x="96.6" y="1834.9" font-size="17.5" fill="#000" text-anchor="start">+8.9</text>
<line x1="73.6" y1="1855.5" x2="73.6" y2="1873.5" stroke="#000" stroke-width="2"/>
<line x1="59.89999999999999" y1="1873.5" x2="87.3" y2="1873.5" stroke="#000" stroke-width="2"/>
<path d="M59.599999999999994,1891.5 H70.1 L67.1,1874.0 H63.599999999999994 Z" fill="#000"/><path d="M86.6,1874.0 L78.6,1891.5 M82.8,1883.0 L86.3,1891.5" stroke="#000" stroke-width="1.8" fill="none"/>
<text x="46.8" y="1889.8" font-size="17.5" fill="#000" text-anchor="end">3.30</text>
<text x="100.89999999999999" y="1889.8" font-size="17.5" fill="#000" text-anchor="start">+5.64</text>
<path d="M509.09999999999997,1421.9L514.3,1427.1M514.3,1421.9L509.09999999999997,1427.1M595.0,1445.0L600.2,1450.1999999999998M600.2,1445.0L595.0,1450.1999999999998M481.79999999999995,1465.0L487.0,1470.1999999999998M487.0,1465.0L481.79999999999995,1470.1999999999998M356.7,1481.2L361.90000000000003,1486.3999999999999M361.90000000000003,1481.2L356.7,1486.3999999999999M397.0,1485.0L402.20000000000005,1490.1999999999998M402.20000000000005,1485.0L397.0,1490.1999999999998M269.7,1500.1000000000001L274.90000000000003,1505.3M274.90000000000003,1500.1000000000001L269.7,1505.3M433.4,1500.4L438.6,1505.6M438.6,1500.4L433.4,1505.6M191.9,1513.0L197.1,1518.1999999999998M197.1,1513.0L191.9,1518.1999999999998M103.60000000000001,1534.1000000000001L108.8,1539.3M108.8,1534.1000000000001L103.60000000000001,1539.3M402.2,1548.1000000000001L407.40000000000003,1553.3M407.40000000000003,1548.1000000000001L402.2,1553.3M502.09999999999997,1559.7L507.3,1564.8999999999999M507.3,1559.7L502.09999999999997,1564.8999999999999M312.9,1569.1000000000001L318.1,1574.3M318.1,1569.1000000000001L312.9,1574.3M215.4,1582.4L220.6,1587.6M220.6,1582.4L215.4,1587.6M433.09999999999997,1584.2L438.3,1589.3999999999999M438.3,1584.2L433.09999999999997,1589.3999999999999M249.8,1596.5L255.0,1601.6999999999998M255.0,1596.5L249.8,1601.6999999999998M577.5,1622.8000000000002L582.7,1628.0M582.7,1622.8000000000002L577.5,1628.0M540.6999999999999,1639.6000000000001L545.9,1644.8M545.9,1639.6000000000001L540.6999999999999,1644.8M256.79999999999995,1659.6000000000001L262.0,1664.8M262.0,1659.6000000000001L256.79999999999995,1664.8M330.4,1644.5L335.6,1649.6999999999998M335.6,1644.5L330.4,1649.6999999999998M174.4,1669.0L179.6,1674.1999999999998M179.6,1669.0L174.4,1674.1999999999998M101.5,1675.3000000000002L106.69999999999999,1680.5M106.69999999999999,1675.3000000000002L101.5,1680.5M28.9,1632.2L34.1,1637.3999999999999M34.1,1632.2L28.9,1637.3999999999999M565.9,1706.9L571.1,1712.1M571.1,1706.9L565.9,1712.1M486.4,1726.2L491.6,1731.3999999999999M491.6,1726.2L486.4,1731.3999999999999M418.0,1736.7L423.20000000000005,1741.8999999999999M423.20000000000005,1736.7L418.0,1741.8999999999999M411.7,1754.2L416.90000000000003,1759.3999999999999M416.90000000000003,1754.2L411.7,1759.3999999999999M277.79999999999995,1757.7L283.0,1762.8999999999999M283.0,1757.7L277.79999999999995,1762.8999999999999M336.7,1755.9L341.90000000000003,1761.1M341.90000000000003,1755.9L336.7,1761.1M187.4,1765.8000000000002L192.6,1771.0M192.6,1765.8000000000002L187.4,1771.0M146.70000000000002,1782.9L151.9,1788.1M151.9,1782.9L146.70000000000002,1788.1M175.1,1798.0L180.29999999999998,1803.1999999999998M180.29999999999998,1798.0L175.1,1803.1999999999998M186.0,1796.6000000000001L191.2,1801.8M191.2,1796.6000000000001L186.0,1801.8M228.70000000000002,1803.6000000000001L233.9,1808.8M233.9,1803.6000000000001L228.70000000000002,1808.8M142.9,1814.5L148.1,1819.6999999999998M148.1,1814.5L142.9,1819.6999999999998M481.09999999999997,1802.2L486.3,1807.3999999999999M486.3,1802.2L481.09999999999997,1807.3999999999999M594.0,1766.5L599.2,1771.6999999999998M599.2,1766.5L594.0,1771.6999999999998M571.5,1812.7L576.7,1817.8999999999999M576.7,1812.7L571.5,1817.8999999999999M396.29999999999995,1823.2L401.5,1828.3999999999999M401.5,1823.2L396.29999999999995,1828.3999999999999M78.0,1848.8000000000002L83.19999999999999,1854.0M83.19999999999999,1848.8000000000002L78.0,1854.0M141.8,1848.8000000000002L147.0,1854.0M147.0,1848.8000000000002L141.8,1854.0M298.09999999999997,1842.9L303.3,1848.1M303.3,1842.9L298.09999999999997,1848.1M493.4,1843.6000000000001L498.6,1848.8M498.6,1843.6000000000001L493.4,1848.8M206.0,1867.4L211.2,1872.6M211.2,1867.4L206.0,1872.6M475.79999999999995,1864.6000000000001L481.0,1869.8M481.0,1864.6000000000001L475.79999999999995,1869.8M404.7,1872.7L409.90000000000003,1877.8999999999999M409.90000000000003,1872.7L404.7,1877.8999999999999M328.59999999999997,1888.1000000000001L333.8,1893.3M333.8,1888.1000000000001L328.59999999999997,1893.3M575.0,1868.8000000000002L580.2,1874.0M580.2,1868.8000000000002L575.0,1874.0M609.0,1531.6000000000001L614.2,1536.8M614.2,1531.6000000000001L609.0,1536.8" stroke="#808080" stroke-width="1.6" fill="none"/>
<text x="274" y="1329.4" font-size="36.3" fill="#000" text-anchor="start">Grankulla</text>
<path d="M987.4,1167.8000000000002L992.6,1173.0M992.6,1167.8000000000002L987.4,1173.0M1540.4,1103.4L1545.6,1108.6M1545.6,1103.4L1540.4,1108.6M1521.0,1000.4L1526.1999999999998,1005.6M1526.1999999999998,1000.4L1521.0,1005.6" stroke="#808080" stroke-width="1.6" fill="none"/>
<polyline points="560.0,1724.3 928.6,1686.1 1274.3,1652.5 1360.1,1645.0" fill="none" stroke="#000080" stroke-width="2" stroke-linecap="butt" stroke-linejoin="round"/>
<polyline points="602.4,1554.7 644.8,1719.4" fill="none" stroke="#000080" stroke-width="2" stroke-linecap="butt" stroke-linejoin="round"/>
<polyline points="618.7,1602.0 726.3,1540.0" fill="none" stroke="#0000ff" stroke-width="3" stroke-dasharray="7 8" stroke-linecap="butt" stroke-linejoin="round"/>
<polyline points="566.5,1624.8 589.4,1611.8 579.6,1575.9 560.0,1562.8" fill="none" stroke="#1e90d0" stroke-width="1.6" stroke-dasharray="10 4 2 4" stroke-linecap="butt" stroke-linejoin="round"/>
<line x1="807.3" y1="1628.7" x2="939.3" y2="1628.7" stroke="#000" stroke-width="2"/>
<circle cx="851.3" cy="1628.7" r="17" fill="#fff" stroke="#000" stroke-width="2"/><path d="M834.3,1628.7 A17,17 0 0 0 868.3,1628.7 Z" fill="#000"/><line x1="836.0" y1="1631.6" x2="866.6" y2="1631.6" stroke="#777" stroke-width="0.7"/><line x1="836.8" y1="1634.5" x2="865.8" y2="1634.5" stroke="#777" stroke-width="0.7"/><line x1="838.2" y1="1637.4" x2="864.4" y2="1637.4" stroke="#777" stroke-width="0.7"/><line x1="840.4" y1="1640.3" x2="862.2" y2="1640.3" stroke="#777" stroke-width="0.7"/><line x1="843.9" y1="1643.2" x2="858.7" y2="1643.2" stroke="#777" stroke-width="0.7"/>
<text x="828.8" y="1625.1000000000001" font-size="17.5" fill="#000" text-anchor="end">57</text>
<text x="874.3" y="1625.1000000000001" font-size="17.5" fill="#000" text-anchor="start">+6.6</text>
<line x1="851.3" y1="1645.7" x2="851.3" y2="1663.7" stroke="#000" stroke-width="2"/>
<line x1="837.5999999999999" y1="1663.7" x2="865.0" y2="1663.7" stroke="#000" stroke-width="2"/>
<path d="M837.3,1681.7 H847.8 L844.8,1664.2 H841.3 Z" fill="#000"/><path d="M864.3,1664.2 L856.3,1681.7 M860.5,1673.2 L864.0,1681.7" stroke="#000" stroke-width="1.8" fill="none"/>
<text x="824.5" y="1680.0" font-size="17.5" fill="#000" text-anchor="end">1.87</text>
<text x="878.5999999999999" y="1680.0" font-size="17.5" fill="#000" text-anchor="start">+4.69</text>
<line x1="658.9" y1="1696.6" x2="790.9" y2="1696.6" stroke="#000" stroke-width="2"/>
<circle cx="702.9" cy="1696.6" r="17" fill="#fff" stroke="#000" stroke-width="2"/><path d="M685.9,1696.6 A17,17 0 0 0 719.9,1696.6 Z" fill="#000"/><line x1="687.6" y1="1699.5" x2="718.2" y2="1699.5" stroke="#777" stroke-width="0.7"/><line x1="688.4" y1="1702.4" x2="717.4" y2="1702.4" stroke="#777" stroke-width="0.7"/><line x1="689.8" y1="1705.3" x2="716.0" y2="1705.3" stroke="#777" stroke-width="0.7"/><line x1="692.0" y1="1708.2" x2="713.8" y2="1708.2" stroke="#777" stroke-width="0.7"/><line x1="695.5" y1="1711.1" x2="710.3" y2="1711.1" stroke="#777" stroke-width="0.7"/>
<text x="680.4" y="1693.0" font-size="17.5" fill="#000" text-anchor="end">58</text>
<text x="725.9" y="1693.0" font-size="17.5" fill="#000" text-anchor="start">+6.6</text>
<line x1="702.9" y1="1713.6" x2="702.9" y2="1731.6" stroke="#000" stroke-width="2"/>
<line x1="689.1999999999999" y1="1731.6" x2="716.6" y2="1731.6" stroke="#000" stroke-width="2"/>
<text x="676.1" y="1747.8999999999999" font-size="17.5" fill="#000" text-anchor="end">1.68</text>
<text x="730.1999999999999" y="1747.8999999999999" font-size="17.5" fill="#000" text-anchor="start">+4.88</text>
<line x1="1189.5" y1="1650.9" x2="1321.5" y2="1650.9" stroke="#000" stroke-width="2"/>
<circle cx="1233.5" cy="1650.9" r="17" fill="#fff" stroke="#000" stroke-width="2"/><path d="M1216.5,1650.9 A17,17 0 0 0 1250.5,1650.9 Z" fill="#000"/><line x1="1218.2" y1="1653.8" x2="1248.8" y2="1653.8" stroke="#777" stroke-width="0.7"/><line x1="1219.0" y1="1656.7" x2="1248.0" y2="1656.7" stroke="#777" stroke-width="0.7"/><line x1="1220.4" y1="1659.6" x2="1246.6" y2="1659.6" stroke="#777" stroke-width="0.7"/><line x1="1222.6" y1="1662.5" x2="1244.4" y2="1662.5" stroke="#777" stroke-width="0.7"/><line x1="1226.1" y1="1665.4" x2="1240.9" y2="1665.4" stroke="#777" stroke-width="0.7"/>
<text x="1211.0" y="1647.3000000000002" font-size="17.5" fill="#000" text-anchor="end">113</text>
<text x="1256.5" y="1647.3000000000002" font-size="17.5" fill="#000" text-anchor="start">+5.1</text>
<line x1="1233.5" y1="1667.9" x2="1233.5" y2="1685.9" stroke="#000" stroke-width="2"/>
<line x1="1219.8" y1="1685.9" x2="1247.2" y2="1685.9" stroke="#000" stroke-width="2"/>
<text x="1206.7" y="1702.2" font-size="17.5" fill="#000" text-anchor="end">5.45</text>
<text x="1260.8" y="1702.2" font-size="17.5" fill="#000" text-anchor="start">-0.38</text>
<line x1="994.8" y1="1544.9" x2="1126.8" y2="1544.9" stroke="#000" stroke-width="2"/>
<circle cx="1038.8" cy="1544.9" r="17" fill="#fff" stroke="#000" stroke-width="2"/>
<text x="1016.3" y="1541.3000000000002" font-size="17.5" fill="#000" text-anchor="end">83</text>
<text x="1061.8" y="1541.3000000000002" font-size="17.5" fill="#000" text-anchor="start">+5.8</text>
<line x1="1038.8" y1="1561.9" x2="1038.8" y2="1579.9" stroke="#000" stroke-width="2"/>
<line x1="1025.1" y1="1579.9" x2="1052.5" y2="1579.9" stroke="#000" stroke-width="2"/>
<path d="M1024.8,1597.9 H1035.3 L1032.3,1580.4 H1028.8 Z" fill="#000"/><path d="M1051.8,1580.4 L1043.8,1597.9 M1048.0,1589.4 L1051.5,1597.9" stroke="#000" stroke-width="1.8" fill="none"/>
<text x="1012.0" y="1596.2" font-size="17.5" fill="#000" text-anchor="end">5.30</text>
<text x="1066.1" y="1596.2" font-size="17.5" fill="#000" text-anchor="start">+0.51</text>
<line x1="577.0" y1="1791.8" x2="709.0" y2="1791.8" stroke="#000" stroke-width="2"/>
<circle cx="621.0" cy="1791.8" r="17" fill="#fff" stroke="#000" stroke-width="2"/>
<text x="598.5" y="1788.2" font-size="17.5" fill="#000" text-anchor="end">88</text>
<text x="644.0" y="1788.2" font-size="17.5" fill="#000" text-anchor="start">+6.6</text>
<line x1="621.0" y1="1808.8" x2="621.0" y2="1826.8" stroke="#000" stroke-width="2"/>
<line x1="607.3" y1="1826.8" x2="634.7" y2="1826.8" stroke="#000" stroke-width="2"/>
<path d="M607.0,1844.8 H617.5 L614.5,1827.3 H611.0 Z" fill="#000"/><path d="M634.0,1827.3 L626.0,1844.8 M630.2,1836.3 L633.7,1844.8" stroke="#000" stroke-width="1.8" fill="none"/>
<text x="594.2" y="1843.1" font-size="17.5" fill="#000" text-anchor="end">3.70</text>
<text x="648.3" y="1843.1" font-size="17.5" fill="#000" text-anchor="start">+2.86</text>
<line x1="542.1" y1="1678.6" x2="674.1" y2="1678.6" stroke="#000" stroke-width="2"/>
<circle cx="586.1" cy="1678.6" r="17" fill="#fff" stroke="#000" stroke-width="2"/>
<text x="563.6" y="1675.0" font-size="17.5" fill="#000" text-anchor="end">99</text>
<text x="609.1" y="1675.0" font-size="17.5" fill="#000" text-anchor="start">+7.4</text>
<line x1="586.1" y1="1695.6" x2="586.1" y2="1713.6" stroke="#000" stroke-width="2"/>
<line x1="572.4" y1="1713.6" x2="599.8000000000001" y2="1713.6" stroke="#000" stroke-width="2"/>
<path d="M572.1,1731.6 H582.6 L579.6,1714.1 H576.1 Z" fill="#000"/><path d="M599.1,1714.1 L591.1,1731.6 M595.3000000000001,1723.1 L598.8000000000001,1731.6" stroke="#000" stroke-width="1.8" fill="none"/>
<text x="559.3000000000001" y="1729.8999999999999" font-size="17.5" fill="#000" text-anchor="end">2.10</text>
<text x="613.4" y="1729.8999999999999" font-size="17.5" fill="#000" text-anchor="start">+5.26</text>
<line x1="595.9" y1="1553.0" x2="727.9" y2="1553.0" stroke="#000" stroke-width="2"/>
<circle cx="639.9" cy="1553.0" r="17" fill="#fff" stroke="#000" stroke-width="2"/><path d="M622.9,1553.0 A17,17 0 0 0 656.9,1553.0 Z" fill="#000"/><line x1="624.6" y1="1555.9" x2="655.2" y2="1555.9" stroke="#777" stroke-width="0.7"/><line x1="625.4" y1="1558.8" x2="654.4" y2="1558.8" stroke="#777" stroke-width="0.7"/><line x1="626.8" y1="1561.7" x2="653.0" y2="1561.7" stroke="#777" stroke-width="0.7"/><line x1="629.0" y1="1564.6" x2="650.8" y2="1564.6" stroke="#777" stroke-width="0.7"/><line x1="632.5" y1="1567.5" x2="647.3" y2="1567.5" stroke="#777" stroke-width="0.7"/>
<text x="617.4" y="1549.4" font-size="17.5" fill="#000" text-anchor="end">59</text>
<text x="662.9" y="1549.4" font-size="17.5" fill="#000" text-anchor="start">+7.2</text>
<line x1="639.9" y1="1570.0" x2="639.9" y2="1588.0" stroke="#000" stroke-width="2"/>
<line x1="626.1999999999999" y1="1588.0" x2="653.6" y2="1588.0" stroke="#000" stroke-width="2"/>
<path d="M625.9,1606.0 H636.4 L633.4,1588.5 H629.9 Z" fill="#000"/><path d="M652.9,1588.5 L644.9,1606.0 M649.1,1597.5 L652.6,1606.0" stroke="#000" stroke-width="1.8" fill="none"/>
<text x="613.1" y="1604.3" font-size="17.5" fill="#000" text-anchor="end">1.61</text>
<text x="667.1999999999999" y="1604.3" font-size="17.5" fill="#000" text-anchor="start">+5.60</text>
<path d="M815.1,1568.4L820.3000000000001,1573.6M820.3000000000001,1568.4L815.1,1573.6M787.3,1585.3000000000002L792.5,1590.5M792.5,1585.3000000000002L787.3,1590.5M727.0,1616.3000000000002L732.2,1621.5M732.2,1616.3000000000002L727.0,1621.5M742.3,1625.5L747.5,1630.6999999999998M747.5,1625.5L742.3,1630.6999999999998M703.1999999999999,1626.1000000000001L708.4,1631.3M708.4,1626.1000000000001L703.1999999999999,1631.3M646.1,1662.0L651.3000000000001,1667.1999999999998M651.3000000000001,1662.0L646.1,1667.1999999999998M566.1999999999999,1706.3000000000002L571.4,1711.5M571.4,1706.3000000000002L566.1999999999999,1711.5M1046.6000000000001,1605.9L1051.8,1611.1M1051.8,1605.9L1046.6000000000001,1611.1M943.1999999999999,1627.1000000000001L948.4,1632.3M948.4,1627.1000000000001L943.1999999999999,1632.3M1156.6000000000001,1626.1000000000001L1161.8,1631.3M1161.8,1626.1000000000001L1156.6000000000001,1631.3M1254.4,1656.4L1259.6,1661.6M1259.6,1656.4L1254.4,1661.6M799.6999999999999,1706.0L804.9,1711.1999999999998M804.9,1706.0L799.6999999999999,1711.1999999999998M684.6,1706.0L689.8000000000001,1711.1999999999998M689.8000000000001,1706.0L684.6,1711.1999999999998M1010.8,1696.2L1016.0,1701.3999999999999M1016.0,1696.2L1010.8,1701.3999999999999M1109.3000000000002,1689.7L1114.5,1694.8999999999999M1114.5,1689.7L1109.3000000000002,1694.8999999999999M916.8,1721.7L922.0,1726.8999999999999M922.0,1721.7L916.8,1726.8999999999999M867.1999999999999,1735.7L872.4,1740.8999999999999M872.4,1735.7L867.1999999999999,1740.8999999999999M1208.1000000000001,1711.9L1213.3,1717.1M1213.3,1711.9L1208.1000000000001,1717.1M1288.0,1741.2L1293.1999999999998,1746.3999999999999M1293.1999999999998,1741.2L1288.0,1746.3999999999999M838.5,1758.5L843.7,1763.6999999999998M843.7,1758.5L838.5,1763.6999999999998M594.3,1767.3000000000002L599.5,1772.5M599.5,1767.3000000000002L594.3,1772.5M778.9,1798.3000000000002L784.1,1803.5M784.1,1798.3000000000002L778.9,1803.5M571.4,1813.0L576.6,1818.1999999999998M576.6,1813.0L571.4,1818.1999999999998M741.6999999999999,1818.5L746.9,1823.6999999999998M746.9,1818.5L741.6999999999999,1823.6999999999998M655.1999999999999,1821.8000000000002L660.4,1827.0M660.4,1821.8000000000002L655.1999999999999,1827.0M820.9,1844.0L826.1,1849.1999999999998M826.1,1844.0L820.9,1849.1999999999998M575.3,1869.1000000000001L580.5,1874.3M580.5,1869.1000000000001L575.3,1874.3M680.6999999999999,1874.0L685.9,1879.1999999999998M685.9,1874.0L680.6999999999999,1879.1999999999998M846.0,1658.7L851.2,1663.8999999999999M851.2,1658.7L846.0,1663.8999999999999M577.0,1622.9L582.2,1628.1M582.2,1622.9L577.0,1628.1" stroke="#808080" stroke-width="1.6" fill="none"/>
<line x1="2139.7" y1="424.3" x2="2145.3" y2="422.2" stroke="#fff" stroke-width="3"/>
<polyline points="2138.3,420.2 2142.8,418.5 2142.1,428.0 2146.9,426.1" fill="none" stroke="#000080" stroke-width="2"/>
<line x1="2141.2" y1="428.3" x2="2139.7" y2="424.3" stroke="#000080" stroke-width="0"/>
<line x1="2329.0" y1="492.5" x2="2334.8" y2="490.7" stroke="#fff" stroke-width="3"/>
<polyline points="2328.0,488.3 2332.6,486.9 2331.2,496.3 2336.1,494.8" fill="none" stroke="#000080" stroke-width="2"/>
<line x1="2330.3" y1="496.6" x2="2329.0" y2="492.5" stroke="#000080" stroke-width="0"/>
<line x1="2053.1" y1="671.0" x2="2056.9" y2="666.3" stroke="#fff" stroke-width="3"/>
<polyline points="2049.9,668.1 2053.0,664.4 2057.1,672.9 2060.3,669.0" fill="none" stroke="#000080" stroke-width="2"/>
<line x1="2056.5" y1="673.7" x2="2053.1" y2="671.0" stroke="#000080" stroke-width="0"/>
<line x1="1826.7" y1="597.7" x2="1831.4" y2="594.0" stroke="#fff" stroke-width="3"/>
<polyline points="1824.2,594.2 1827.9,591.2 1830.1,600.4 1834.1,597.3" fill="none" stroke="#000080" stroke-width="2"/>
<line x1="1829.4" y1="601.0" x2="1826.7" y2="597.7" stroke="#000080" stroke-width="0"/>
<line x1="2684.4" y1="384.0" x2="2690.1" y2="382.2" stroke="#fff" stroke-width="3"/>
<polyline points="2683.3,379.8 2687.9,378.4 2686.6,387.8 2691.5,386.3" fill="none" stroke="#000080" stroke-width="2"/>
<line x1="2685.6" y1="388.1" x2="2684.4" y2="384.0" stroke="#000080" stroke-width="0"/>
<line x1="2546.7" y1="268.4" x2="2552.3" y2="266.3" stroke="#fff" stroke-width="3"/>
<polyline points="2545.4,264.3 2549.9,262.6 2549.2,272.1 2554.0,270.2" fill="none" stroke="#000080" stroke-width="2"/>
<line x1="2548.3" y1="272.4" x2="2546.7" y2="268.4" stroke="#000080" stroke-width="0"/>
<line x1="1742.5" y1="879.5" x2="1744.0" y2="885.3" stroke="#fff" stroke-width="3"/>
<polyline points="1746.7,878.6 1747.9,883.3 1738.6,881.6 1739.9,886.5" fill="none" stroke="#000080" stroke-width="2"/>
<line x1="1738.3" y1="880.6" x2="1742.5" y2="879.5" stroke="#000080" stroke-width="0"/>
<line x1="1871.4" y1="931.9" x2="1874.4" y2="926.7" stroke="#fff" stroke-width="3"/>
<polyline points="1867.8,929.5 1870.3,925.4 1875.5,933.2 1878.2,928.9" fill="none" stroke="#000080" stroke-width="2"/>
<line x1="1875.0" y1="934.1" x2="1871.4" y2="931.9" stroke="#000080" stroke-width="0"/>
<line x1="1683.8" y1="1240.2" x2="1687.0" y2="1235.0" stroke="#fff" stroke-width="3"/>
<polyline points="1680.3,1237.7 1682.8,1233.6 1688.0,1241.6 1690.7,1237.2" fill="none" stroke="#000080" stroke-width="2"/>
<line x1="1687.5" y1="1242.4" x2="1683.8" y2="1240.2" stroke="#000080" stroke-width="0"/>
<line x1="1812.4" y1="1232.3" x2="1813.4" y2="1238.2" stroke="#fff" stroke-width="3"/>
<polyline points="1816.7,1231.8 1817.5,1236.5 1808.4,1234.0 1809.2,1239.0" fill="none" stroke="#000080" stroke-width="2"/>
<line x1="1808.2" y1="1233.0" x2="1812.4" y2="1232.3" stroke="#000080" stroke-width="0"/>
<line x1="1384.3" y1="1786.0" x2="1386.3" y2="1780.3" stroke="#fff" stroke-width="3"/>
<polyline points="1380.3,1784.4 1381.9,1779.9 1388.7,1786.5 1390.4,1781.6" fill="none" stroke="#000080" stroke-width="2"/>
<line x1="1388.4" y1="1787.4" x2="1384.3" y2="1786.0" stroke="#000080" stroke-width="0"/>
<line x1="1549.1" y1="1625.4" x2="1555.0" y2="1624.7" stroke="#fff" stroke-width="3"/>
<polyline points="1548.8,1621.1 1553.5,1620.6 1550.5,1629.6 1555.6,1629.0" fill="none" stroke="#000080" stroke-width="2"/>
<line x1="1549.5" y1="1629.7" x2="1549.1" y2="1625.4" stroke="#000080" stroke-width="0"/>
<line x1="1505.6" y1="1525.3" x2="1508.7" y2="1520.2" stroke="#fff" stroke-width="3"/>
<polyline points="1502.0,1522.8 1504.6,1518.8 1509.8,1526.7 1512.4,1522.3" fill="none" stroke="#000080" stroke-width="2"/>
<line x1="1509.2" y1="1527.5" x2="1505.6" y2="1525.3" stroke="#000080" stroke-width="0"/>
<line x1="1383.7" y1="1787.7" x2="1385.7" y2="1782.0" stroke="#fff" stroke-width="3"/>
<polyline points="1379.7,1786.0 1381.3,1781.5 1388.1,1788.1 1389.8,1783.3" fill="none" stroke="#000080" stroke-width="2"/>
<line x1="1387.8" y1="1789.1" x2="1383.7" y2="1787.7" stroke="#000080" stroke-width="0"/>
<line x1="1505.5" y1="1525.4" x2="1508.7" y2="1520.3" stroke="#fff" stroke-width="3"/>
<polyline points="1502.0,1522.9 1504.5,1518.9 1509.7,1526.8 1512.4,1522.4" fill="none" stroke="#000080" stroke-width="2"/>
<line x1="1509.2" y1="1527.6" x2="1505.5" y2="1525.4" stroke="#000080" stroke-width="0"/>
<line x1="1788.8" y1="1505.1" x2="1791.2" y2="1499.6" stroke="#fff" stroke-width="3"/>
<polyline points="1785.0,1503.2 1786.9,1498.8 1793.1,1506.0 1795.2,1501.3" fill="none" stroke="#000080" stroke-width="2"/>
<line x1="1792.7" y1="1506.9" x2="1788.8" y2="1505.1" stroke="#000080" stroke-width="0"/>
<line x1="647.1" y1="1404.2" x2="648.8" y2="1398.4" stroke="#fff" stroke-width="3"/>
<polyline points="643.1,1402.8 644.4,1398.2 651.6,1404.5 653.0,1399.6" fill="none" stroke="#000080" stroke-width="2"/>
<line x1="651.3" y1="1405.4" x2="647.1" y2="1404.2" stroke="#000080" stroke-width="0"/>
<line x1="240.6" y1="1758.3" x2="246.5" y2="1757.7" stroke="#fff" stroke-width="3"/>
<polyline points="240.3,1754.0 245.1,1753.5 242.0,1762.5 247.1,1762.0" fill="none" stroke="#000080" stroke-width="2"/>
<line x1="241.0" y1="1762.6" x2="240.6" y2="1758.3" stroke="#000080" stroke-width="0"/>
<line x1="509.0" y1="1767.0" x2="514.7" y2="1765.0" stroke="#fff" stroke-width="3"/>
<polyline points="507.8,1762.9 512.3,1761.3 511.4,1770.7 516.2,1769.1" fill="none" stroke="#000080" stroke-width="2"/>
<line x1="510.4" y1="1771.1" x2="509.0" y2="1767.0" stroke="#000080" stroke-width="0"/>
<line x1="925.6" y1="1686.4" x2="931.6" y2="1685.8" stroke="#fff" stroke-width="3"/>
<polyline points="925.4,1682.1 930.1,1681.6 927.1,1690.6 932.1,1690.1" fill="none" stroke="#000080" stroke-width="2"/>
<line x1="926.1" y1="1690.7" x2="925.6" y2="1686.4" stroke="#000080" stroke-width="0"/>
<line x1="1271.3" y1="1652.8" x2="1277.3" y2="1652.2" stroke="#fff" stroke-width="3"/>
<polyline points="1271.1,1648.5 1275.9,1648.0 1272.7,1657.0 1277.8,1656.5" fill="none" stroke="#000080" stroke-width="2"/>
<line x1="1271.7" y1="1657.1" x2="1271.3" y2="1652.8" stroke="#000080" stroke-width="0"/>
<line x1="623.0" y1="1634.8" x2="624.5" y2="1640.7" stroke="#fff" stroke-width="3"/>
<polyline points="627.2,1634.0 628.4,1638.6 619.1,1636.9 620.4,1641.8" fill="none" stroke="#000080" stroke-width="2"/>
<line x1="618.9" y1="1635.9" x2="623.0" y2="1634.8" stroke="#000080" stroke-width="0"/>
</g></svg>
<div style="position:absolute;left:0;top:1911px;width:3154px;height:33px;background:#f0f0f0;border-top:1px solid #fff;box-sizing:border-box"></div>
<div style="position:absolute;left:1983px;top:1912px;width:1px;height:31px;background:#a0a0a0"></div>
<div style="position:absolute;left:2248px;top:1912px;width:1px;height:31px;background:#a0a0a0"></div>
<div style="position:absolute;left:2711px;top:1912px;width:1px;height:31px;background:#a0a0a0"></div>
<div style="position:absolute;left:2954px;top:1912px;width:1px;height:31px;background:#a0a0a0"></div>
<div class="t" style="left:12px;top:1919px;font-size:20px;color:#000;">X=6697107.582&nbsp; Y=27444298.967 &nbsp; (GK27)</div>
<div class="t" style="left:1996px;top:1919px;font-size:20px;color:#000;">Ryhmä: 0+</div>
<div class="t" style="left:2260px;top:1919px;font-size:20px;color:#000;">Hakutapa: Lähin piste (Samat pisteet)</div>
<div class="t" style="left:2723px;top:1919px;font-size:20px;color:#000;">Zoom: XY&nbsp; /&nbsp; Kulmat</div>
<div class="t" style="left:2966px;top:1919px;font-size:20px;color:#000;">Maski ei käytössä</div>
<div style="position:absolute;left:0;top:0;width:1px;height:1944px;background:#0288ca"></div>
<div style="position:absolute;left:3153px;top:0;width:1px;height:1944px;background:#0288ca"></div>
<div style="position:absolute;left:0;top:1943px;width:3154px;height:1px;background:#0288ca"></div>
</body></html>
